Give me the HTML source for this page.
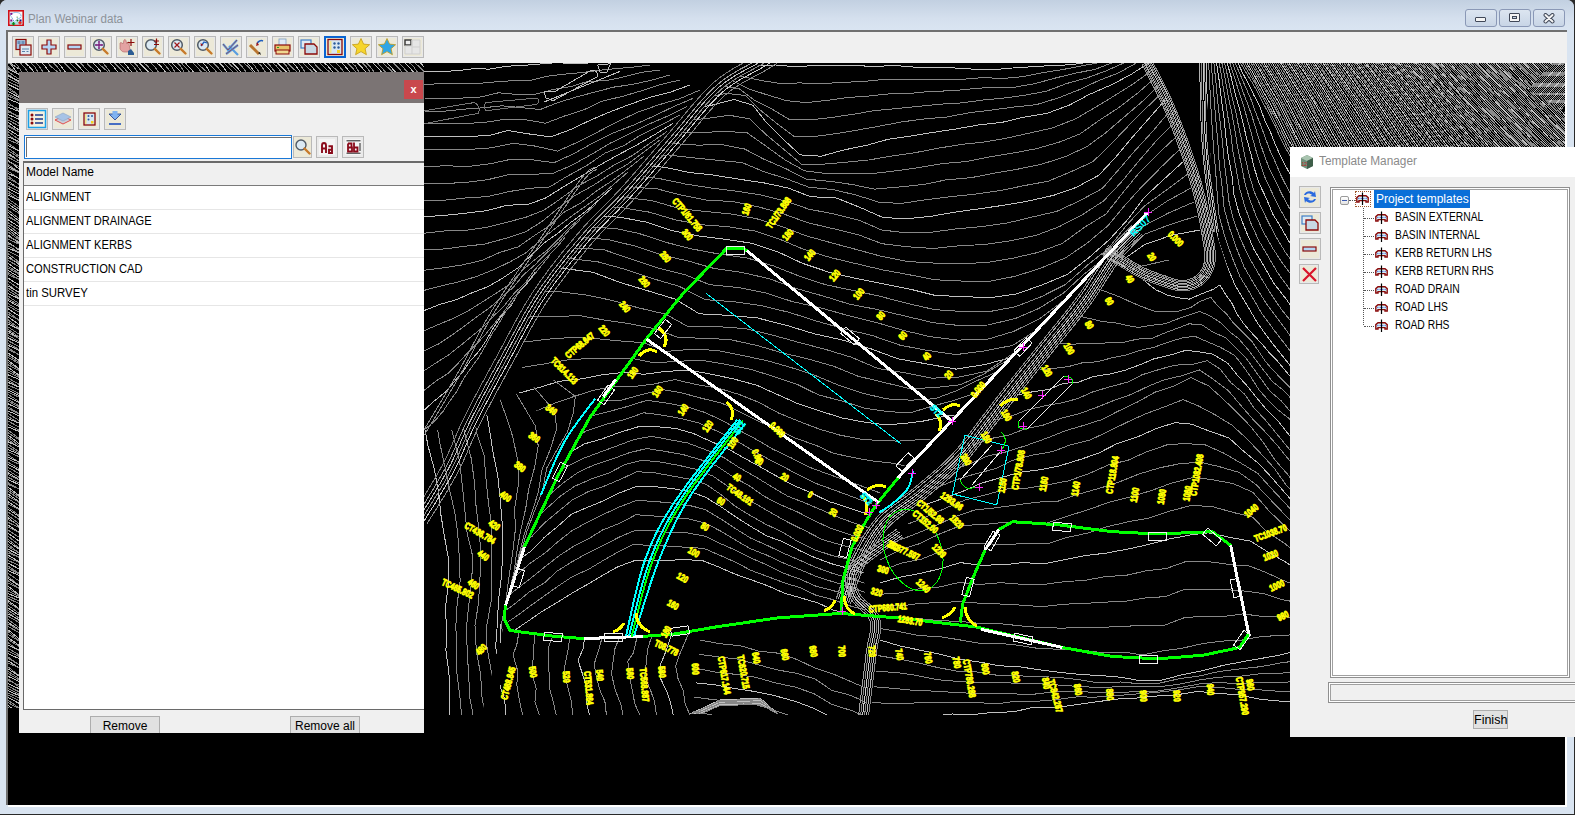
<!DOCTYPE html>
<html><head><meta charset="utf-8"><title>Plan Webinar data</title><style>
*{box-sizing:border-box;margin:0;padding:0}
html,body{width:1575px;height:815px;overflow:hidden;background:#2a2a2a;font-family:"Liberation Sans",sans-serif}
.abs{position:absolute}
#win{left:0;top:0;width:1574px;height:814px;background:#d9e4f1;border-radius:7px 7px 0 0;overflow:hidden}
#title{left:0;top:0;width:1574px;height:31px;background:linear-gradient(#c2d0e1,#d5e0ee 60%,#dae5f2)}
#ttxt{left:28px;top:12px;font-size:12px;color:#8d9299;transform:scaleX(0.965);transform-origin:0 0}
.wb{top:9px;width:32px;height:18px;border:1px solid #8a98b6;border-radius:3px;background:linear-gradient(#dce5f0,#c8d5e6)}
#tb{left:6px;top:30px;width:1561px;height:33px;background:#f0f0f0;border-top:2px solid #707070;border-left:2px solid #707070}
#canvas{left:8px;top:63px;width:1557px;height:742px;background:#000;overflow:hidden}
#lp{left:19px;top:72px;width:405px;height:661px;background:#f0f0f0;overflow:hidden}
#lpt{left:0;top:0;width:405px;height:31px;background:#7b7474}
#lpx{left:385px;top:8px;width:19px;height:19px;background:#c9484d;color:#fff;font-size:11px;text-align:center;line-height:18px;font-weight:bold}
#search{left:5px;top:63px;width:268px;height:24px;border:1px solid #1a78d6;background:#fff}
#list{left:4px;top:89px;width:401px;height:549px;background:#fff;border-top:2px solid #6a6a6a;border-left:1px solid #6a6a6a;border-bottom:1px solid #6a6a6a}
#lhead{left:0;top:0;width:401px;height:23px;background:#f0f0f0;border-bottom:1px solid #7a7a7a}
.row{left:0;width:401px;height:24px;border-bottom:1px solid #e6e6e6;font-size:12px;color:#000;padding-left:2px;line-height:22px;white-space:nowrap}
.row span{display:inline-block;transform-origin:0 50%}
.btn{height:20px;border:1px solid #adadad;background:#e1e1e1;font-size:12px;text-align:center;line-height:19px;color:#000}
#tm{left:1290px;top:147px;width:290px;height:590px;background:#f0f0f0}
#tmt{left:0;top:0;width:290px;height:30px;background:#fff}
#tree{left:40px;top:40px;width:240px;height:491px;background:#fff;border:1px solid #8f8f8f;box-shadow:inset 0 0 0 1px #fff,inset 0 0 0 2px #a0a0a0}
.ti{font-size:12px;color:#000;height:18px;line-height:18px;white-space:nowrap;transform-origin:0 50%}
</style></head><body><div id="win" class="abs">
  <div id="title" class="abs"></div>
  <svg class="abs" style="left:8px;top:10px" width="16" height="16" viewBox="0 0 16 16"><rect x="0.8" y="0.8" width="14.4" height="14.4" fill="#f4fafa" stroke="#d01018" stroke-width="1.6"/><rect x="2" y="11.5" width="12" height="3" fill="#a8e0e0"/><path d="M2.5 5.5C3.5 3 6 2.5 8 2.5S13 3 13 6 10 8 9 9 7 12 6.5 12 4.5 8 2.5 5.5z" fill="#fff" stroke="#5a9ad8" stroke-width="1" stroke-dasharray="1.2 0.8"/><rect x="2.3" y="2.8" width="2" height="2" fill="#80108a"/><rect x="2.3" y="9.5" width="2" height="2" fill="#80108a"/><rect x="11.5" y="9.5" width="2" height="2" fill="#10108a"/><rect x="8.5" y="6.5" width="1.5" height="1.5" fill="#9ac89a"/><circle cx="9.5" cy="10.5" r="1" fill="#106a10"/><path d="M5.5 12v3.5M3.8 13.8h3.4" stroke="#0a8a1a" stroke-width="1.3"/><path d="M12 11v3.4M10.3 12.8h3.4" stroke="#f01010" stroke-width="1.3"/></svg>
  <div id="ttxt" class="abs">Plan Webinar data</div>
  <div class="abs wb" style="left:1465px"><div class="abs" style="left:9px;top:7px;width:11px;height:5px;border:1px solid #404858;border-radius:1px;background:#f4f4f4"></div></div>
  <div class="abs wb" style="left:1499px"><div class="abs" style="left:9px;top:3px;width:11px;height:9px;border:1px solid #404858;border-radius:1px;background:#f4f4f4"><div class="abs" style="left:2px;top:2px;width:5px;height:3px;border:1px solid #404858;background:#c8d4e4"></div></div></div>
  <div class="abs wb" style="left:1533px"><svg class="abs" style="left:9px;top:3px" width="12" height="11" viewBox="0 0 12 11"><path d="M2.5 2L9.5 8.5M9.5 2L2.5 8.5" stroke="#404858" stroke-width="4" stroke-linecap="round"/><path d="M2.5 2L9.5 8.5M9.5 2L2.5 8.5" stroke="#f4f4f4" stroke-width="2" stroke-linecap="round"/></svg></div>
  <div id="tb" class="abs"></div>
  <div class="abs" style="left:6px;top:30px;width:2px;height:775px;background:#707070"></div>
  <div class="abs" style="left:8px;top:805px;width:1559px;height:2px;background:#fff"></div>
  <div class="abs" style="left:1565px;top:63px;width:2px;height:744px;background:#fff"></div>
  <div class="abs" style="left:12px;top:36px;width:22px;height:22px;border:1px solid #b9b9b9;background:#e8e8e8;"><div class="abs" style="left:1px;top:1px;width:18px;height:18px;background:#ece9d8"></div><svg class="abs" style="left:0;top:0" width="20" height="20" viewBox="0 0 20 20"><rect x="3" y="2.5" width="10" height="10" fill="#a9c9e6" stroke="#8b0a0a" stroke-width="1.2"/><rect x="4.5" y="4" width="3" height="3" fill="#6a8fb8"/><rect x="8.5" y="4" width="3" height="3" fill="#6a8fb8"/><rect x="7" y="8" width="11" height="10" fill="#dfe9f2" stroke="#8b0a0a" stroke-width="1.2"/><path d="M9 12h7M9 14.5h3M13.5 14.5h2" stroke="#5a7fa8"/></svg></div><div class="abs" style="left:38px;top:36px;width:22px;height:22px;border:1px solid #b9b9b9;background:#e8e8e8;"><div class="abs" style="left:1px;top:1px;width:18px;height:18px;background:#ece9d8"></div><svg class="abs" style="left:0;top:0" width="20" height="20" viewBox="0 0 20 20"><path d="M8 3h4v5h5v4h-5v5h-4v-5h-5v-4h5z" fill="#b5d6f5" stroke="#8b0a0a" stroke-width="1.2"/></svg></div><div class="abs" style="left:64px;top:36px;width:22px;height:22px;border:1px solid #b9b9b9;background:#e8e8e8;"><div class="abs" style="left:1px;top:1px;width:18px;height:18px;background:#ece9d8"></div><svg class="abs" style="left:0;top:0" width="20" height="20" viewBox="0 0 20 20"><rect x="3" y="8" width="13" height="4" fill="#b5d6f5" stroke="#8b0a0a" stroke-width="1.2"/></svg></div><div class="abs" style="left:90px;top:36px;width:22px;height:22px;border:1px solid #b9b9b9;background:#e8e8e8;"><div class="abs" style="left:1px;top:1px;width:18px;height:18px;background:#ece9d8"></div><svg class="abs" style="left:0;top:0" width="20" height="20" viewBox="0 0 20 20"><circle cx="8" cy="8" r="5.3" fill="#dbe9f3" stroke="#505a66" stroke-width="1.5"/><path d="M11.8 11.8L16.5 16.5" stroke="#c77a2a" stroke-width="2.4" stroke-linecap="round"/><path d="M8 4.5v7M4.5 8h7" stroke="#7a1a7a" stroke-width="1.3"/><path d="M8 3.8l-1.3 1.5h2.6zM8 12.2l-1.3-1.5h2.6zM3.8 8l1.5-1.3v2.6zM12.2 8l-1.5-1.3v2.6z" fill="#7a1a7a"/></svg></div><div class="abs" style="left:116px;top:36px;width:22px;height:22px;border:1px solid #b9b9b9;background:#e8e8e8;"><div class="abs" style="left:1px;top:1px;width:18px;height:18px;background:#ece9d8"></div><svg class="abs" style="left:0;top:0" width="20" height="20" viewBox="0 0 20 20"><path d="M3 6c1-1 2 0 3 1l1-4c1-1 2 0 2 1l1 3 1-2c1 0 2 1 1 2l1 5c0 2-1 3-3 3h-3c-2 0-3-2-4-3z" fill="#e3a2a2" stroke="#b06666" stroke-width="0.6"/><path d="M11 14l3-2 3 4v2h-6z" fill="#2d5d94"/><path d="M14 2v7M10.5 5.5h7" stroke="#8b0a0a" stroke-width="1.2"/></svg></div><div class="abs" style="left:142px;top:36px;width:22px;height:22px;border:1px solid #b9b9b9;background:#e8e8e8;"><div class="abs" style="left:1px;top:1px;width:18px;height:18px;background:#ece9d8"></div><svg class="abs" style="left:0;top:0" width="20" height="20" viewBox="0 0 20 20"><circle cx="8" cy="8" r="5.3" fill="#dbe9f3" stroke="#505a66" stroke-width="1.5"/><path d="M11.8 11.8L16.5 16.5" stroke="#c77a2a" stroke-width="2.4" stroke-linecap="round"/><path d="M13.5 1.5v5M11 4h5M11 7.5h5" stroke="#8b0a0a" stroke-width="1.2"/></svg></div><div class="abs" style="left:168px;top:36px;width:22px;height:22px;border:1px solid #b9b9b9;background:#e8e8e8;"><div class="abs" style="left:1px;top:1px;width:18px;height:18px;background:#ece9d8"></div><svg class="abs" style="left:0;top:0" width="20" height="20" viewBox="0 0 20 20"><circle cx="8" cy="8" r="5.3" fill="#dbe9f3" stroke="#505a66" stroke-width="1.5"/><path d="M11.8 11.8L16.5 16.5" stroke="#c77a2a" stroke-width="2.4" stroke-linecap="round"/><path d="M5.5 5.5l5 5M10.5 5.5l-5 5" stroke="#a01818" stroke-width="1.2"/></svg></div><div class="abs" style="left:194px;top:36px;width:22px;height:22px;border:1px solid #b9b9b9;background:#e8e8e8;"><div class="abs" style="left:1px;top:1px;width:18px;height:18px;background:#ece9d8"></div><svg class="abs" style="left:0;top:0" width="20" height="20" viewBox="0 0 20 20"><circle cx="8" cy="8" r="5.3" fill="#dbe9f3" stroke="#505a66" stroke-width="1.5"/><path d="M11.8 11.8L16.5 16.5" stroke="#c77a2a" stroke-width="2.4" stroke-linecap="round"/><path d="M6 9l3-4l3 1" fill="none" stroke="#1f5fbf" stroke-width="1.3"/><path d="M6 9l-0.5-3 3 2z" fill="#a01818"/></svg></div><div class="abs" style="left:220px;top:36px;width:22px;height:22px;border:1px solid #b9b9b9;background:#e8e8e8;"><div class="abs" style="left:1px;top:1px;width:18px;height:18px;background:#ece9d8"></div><svg class="abs" style="left:0;top:0" width="20" height="20" viewBox="0 0 20 20"><path d="M2 7l5 6 9-10M5 17l12-9M8 9l9 9" fill="none" stroke="#5a9ee0" stroke-width="2.2"/><path d="M2 7l5 6 9-10M5 17l12-9" fill="none" stroke="#a01818" stroke-width="0.6"/></svg></div><div class="abs" style="left:246px;top:36px;width:22px;height:22px;border:1px solid #b9b9b9;background:#e8e8e8;"><div class="abs" style="left:1px;top:1px;width:18px;height:18px;background:#ece9d8"></div><svg class="abs" style="left:0;top:0" width="20" height="20" viewBox="0 0 20 20"><path d="M3 8l9 9" stroke="#b8742e" stroke-width="3"/><path d="M11 16l3 2-1-3z" fill="#222"/><path d="M10 7c1-3 4-4 6-3" fill="none" stroke="#1f5fbf" stroke-width="1.5"/><path d="M9 9l1-4 2 3z" fill="#a01818"/></svg></div><div class="abs" style="left:272px;top:36px;width:22px;height:22px;border:1px solid #b9b9b9;background:#e8e8e8;"><div class="abs" style="left:1px;top:1px;width:18px;height:18px;background:#ece9d8"></div><svg class="abs" style="left:0;top:0" width="20" height="20" viewBox="0 0 20 20"><rect x="6" y="2" width="7" height="7" fill="#dfeaf7" stroke="#7b9cc2" stroke-width="0.8"/><rect x="2" y="8" width="15" height="6" fill="#e8c46a" stroke="#8b0a0a" stroke-width="1.2"/><rect x="3" y="13" width="13" height="4" fill="#f0d890" stroke="#8b0a0a" stroke-width="1"/><rect x="4" y="10" width="2" height="1" fill="#2a9a2a"/></svg></div><div class="abs" style="left:298px;top:36px;width:22px;height:22px;border:1px solid #b9b9b9;background:#e8e8e8;"><div class="abs" style="left:1px;top:1px;width:18px;height:18px;background:#ece9d8"></div><svg class="abs" style="left:0;top:0" width="20" height="20" viewBox="0 0 20 20"><rect x="2" y="3" width="10" height="8" fill="#dfeaf2" stroke="#3f7fc8" stroke-width="1.2"/><path d="M6 7h9l3 3v7h-12z" fill="#c8d8e4" stroke="#8b0a0a" stroke-width="1.3"/></svg></div><div class="abs" style="left:324px;top:36px;width:22px;height:22px;border:1px solid #0a64d2;background:#e8e8e8;box-shadow:inset 0 0 0 1px #0a64d2;"><div class="abs" style="left:1px;top:1px;width:18px;height:18px;background:#ece9d8"></div><svg class="abs" style="left:0;top:0" width="20" height="20" viewBox="0 0 20 20"><rect x="3" y="2.5" width="14" height="15" fill="#d7e6f2" stroke="#8b0a0a" stroke-width="1.3"/><rect x="4.5" y="4" width="2" height="12" fill="#f2e38a"/><circle cx="9.5" cy="6.5" r="1.2" fill="#2a5a9a"/><circle cx="13.5" cy="6.5" r="1.2" fill="#2a5a9a"/><circle cx="9.5" cy="10.5" r="1.2" fill="#2a5a9a"/><circle cx="13.5" cy="10.5" r="1.2" fill="#2a5a9a"/><rect x="12" y="13" width="3" height="3" fill="#f5d320"/></svg></div><div class="abs" style="left:350px;top:36px;width:22px;height:22px;border:1px solid #b9b9b9;background:#e8e8e8;"><div class="abs" style="left:1px;top:1px;width:18px;height:18px;background:#ece9d8"></div><svg class="abs" style="left:0;top:0" width="20" height="20" viewBox="0 0 20 20"><path d="M10 1.5l2.6 5.6 6 .6-4.5 4 1.3 6-5.4-3.1-5.4 3.1 1.3-6-4.5-4 6-.6z" fill="#f6d52a" stroke="#c49a16" stroke-width="0.8"/></svg></div><div class="abs" style="left:376px;top:36px;width:22px;height:22px;border:1px solid #b9b9b9;background:#e8e8e8;"><div class="abs" style="left:1px;top:1px;width:18px;height:18px;background:#ece9d8"></div><svg class="abs" style="left:0;top:0" width="20" height="20" viewBox="0 0 20 20"><path d="M10 1.5l2.6 5.6 6 .6-4.5 4 1.3 6-5.4-3.1-5.4 3.1 1.3-6-4.5-4 6-.6z" fill="#2fa6e6" stroke="#c49a16" stroke-width="0.8"/></svg></div><div class="abs" style="left:402px;top:36px;width:22px;height:22px;border:1px solid #b9b9b9;background:#e8e8e8;"><div class="abs" style="left:1px;top:1px;width:18px;height:18px;background:#ece9d8"></div><svg class="abs" style="left:0;top:0" width="20" height="20" viewBox="0 0 20 20"><rect x="2" y="3" width="6" height="5" fill="#eee" stroke="#333" stroke-width="1.4"/><path d="M9 3h8v14H2v-8h7z" fill="#e6e6e6" stroke="#cfcfcf"/><path d="M9 10h8M9 3v14" stroke="#cfcfcf"/></svg></div>
  <div id="canvas" class="abs"><svg class="abs" style="left:-8px;top:-63px" width="1575" height="815" shape-rendering="crispEdges"><defs><clipPath id="cTL"><path d="M0.0 62.0L764.0 62.0L720.0 89.0L674.0 141.0L626.0 196.0L586.0 233.0L541.0 296.0L505.0 360.0L482.0 420.0L470.0 470.0L424.0 560.0L0.0 560.0Z"/></clipPath><clipPath id="cMID"><path d="M764.0 62.0L1150.0 62.0L1173.0 104.0L1191.0 152.0L1202.0 200.0L1210.0 233.0L1212.0 259.0L1202.0 281.0L1184.0 290.0L1140.0 277.0L1118.0 259.0L1100.0 250.0L1147.0 213.0L1100.0 262.0L1040.0 330.0L990.0 380.0L950.0 420.0L900.0 470.0L872.0 503.0L863.0 560.0L866.0 612.0L840.0 613.0L777.0 618.0L716.0 627.0L675.0 634.0L643.0 636.0L583.0 639.0L552.0 636.0L510.0 630.0L504.0 610.0L520.0 560.0L560.0 470.0L600.0 400.0L482.0 420.0L482.0 420.0L505.0 360.0L541.0 296.0L586.0 233.0L626.0 196.0L674.0 141.0L720.0 89.0L764.0 62.0Z"/></clipPath><clipPath id="cBL"><path d="M0.0 430.0L473.0 430.0L500.0 400.0L560.0 378.0L604.0 396.0L558.0 476.0L524.0 547.0L505.0 605.0L504.0 625.0L480.0 720.0L0.0 720.0Z"/></clipPath><clipPath id="cRD"><path d="M1203.0 62.0L1600.0 62.0L1600.0 720.0L1300.0 720.0L1300.0 378.0L1260.0 332.0L1232.0 282.0L1216.0 232.0L1212.0 180.0L1209.0 120.0L1203.0 62.0Z"/></clipPath><clipPath id="cLR"><path d="M872.0 503.0L900.0 470.0L950.0 420.0L1000.0 370.0L1060.0 310.0L1118.0 259.0L1140.0 279.0L1184.0 294.0L1204.0 285.0L1214.0 262.0L1216.0 232.0L1232.0 282.0L1260.0 332.0L1300.0 378.0L1300.0 720.0L863.0 720.0L870.0 620.0L863.0 560.0Z"/></clipPath><clipPath id="cBOT"><path d="M500.0 600.0L510.0 630.0L552.0 636.0L583.0 639.0L643.0 636.0L675.0 634.0L716.0 627.0L777.0 618.0L840.0 613.0L866.0 612.0L866.0 720.0L500.0 720.0Z"/></clipPath><clipPath id="cRDn"><path d="M1203.0 62.0L1554.0 62.0L1528.0 90.0L1575.0 118.0L1600.0 118.0L1600.0 720.0L1300.0 720.0L1300.0 378.0L1260.0 332.0L1232.0 282.0L1216.0 232.0L1212.0 180.0L1209.0 120.0L1203.0 62.0Z"/></clipPath><clipPath id="cNose"><path d="M1554.0 62.0L1575.0 62.0L1575.0 118.0L1528.0 90.0Z"/></clipPath><clipPath id="cTop"><path d="M8.0 63.0L424.0 63.0L424.0 72.0L8.0 72.0Z"/></clipPath><clipPath id="cLeft"><path d="M8.0 63.0L19.0 63.0L19.0 708.0L8.0 708.0Z"/></clipPath><clipPath id="cv"><rect x="8" y="63" width="1557" height="652"/></clipPath></defs><g clip-path="url(#cv)"><g fill="none" stroke-width="1" clip-path="url(#cTL)"><path stroke="#c0c0c0" d="M424.0 72.0L440.0 71.4L456.9 70.8L474.2 68.6L489.3 69.1L506.5 66.2L524.8 65.3L541.0 63.9L557.2 62.6L573.8 63.8L590.2 62.9L607.2 60.6L624.0 61.0L640.0 60.0"/><path stroke="#878787" d="M424.0 85.0L441.1 83.3L460.1 83.7L477.3 83.6L494.7 81.9L511.4 80.8L529.0 80.8L547.2 76.2L562.6 74.3L581.7 72.6L598.3 70.4L615.3 68.7L632.3 67.2L650.0 65.0"/><path stroke="#878787" d="M424.0 98.0L442.8 98.5L461.5 98.1L480.4 97.0L498.4 92.8L517.2 94.5L535.7 94.2L552.9 89.6L570.9 86.6L587.3 81.5L606.6 80.6L622.9 77.1L641.7 72.3L660.0 70.0"/><path stroke="#878787" d="M424.0 111.0L443.0 111.3L463.9 109.2L482.7 107.8L502.3 105.8L521.9 107.7L540.2 109.5L558.1 102.5L577.0 96.8L594.2 92.2L613.9 87.1L631.3 84.6L650.8 80.4L670.0 75.0"/><path stroke="#878787" d="M424.0 124.0L445.4 123.5L464.8 123.6L485.6 122.2L505.7 119.2L526.7 119.9L545.6 123.2L564.0 116.2L584.5 109.5L602.2 101.1L621.2 96.7L639.8 91.3L660.8 84.5L680.0 80.0"/><path stroke="#c0c0c0" d="M424.0 137.0L445.7 136.8L467.3 136.4L488.6 135.6L508.1 130.5L530.7 134.2L550.7 136.9L571.0 129.4L589.7 120.5L608.9 112.3L628.8 104.7L650.2 97.2L669.9 92.3L690.0 85.0"/><path stroke="#878787" d="M424.0 150.0L445.9 149.3L469.5 149.4L490.2 147.9L513.5 143.3L534.5 146.0L557.6 151.1L577.7 142.2L596.2 132.8L617.3 121.8L636.5 112.7L658.1 105.0L679.8 98.7L700.0 90.0"/><path stroke="#878787" d="M424.0 166.7L445.3 165.8L468.9 166.4L490.8 163.6L510.8 159.3L533.9 160.0L553.9 162.7L573.6 153.8L594.0 142.4L611.2 133.8L633.5 125.1L652.8 116.6L674.2 106.3L693.3 98.3"/><path stroke="#878787" d="M424.0 183.3L446.3 183.5L467.9 182.2L488.5 179.5L509.6 174.3L531.7 174.3L552.5 173.5L571.6 165.4L590.4 155.0L609.4 143.6L626.9 135.0L647.0 124.9L667.6 116.1L686.7 106.7"/><path stroke="#878787" d="M424.0 200.0L445.2 200.1L467.1 197.8L487.5 196.6L508.9 191.6L529.3 188.3L549.4 187.0L566.7 176.6L586.8 165.5L605.2 153.0L623.9 145.6L641.5 134.6L660.8 125.2L680.0 115.0"/><path stroke="#c0c0c0" d="M424.0 216.7L444.9 215.4L466.8 213.0L486.0 210.8L506.6 205.4L529.1 204.1L545.8 197.9L564.0 186.5L581.8 175.9L600.7 164.6L618.4 154.7L636.6 145.1L655.9 133.9L673.3 123.3"/><path stroke="#878787" d="M424.0 233.3L443.8 231.0L465.2 230.5L486.8 227.3L506.9 222.3L526.0 217.2L544.2 210.0L561.1 198.4L578.4 185.7L596.6 176.2L613.6 165.4L632.1 155.7L650.5 142.9L666.7 131.7"/><path stroke="#878787" d="M424.0 250.0L445.4 248.9L464.3 246.3L484.2 244.2L505.1 238.5L525.1 232.1L542.3 221.3L557.2 209.1L573.7 196.2L593.2 185.4L609.1 175.0L628.1 163.9L642.4 153.1L660.0 140.0"/><path stroke="#878787" d="M424.0 270.2L442.2 268.0L462.6 264.9L482.1 260.3L499.9 252.4L518.1 246.9L534.3 235.6L549.8 225.5L563.7 212.4L581.2 202.9L596.8 190.7L612.7 180.4L629.2 167.8L644.0 156.0"/><path stroke="#878787" d="M424.0 290.4L441.4 285.9L459.1 281.7L475.9 276.7L494.8 269.2L511.1 261.3L526.3 252.5L540.6 240.1L554.6 228.9L570.6 216.9L583.7 207.5L600.4 195.7L613.6 184.4L628.0 172.0"/><path stroke="#c0c0c0" d="M424.0 310.6L439.6 304.5L456.0 299.8L472.3 292.7L488.6 286.4L503.1 277.8L517.7 268.1L531.4 255.1L543.9 243.1L558.2 233.1L571.2 222.1L585.1 211.9L597.9 200.8L612.0 188.0"/><path stroke="#878787" d="M424.0 330.8L438.9 324.3L453.9 318.2L469.4 310.1L482.6 301.8L497.5 292.3L510.5 283.7L522.1 270.6L533.8 260.5L547.3 250.1L560.1 237.3L570.9 226.2L583.1 215.9L596.0 204.0"/><path stroke="#878787" d="M424.0 351.0L438.5 344.0L450.6 336.0L464.0 326.5L477.6 316.2L488.7 308.5L501.5 297.6L513.4 287.3L523.1 275.3L535.3 264.5L545.9 253.6L558.8 242.0L569.0 230.2L580.0 220.0"/><path stroke="#878787" d="M424.0 370.8L436.0 362.9L448.2 355.2L462.0 344.3L473.2 335.1L484.0 326.2L493.8 315.9L504.8 305.0L513.9 293.7L525.6 282.4L534.6 269.8L544.6 259.3L555.3 249.0L565.0 237.5"/><path stroke="#878787" d="M424.0 390.5L435.7 381.2L447.5 373.8L456.7 364.9L467.6 352.7L478.1 342.5L486.3 333.4L495.8 321.8L504.9 310.4L513.0 298.5L521.4 288.6L532.2 277.2L541.4 265.7L550.0 255.0"/><path stroke="#c0c0c0" d="M424.0 410.2L434.0 401.2L445.9 391.6L454.0 382.0L463.0 371.5L470.3 360.9L479.1 351.0L486.5 340.0L493.7 327.4L501.6 315.8L511.0 306.0L517.8 293.7L526.6 284.1L535.0 272.5"/><path stroke="#878787" d="M424.0 430.0L434.3 421.5L443.2 411.1L450.2 400.5L457.5 390.3L463.7 378.4L472.0 366.7L478.8 357.5L485.9 345.0L491.7 334.3L498.6 324.0L505.9 311.3L513.6 300.9L520.0 290.0"/></g><g fill="none" stroke-width="1" clip-path="url(#cMID)"><path stroke="#c0c0c0" d="M600.0 64.0L619.9 64.5L639.8 64.9L659.3 64.8L677.5 63.9L699.0 64.3L718.5 63.6L737.2 64.2L757.0 65.3L775.6 65.0L795.7 66.8L816.3 65.3L836.0 65.3L855.2 65.3L873.6 66.7L893.6 65.4L914.8 67.2L933.0 67.9L953.1 67.9L972.1 69.1L992.6 69.7L1012.6 68.0L1031.2 66.8L1050.3 65.6L1070.2 64.8L1090.0 62.0"/><path stroke="#878787" d="M604.0 74.8L623.3 74.6L644.2 73.3L665.5 73.0L684.7 72.2L705.7 70.4L725.6 71.4L743.6 77.0L761.1 80.5L780.8 83.6L800.0 82.9L820.5 83.8L840.8 82.4L862.4 81.6L881.5 79.7L902.1 79.8L921.5 79.4L943.1 79.4L961.9 79.3L982.2 77.7L1003.4 78.4L1022.9 76.7L1043.1 72.6L1062.5 69.6L1081.7 65.9L1102.0 62.0"/><path stroke="#878787" d="M608.0 85.6L629.3 85.4L649.2 82.4L671.8 82.2L691.5 80.0L712.6 79.1L731.5 80.2L748.1 88.7L766.4 94.6L786.3 100.6L806.3 102.6L826.9 100.4L846.6 97.6L867.4 96.2L888.6 93.9L910.9 93.3L931.7 91.3L951.6 90.8L972.5 88.8L993.2 87.1L1013.9 87.3L1035.6 83.5L1054.7 78.2L1073.9 73.5L1095.2 69.3L1114.0 62.0"/><path stroke="#878787" d="M612.0 96.4L633.3 95.3L655.7 93.4L677.1 91.8L698.0 89.2L719.1 85.7L739.1 88.7L754.4 100.3L772.8 109.5L789.1 119.4L810.1 119.9L832.0 117.4L853.7 114.2L874.4 110.6L896.6 108.6L917.4 106.5L940.0 104.2L961.7 102.9L982.3 100.1L1003.0 98.2L1026.0 95.0L1046.4 91.2L1066.7 83.5L1087.1 77.9L1107.0 70.5L1126.0 62.0"/><path stroke="#878787" d="M616.0 107.2L638.5 105.5L660.8 103.1L681.8 99.6L704.7 97.4L726.2 93.4L745.8 95.5L760.6 110.4L776.8 123.4L794.3 136.6L814.8 136.5L837.4 133.4L859.6 129.7L880.7 125.9L902.3 121.8L925.1 118.9L946.9 117.0L969.6 112.7L992.2 110.0L1014.1 107.0L1036.2 104.7L1058.1 98.0L1078.5 90.0L1098.2 80.8L1118.8 72.8L1138.0 62.0"/><path stroke="#c0c0c0" d="M620.0 118.0L643.8 116.1L666.0 112.0L689.5 108.4L710.6 105.5L734.2 99.5L752.8 105.2L766.3 122.4L782.3 138.4L800.1 154.9L821.2 156.2L843.1 150.1L866.3 145.4L887.6 139.4L911.5 135.9L932.9 132.4L955.4 129.1L978.8 124.9L1002.3 122.3L1023.4 117.2L1046.6 113.5L1069.4 105.1L1089.0 94.6L1111.2 84.9L1130.9 74.6L1150.0 62.0"/><path stroke="#878787" d="M614.0 128.8L637.6 126.1L661.1 122.3L684.4 120.6L707.0 118.4L729.5 115.3L749.7 118.9L766.3 134.8L782.8 148.4L801.5 164.2L824.3 164.1L845.3 162.3L868.6 160.0L891.8 156.1L914.5 152.8L937.5 148.3L961.7 144.4L983.7 142.1L1006.4 138.2L1030.7 132.8L1052.6 127.9L1075.7 118.8L1094.7 107.7L1114.8 95.5L1133.6 83.7L1153.0 69.6"/><path stroke="#878787" d="M608.0 139.6L632.3 135.9L654.8 134.5L679.6 133.0L701.5 132.5L726.8 131.3L747.4 133.0L765.9 146.1L785.0 159.9L804.5 170.8L826.3 173.6L848.9 173.1L871.9 173.6L895.3 170.9L917.8 167.8L941.3 163.7L965.9 161.6L990.1 156.8L1012.7 153.1L1036.4 148.7L1059.9 141.9L1080.1 133.9L1099.4 120.2L1119.3 107.3L1138.1 92.7L1156.0 77.2"/><path stroke="#878787" d="M602.0 150.4L625.6 147.6L649.6 145.1L674.2 143.6L697.4 145.1L722.3 144.7L744.6 149.0L763.7 159.1L784.8 168.2L806.7 179.2L830.6 181.4L852.6 184.6L874.5 189.1L897.7 187.1L923.5 184.5L946.0 179.9L971.5 177.6L995.2 173.0L1018.6 169.0L1041.6 164.2L1065.2 156.7L1086.9 146.7L1106.1 132.5L1124.3 116.9L1142.4 101.4L1159.0 84.8"/><path stroke="#878787" d="M596.0 161.2L620.6 158.5L645.4 155.2L668.5 155.0L692.9 157.8L718.6 160.4L741.9 162.5L763.8 171.6L786.7 178.9L808.9 187.2L832.4 189.5L856.1 195.0L879.5 202.4L901.8 203.4L925.9 199.7L950.5 196.7L974.5 194.3L999.5 190.7L1024.3 185.6L1048.0 181.3L1070.2 172.1L1092.8 161.8L1111.2 143.9L1127.6 126.7L1144.8 109.5L1162.0 92.4"/><path stroke="#c0c0c0" d="M590.0 172.0L614.6 170.0L639.4 165.8L664.3 167.2L689.5 172.5L713.1 175.0L739.0 179.2L763.5 182.8L788.4 188.1L810.5 196.7L836.1 197.9L859.8 207.3L882.1 217.2L905.1 219.0L931.4 216.2L956.3 212.0L979.7 208.7L1004.8 205.1L1029.0 200.9L1053.6 195.3L1076.0 187.5L1098.6 175.4L1115.9 157.0L1131.9 137.8L1148.2 119.3L1165.0 100.0"/><path stroke="#878787" d="M584.8 181.0L611.0 178.9L636.2 175.8L659.6 178.6L685.4 184.0L710.4 187.9L736.4 191.2L760.6 194.9L786.1 201.2L808.9 209.2L834.0 213.9L859.5 220.4L881.4 229.9L906.0 232.9L931.5 232.2L956.5 228.8L982.7 226.5L1006.8 223.1L1032.0 217.1L1056.6 211.4L1079.8 200.7L1102.3 188.5L1118.9 169.3L1135.0 150.6L1152.3 131.8L1169.0 112.0"/><path stroke="#878787" d="M579.6 190.0L605.9 188.7L630.9 187.1L656.5 188.7L681.0 195.1L707.0 200.2L732.8 201.5L759.3 207.1L782.6 213.6L807.3 222.6L834.1 228.9L858.2 234.7L882.0 243.7L906.8 246.7L932.9 248.5L959.0 245.8L984.4 244.5L1010.2 240.9L1035.9 235.4L1058.7 226.9L1082.6 214.6L1103.6 200.9L1121.2 182.3L1137.5 162.6L1155.3 141.9L1173.0 124.0"/><path stroke="#878787" d="M574.4 199.0L601.4 197.7L626.3 197.6L652.0 200.6L678.3 208.3L704.0 211.4L730.1 213.8L756.6 218.7L782.1 226.6L806.0 235.8L832.8 243.2L857.8 249.9L882.0 256.5L908.5 261.6L932.9 263.0L959.3 263.9L987.2 262.4L1012.8 258.2L1038.1 252.4L1062.4 243.4L1083.9 227.7L1105.9 214.1L1122.3 193.4L1139.5 172.4L1157.7 154.1L1177.0 136.0"/><path stroke="#878787" d="M569.2 208.0L596.0 207.8L622.8 207.8L649.7 212.2L675.1 219.8L701.1 224.7L727.6 226.6L754.6 231.0L779.2 239.0L803.8 249.4L830.6 257.6L856.7 263.8L883.1 270.0L908.9 274.7L935.3 279.8L962.5 281.1L988.9 281.4L1015.1 276.3L1039.9 268.5L1065.7 257.8L1087.6 242.8L1107.9 225.7L1125.0 205.3L1142.5 185.9L1162.0 166.3L1181.0 148.0"/><path stroke="#c0c0c0" d="M564.0 217.0L591.2 216.2L619.2 217.1L645.7 222.0L672.0 230.7L697.5 235.8L725.5 239.3L751.4 243.2L778.2 252.0L802.1 263.2L829.6 272.4L855.9 278.4L882.2 283.7L909.9 289.1L935.4 295.5L964.1 296.6L989.6 297.8L1017.2 293.8L1042.6 284.7L1067.8 274.2L1089.4 257.2L1109.5 239.5L1128.1 219.1L1144.2 197.5L1164.5 178.7L1185.0 160.0"/><path stroke="#878787" d="M558.0 226.6L585.2 227.7L614.1 228.1L639.3 233.6L665.7 242.3L692.7 249.1L719.3 254.1L747.9 258.2L774.3 266.2L800.5 276.6L826.3 284.9L852.1 290.2L879.1 296.1L906.6 303.2L934.4 309.6L960.8 311.4L989.3 311.6L1015.3 306.8L1041.3 296.7L1065.6 284.4L1087.8 264.9L1108.6 248.3L1125.7 226.2L1144.4 206.0L1166.1 190.2L1188.0 174.0"/><path stroke="#878787" d="M552.0 236.2L579.8 237.2L608.0 239.6L635.6 246.2L661.2 254.7L689.5 261.4L714.2 268.5L742.2 272.5L768.9 278.6L795.4 288.2L824.1 296.3L850.0 304.3L876.8 309.4L905.3 316.1L932.7 322.6L959.0 325.5L987.8 325.0L1015.1 318.6L1039.3 308.2L1063.5 293.1L1083.9 274.3L1106.7 256.5L1124.8 234.8L1144.2 216.4L1167.0 201.2L1191.0 188.0"/><path stroke="#878787" d="M546.0 245.8L575.1 248.3L602.9 249.4L628.9 258.4L656.6 267.6L684.9 274.7L709.7 284.7L738.7 287.6L765.1 292.8L792.7 301.7L821.2 308.0L847.5 315.4L875.2 322.2L902.8 330.2L929.6 336.6L957.6 340.1L987.3 339.3L1013.4 331.5L1038.8 319.2L1061.7 302.0L1082.1 284.5L1104.4 263.5L1122.8 244.3L1143.8 225.9L1168.3 213.1L1194.0 202.0"/><path stroke="#878787" d="M540.0 255.4L567.9 258.3L598.1 261.9L623.8 269.0L652.3 278.5L679.4 286.4L705.1 299.7L733.0 301.6L761.4 305.6L790.0 312.6L817.3 321.3L844.1 328.8L872.8 335.7L900.4 345.3L927.5 350.4L955.9 354.6L984.9 350.9L1012.6 345.4L1036.7 330.1L1059.3 312.4L1080.9 293.6L1102.1 273.7L1121.8 252.5L1145.1 234.0L1169.9 224.6L1197.0 216.0"/><path stroke="#c0c0c0" d="M534.0 265.0L563.0 268.4L592.6 272.2L619.6 282.3L646.5 290.4L675.1 299.1L699.3 313.8L728.0 315.3L757.6 318.0L787.1 325.5L813.9 333.7L843.0 340.2L871.2 348.9L897.8 358.8L926.0 363.8L956.0 369.1L984.7 364.6L1011.2 357.5L1035.2 340.3L1056.5 321.1L1079.0 301.7L1099.7 280.1L1121.0 261.1L1144.6 244.6L1171.6 235.2L1200.0 230.0"/><path stroke="#878787" d="M531.0 290.6L559.2 291.6L584.7 294.8L610.9 300.1L637.9 307.7L665.4 314.1L687.7 326.4L717.0 326.6L744.6 328.5L770.8 334.6L798.8 342.4L826.1 349.6L851.3 357.2L877.6 368.4L904.6 372.8L932.2 378.2L959.6 377.0L986.8 371.2L1007.9 356.9L1031.3 341.7L1051.6 325.6L1071.0 307.1L1093.2 291.7L1116.5 275.2L1142.0 266.1L1168.8 260.0"/><path stroke="#878787" d="M528.0 316.2L554.2 316.8L578.9 315.5L603.5 319.9L629.6 323.7L654.4 328.7L678.3 337.5L704.4 338.3L729.5 339.5L756.9 345.4L781.3 352.6L807.7 358.9L833.8 366.3L858.0 376.2L883.1 382.2L910.3 388.8L936.4 387.4L960.6 384.7L983.5 374.2L1005.1 361.6L1023.7 347.8L1044.0 333.2L1065.7 321.0L1086.5 305.8L1112.7 297.7L1137.5 290.0"/><path stroke="#878787" d="M525.0 341.9L549.0 339.1L573.6 337.3L596.4 338.7L620.6 341.0L643.5 342.7L666.2 351.4L691.2 349.3L716.5 350.3L741.0 355.2L766.9 360.6L791.3 367.6L814.0 375.0L839.2 385.4L862.5 393.3L887.3 398.9L911.1 400.2L935.1 398.7L957.1 390.5L976.9 380.7L998.0 371.5L1016.6 361.7L1037.2 350.5L1058.0 336.4L1082.3 328.1L1106.2 320.0"/><path stroke="#878787" d="M522.0 367.5L543.7 364.0L566.0 360.1L588.1 358.5L609.5 358.1L632.4 358.4L654.5 362.9L679.0 361.1L703.4 360.6L725.9 364.3L750.8 369.4L773.3 376.3L797.0 384.3L818.7 395.0L841.8 400.9L865.3 408.4L888.1 411.6L910.0 412.9L930.8 406.6L951.5 401.1L971.1 394.5L990.8 386.5L1010.3 379.9L1030.9 367.8L1053.0 357.0L1075.0 350.0"/><path stroke="#c0c0c0" d="M519.0 393.1L539.8 387.3L559.8 381.2L581.8 378.8L600.6 375.0L622.9 372.4L643.9 374.3L665.8 371.4L689.2 370.1L711.8 374.3L733.8 379.0L756.6 385.2L777.6 394.6L798.4 403.9L819.1 410.8L842.3 418.0L862.4 421.8L885.2 424.9L904.3 423.5L925.1 420.8L943.8 416.4L963.6 414.3L982.9 411.3L1002.1 398.4L1023.3 388.7L1043.8 380.0"/><path stroke="#878787" d="M516.0 418.8L534.2 411.9L555.2 403.0L572.2 397.1L591.1 390.9L611.3 386.8L631.4 386.9L653.3 384.1L674.8 379.6L697.3 384.7L718.2 388.1L738.7 394.3L758.6 402.2L778.5 413.0L799.1 421.4L819.3 429.1L839.9 435.1L859.8 439.0L878.7 440.6L898.6 441.1L916.7 439.9L935.4 439.8L955.4 440.9L972.8 428.7L993.5 418.7L1012.5 410.0"/><path stroke="#878787" d="M513.0 444.4L529.7 435.1L547.7 424.8L565.0 415.7L582.0 407.7L600.8 401.1L621.2 400.2L641.8 394.5L662.1 389.6L680.8 392.6L700.8 398.1L722.1 403.3L740.8 412.2L759.6 421.7L777.5 429.5L796.1 438.4L815.7 445.2L833.4 453.3L851.5 457.1L870.7 460.8L890.1 462.8L909.0 466.6L927.0 470.9L945.5 459.0L963.4 448.7L981.2 440.0"/><path stroke="#878787" d="M510.0 470.0L525.9 457.8L542.0 448.1L557.9 435.0L573.6 424.6L591.0 416.1L609.4 411.4L627.8 406.4L646.9 400.3L665.7 402.9L686.5 406.7L703.5 412.0L722.5 420.5L738.5 429.9L756.5 439.5L772.7 449.1L790.6 457.6L808.2 466.8L825.4 473.1L844.2 479.8L863.7 486.8L881.1 493.4L900.5 500.1L916.4 490.4L933.5 479.9L950.0 470.0"/><path stroke="#878787" d="M509.2 485.0L524.5 472.8L539.9 462.8L555.1 450.3L571.1 439.2L587.2 430.5L606.7 424.0L623.8 419.8L643.8 412.8L660.8 414.9L680.1 418.3L698.1 422.7L715.7 430.5L733.9 439.5L751.0 449.4L767.5 458.6L783.6 466.9L800.9 476.1L818.1 484.3L836.6 490.9L855.7 498.0L872.8 504.3L892.2 509.1L908.5 503.0L924.8 494.6L941.7 487.5"/><path stroke="#c0c0c0" d="M508.3 500.0L522.7 488.2L539.2 476.6L552.8 465.4L568.2 453.7L584.4 443.9L601.6 439.1L620.8 432.0L638.5 426.7L656.8 426.7L675.9 428.5L693.4 433.5L710.4 441.2L727.2 448.5L744.0 458.0L760.1 466.8L778.5 477.2L793.7 485.5L810.6 492.6L828.5 501.4L846.3 507.0L863.8 513.0L883.6 520.3L900.4 515.6L917.0 509.5L933.3 505.0"/><path stroke="#878787" d="M507.5 515.0L521.4 502.8L535.7 490.8L551.6 479.7L564.7 467.6L581.9 458.9L599.3 452.4L617.3 445.8L633.8 439.6L651.4 436.3L669.7 439.7L687.6 443.0L705.4 449.6L723.6 457.5L739.4 467.7L754.9 476.5L770.6 486.0L787.5 496.1L804.7 502.8L820.7 509.6L838.7 517.4L855.3 523.5L873.5 529.2L891.4 527.6L907.6 525.4L925.0 522.5"/><path stroke="#878787" d="M506.7 530.0L520.2 518.9L534.1 506.4L549.3 494.8L563.0 483.1L578.1 472.3L594.3 464.8L612.3 459.0L628.8 452.9L646.7 448.5L665.1 451.4L682.7 454.5L700.8 459.7L716.9 466.1L732.8 476.7L748.8 485.5L764.0 496.2L779.5 504.3L797.7 512.1L813.6 520.3L829.5 527.8L847.2 533.9L866.3 538.9L882.3 540.3L899.9 539.0L916.7 540.0"/><path stroke="#878787" d="M505.8 545.0L518.9 532.5L533.9 520.8L546.3 508.8L560.4 496.1L574.9 486.1L591.4 479.0L608.8 473.0L625.4 464.4L642.1 460.2L659.6 461.9L677.5 465.1L695.6 469.2L712.8 476.0L727.5 486.1L741.7 496.0L757.6 504.9L773.6 514.3L789.4 523.0L806.3 531.3L822.2 539.5L839.4 544.5L857.9 549.3L874.5 553.2L890.4 555.5L908.3 557.5"/><path stroke="#878787" d="M505.0 560.0L518.5 547.9L532.0 536.4L543.9 523.4L558.0 511.7L572.1 500.1L588.4 491.5L604.1 486.2L621.6 478.8L636.9 471.7L654.8 472.8L672.7 476.1L690.6 479.3L706.5 484.6L721.6 495.0L735.0 506.1L750.3 515.5L765.2 524.0L782.9 532.3L797.7 541.5L813.6 549.4L831.3 555.3L848.3 559.3L865.1 564.5L881.8 569.1L900.0 575.0"/><path stroke="#c0c0c0" d="M504.2 573.3L516.9 561.2L531.5 550.7L544.1 537.6L557.4 526.6L571.5 514.2L587.8 507.2L603.3 500.9L619.5 492.9L637.2 486.1L654.9 486.7L672.7 488.6L690.3 491.8L705.0 496.9L721.9 507.4L736.3 517.3L749.8 525.9L766.3 535.7L783.3 542.0L799.5 550.5L814.2 557.3L831.4 563.7L848.6 568.4L866.7 573.9L882.5 579.6L900.0 584.2"/><path stroke="#878787" d="M503.3 586.7L516.4 575.2L529.8 563.5L545.2 552.9L557.9 541.7L572.1 530.6L587.5 522.2L602.9 514.6L619.7 506.8L636.4 500.5L653.0 501.3L671.1 503.0L689.5 505.5L704.5 509.3L721.4 519.3L735.4 528.5L750.1 537.8L767.6 545.6L781.9 552.5L799.6 560.2L814.5 566.8L831.1 572.9L848.3 577.9L866.8 583.9L883.0 588.8L900.0 593.3"/><path stroke="#878787" d="M502.5 600.0L515.6 590.0L530.9 578.1L544.8 566.9L558.8 556.0L572.9 546.7L588.7 538.7L602.8 529.9L619.8 523.3L635.9 514.7L652.6 515.9L669.8 517.2L688.1 518.9L704.4 522.7L721.2 531.4L736.2 540.4L750.2 548.6L766.2 554.9L783.6 563.1L799.6 569.5L816.0 576.3L831.7 581.4L848.5 586.2L867.1 593.2L882.8 597.2L900.0 602.5"/><path stroke="#878787" d="M501.7 613.3L515.3 603.4L529.7 591.7L544.6 582.7L556.9 571.3L571.8 561.9L587.6 553.1L603.1 545.6L619.0 537.2L635.3 530.3L653.2 530.7L670.4 532.7L687.6 533.0L704.8 536.1L719.3 543.1L735.0 550.0L751.7 558.3L766.8 564.9L782.5 572.9L799.5 578.9L816.4 586.4L833.1 590.6L850.5 595.7L866.5 601.7L882.8 607.3L900.0 611.7"/><path stroke="#878787" d="M500.8 626.7L515.3 617.0L528.6 607.2L543.2 596.7L558.3 586.0L572.1 576.8L588.9 569.1L603.2 560.5L618.9 551.5L633.5 544.4L651.9 545.6L670.2 546.1L687.3 547.4L703.7 548.3L719.6 555.2L736.1 562.5L750.8 570.3L767.7 576.6L784.0 582.7L800.4 587.8L815.9 595.2L832.8 599.6L850.5 606.0L867.1 610.4L882.5 616.2L900.0 620.8"/><path stroke="#c0c0c0" d="M500.0 640.0L513.9 630.7L529.3 620.3L542.4 611.2L558.5 601.6L573.8 592.1L588.4 583.9L603.2 575.0L617.6 566.9L634.0 560.8L651.4 560.0L668.8 560.3L685.8 559.5L703.5 561.0L718.4 566.9L735.2 574.2L752.0 580.1L768.5 586.1L783.9 593.0L801.0 598.0L817.9 602.9L833.6 610.2L850.9 614.0L867.4 619.8L884.3 624.5L900.0 630.0"/></g><g fill="none" stroke-width="1"><path stroke="#c0c0c0" d="M690.0 714.0L720.0 700.0L760.0 698.0L778.0 714.0"/><path stroke="#878787" d="M691.5 714.0L720.0 700.8L760.0 698.9L778.0 714.0"/><path stroke="#878787" d="M693.0 714.0L720.0 701.6L760.0 699.8L778.0 714.0"/><path stroke="#c0c0c0" d="M694.5 714.0L720.0 702.4L760.0 700.7L778.0 714.0"/><path stroke="#878787" d="M696.0 714.0L720.0 703.2L760.0 701.6L778.0 714.0"/><path stroke="#878787" d="M697.5 714.0L720.0 704.0L760.0 702.5L778.0 714.0"/><path stroke="#c0c0c0" d="M699.0 714.0L720.0 704.8L760.0 703.4L778.0 714.0"/><path stroke="#878787" d="M700.5 714.0L720.0 705.6L760.0 704.3L778.0 714.0"/></g><g fill="none" stroke-width="1" clip-path="url(#cBOT)"><path stroke="#c0c0c0" d="M505.0 612.0L500.7 625.0L500.2 642.2L497.0 654.4L498.4 672.0L500.2 686.6L504.6 698.7L506.0 715.0"/><path stroke="#878787" d="M521.8 613.6L519.6 627.9L516.8 644.8L513.0 654.9L517.8 671.1L516.8 685.3L519.8 702.5L522.7 715.0"/><path stroke="#878787" d="M538.6 615.3L534.8 628.3L534.0 643.9L533.1 659.5L531.5 670.9L536.1 688.6L534.9 701.8L539.5 715.0"/><path stroke="#878787" d="M555.5 616.9L554.4 631.6L548.8 646.2L548.3 657.5L549.0 671.7L549.0 686.2L552.9 700.5L556.2 715.0"/><path stroke="#878787" d="M572.3 618.5L570.0 633.8L568.5 648.1L565.7 661.1L563.8 672.2L568.0 687.6L570.9 699.4L572.9 715.0"/><path stroke="#c0c0c0" d="M589.1 620.2L584.6 635.5L583.4 648.1L578.0 660.3L582.8 674.9L586.0 686.5L586.5 702.7L589.6 715.0"/><path stroke="#878787" d="M605.9 621.8L602.4 636.4L599.6 646.7L594.3 663.8L595.6 673.6L599.5 689.2L604.9 701.5L606.4 715.0"/><path stroke="#878787" d="M622.7 623.5L619.3 637.8L614.8 649.0L612.8 663.1L611.5 673.9L615.1 689.7L620.7 704.0L623.1 715.0"/><path stroke="#878787" d="M639.5 625.1L637.1 636.8L633.4 652.8L627.9 661.3L629.2 675.4L631.7 687.2L634.8 703.7L639.8 715.0"/><path stroke="#878787" d="M656.4 626.7L650.5 639.8L647.4 650.5L646.2 663.5L644.7 676.8L650.4 689.8L654.6 701.9L656.5 715.0"/><path stroke="#c0c0c0" d="M673.2 628.4L669.3 641.6L664.9 653.9L660.9 663.7L660.7 678.9L667.1 692.1L670.5 702.9L673.3 715.0"/><path stroke="#878787" d="M690.0 630.0L684.3 643.6L679.9 653.8L675.7 665.7L677.8 678.0L683.3 690.8L685.1 704.0L690.0 715.0"/><path stroke="#878787" d="M700.0 640.0L719.8 643.7L740.2 645.7L759.1 651.2L779.3 653.3L797.6 659.7L815.4 668.3L833.7 674.2L853.4 682.7L870.0 690.0"/><path stroke="#878787" d="M698.6 654.3L717.6 656.8L738.0 659.1L758.1 664.8L776.8 669.8L798.0 673.6L815.6 679.3L831.7 690.3L850.9 695.4L870.0 704.3"/><path stroke="#878787" d="M697.1 668.6L718.4 672.6L735.5 674.3L755.8 677.3L774.5 682.7L795.1 687.1L813.4 693.4L831.3 704.1L852.4 710.9L870.0 718.6"/><path stroke="#c0c0c0" d="M695.7 682.9L714.4 684.7L734.4 688.5L754.2 691.4L774.5 695.6L795.8 701.5L814.0 708.4L832.9 717.9L850.7 723.3L870.0 732.9"/><path stroke="#878787" d="M694.3 697.1L714.4 699.8L735.7 701.9L756.2 704.6L774.9 710.6L793.9 717.2L814.4 721.8L832.4 731.5L849.5 737.6L870.0 747.1"/><path stroke="#878787" d="M692.9 711.4L713.6 715.3L733.4 717.2L754.0 719.7L775.4 726.6L793.9 728.2L812.9 738.2L831.5 743.8L849.9 754.1L870.0 761.4"/><path stroke="#878787" d="M691.4 725.7L712.4 727.9L732.9 732.6L754.7 735.9L773.0 740.1L794.9 745.4L813.7 751.5L831.9 760.6L851.4 768.3L870.0 775.7"/><path stroke="#878787" d="M690.0 740.0L709.7 741.5L730.6 746.2L752.3 747.8L771.4 754.7L791.2 759.7L813.3 765.6L833.4 774.2L849.0 783.3L870.0 790.0"/></g><g fill="none" stroke-width="1" clip-path="url(#cBL)"><path stroke="#c0c0c0" d="M424.0 425.0L428.1 446.1L434.1 468.3L438.5 491.7L440.9 514.8L444.6 537.1L448.4 558.5L448.3 584.0L445.8 604.7L446.2 630.2L446.0 651.0L448.9 672.6L449.9 696.4L450.0 720.0"/><path stroke="#878787" d="M436.2 421.0L439.7 442.4L445.1 467.6L449.4 489.5L454.7 511.6L457.7 533.5L459.3 557.0L460.1 581.0L457.1 604.7L455.8 626.8L456.9 651.4L457.0 674.0L460.0 698.2L462.0 720.0"/><path stroke="#878787" d="M448.4 417.0L454.0 439.3L459.7 461.7L462.5 487.1L464.8 509.4L467.2 533.4L472.7 556.4L471.8 578.9L469.0 603.4L466.5 626.4L467.2 651.5L468.6 673.9L469.8 697.4L474.0 720.0"/><path stroke="#878787" d="M460.6 413.0L465.9 438.2L471.4 459.0L474.6 483.8L476.1 506.7L479.0 529.2L481.1 555.2L480.0 577.1L478.5 603.1L475.0 625.3L476.3 650.6L480.6 674.1L481.9 696.1L486.0 720.0"/><path stroke="#878787" d="M472.8 409.0L477.1 434.1L484.1 455.2L486.0 479.2L488.6 504.1L491.9 527.4L491.7 552.1L491.8 576.7L491.1 601.1L486.9 624.9L486.9 646.9L491.6 673.3L495.4 697.2L498.0 720.0"/><path stroke="#c0c0c0" d="M485.0 405.0L489.4 428.7L493.2 453.6L497.8 475.6L500.3 500.3L502.3 524.4L502.6 549.2L501.7 574.3L498.4 600.5L497.5 622.2L495.6 647.2L500.5 670.5L506.7 697.7L510.0 720.0"/><path stroke="#878787" d="M498.8 396.2L506.5 417.4L512.9 437.2L517.6 460.1L518.6 482.8L514.6 508.8L515.4 529.1L512.8 552.0L508.7 578.6L505.9 600.9L501.6 622.9L503.4 647.6L506.8 670.8L508.8 693.0"/><path stroke="#878787" d="M512.5 387.5L522.8 404.9L535.4 426.0L538.2 445.8L534.6 467.4L528.8 488.5L525.7 508.6L520.4 531.7L516.2 555.4L513.7 576.7L510.1 600.8L509.8 620.9L506.8 642.7L507.5 666.0"/><path stroke="#878787" d="M526.2 378.8L539.1 393.2L554.5 411.3L556.8 428.5L550.0 450.2L541.8 470.2L538.5 491.3L532.4 511.3L524.4 533.5L519.0 554.6L516.3 574.3L511.5 597.8L509.8 616.4L506.2 639.0"/><path stroke="#878787" d="M540.0 370.0L555.6 381.5L575.4 396.5L573.1 413.5L567.3 432.2L556.2 451.1L546.6 468.4L542.7 490.7L534.2 511.8L526.9 531.6L521.8 549.3L514.5 570.2L509.3 591.8L505.0 612.0"/></g><g fill="none" stroke-width="1" clip-path="url(#cRDn)"><path stroke="#c4c4c4" d="M1206.0 62.0L1206.8 84.6L1207.3 107.7L1208.1 130.1L1210.0 152.4L1210.8 175.6L1212.0 198.0L1214.3 220.7L1219.0 242.5L1226.2 263.9L1235.1 285.4L1246.8 304.8L1258.3 324.3L1271.5 342.2L1286.0 360.4L1300.0 378.0"/><path stroke="#8a8a8a" d="M1208.6 62.0L1209.7 83.4L1210.8 105.3L1212.2 127.5L1213.6 149.4L1215.6 170.5L1217.1 192.6L1218.8 214.3L1224.3 235.2L1231.5 255.8L1239.9 276.5L1250.8 294.6L1262.0 313.8L1274.8 331.1L1288.7 349.0L1302.3 365.8"/><path stroke="#8a8a8a" d="M1211.2 62.0L1212.8 82.7L1214.5 103.3L1216.2 124.2L1218.1 145.7L1219.4 166.2L1222.1 186.7L1224.1 208.3L1229.5 227.9L1236.5 248.3L1244.3 267.4L1254.9 285.3L1266.3 303.6L1278.8 320.2L1291.5 337.4L1304.6 353.7"/><path stroke="#8a8a8a" d="M1213.8 62.0L1215.9 81.8L1217.8 102.2L1220.0 121.3L1222.4 141.4L1224.2 161.3L1226.7 181.3L1229.0 201.5L1233.9 221.1L1241.0 240.1L1249.5 258.4L1259.8 275.7L1270.3 293.1L1281.8 309.9L1294.4 325.5L1306.9 341.5"/><path stroke="#c4c4c4" d="M1216.5 62.0L1219.2 80.8L1221.4 99.6L1224.1 118.7L1226.0 138.2L1228.5 157.3L1232.0 176.0L1234.0 194.6L1239.1 213.5L1246.4 232.1L1253.9 249.2L1263.9 266.0L1273.6 283.0L1285.5 298.3L1297.3 314.2L1309.2 329.4"/><path stroke="#8a8a8a" d="M1219.1 62.0L1222.1 79.9L1225.0 97.8L1227.8 116.3L1230.9 134.1L1233.0 151.9L1236.4 170.1L1239.6 188.2L1244.7 206.0L1250.9 223.3L1258.8 240.6L1268.1 256.4L1277.8 273.0L1288.8 288.1L1299.8 302.9L1311.5 317.2"/><path stroke="#8a8a8a" d="M1221.7 62.0L1225.2 79.1L1228.2 96.2L1231.8 112.9L1234.9 130.4L1237.7 147.8L1241.3 164.5L1244.7 182.0L1249.6 199.1L1255.9 215.5L1263.4 232.0L1272.2 247.4L1281.9 262.4L1292.4 276.4L1303.1 291.0L1313.8 305.1"/><path stroke="#8a8a8a" d="M1224.3 62.0L1228.1 78.1L1231.2 94.0L1235.4 110.2L1238.6 126.5L1242.3 143.0L1245.6 159.5L1249.5 175.9L1254.3 192.0L1261.3 207.7L1268.7 223.0L1276.4 237.4L1285.4 252.3L1295.3 265.6L1305.5 279.1L1316.2 292.9"/><path stroke="#c4c4c4" d="M1226.9 62.0L1231.3 77.6L1234.9 92.6L1239.1 107.6L1243.0 123.0L1246.6 138.1L1250.8 153.5L1254.7 169.5L1259.4 184.0L1266.5 198.8L1272.8 214.1L1281.1 227.7L1289.1 241.6L1298.8 255.1L1309.1 268.1L1318.5 280.8"/><path stroke="#8a8a8a" d="M1229.5 62.0L1234.3 76.6L1238.7 90.9L1243.3 104.5L1247.2 118.9L1251.4 133.7L1255.4 148.5L1259.7 162.5L1264.8 177.0L1271.3 191.1L1277.7 204.7L1285.2 218.2L1293.1 231.5L1302.1 244.1L1311.7 256.0L1320.8 268.6"/><path stroke="#8a8a8a" d="M1232.2 62.0L1237.1 75.2L1241.8 88.7L1247.0 102.3L1251.7 115.2L1255.9 128.9L1260.0 142.7L1264.8 156.6L1269.9 170.0L1276.2 182.6L1282.7 195.9L1289.6 208.5L1296.8 221.5L1305.3 232.8L1314.1 244.4L1323.1 256.5"/><path stroke="#8a8a8a" d="M1234.8 62.0L1240.3 74.8L1245.4 86.7L1250.9 99.2L1255.4 111.8L1260.3 124.2L1265.0 137.0L1269.7 149.9L1275.5 162.5L1280.7 175.0L1286.9 187.1L1294.1 199.4L1301.4 211.1L1308.9 221.8L1317.2 233.3L1325.4 244.3"/><path stroke="#c4c4c4" d="M1237.4 62.0L1242.8 73.3L1248.9 84.8L1254.5 96.4L1260.2 107.6L1264.6 120.0L1270.1 131.2L1274.7 143.1L1280.3 155.5L1285.9 166.5L1292.2 178.2L1298.4 190.0L1305.3 200.8L1312.5 210.8L1320.3 221.6L1327.7 232.2"/><path stroke="#8a8a8a" d="M1240.0 62.0L1246.1 72.6L1252.5 83.1L1258.6 93.9L1263.7 104.1L1269.7 115.3L1275.1 125.8L1280.1 137.3L1285.5 148.0L1291.5 158.3L1296.4 169.6L1302.5 179.8L1309.1 190.2L1315.6 200.1L1322.6 210.0L1330.0 220.0"/><path stroke="#8a8a8a" d="M1242.1 62.0L1248.4 72.5L1254.7 82.6L1260.1 93.2L1266.3 103.9L1271.7 115.0L1277.0 126.1L1282.6 137.1L1287.4 147.5L1293.8 158.3L1298.9 169.0L1304.5 180.0L1311.3 189.7L1318.6 199.9L1325.1 209.8L1332.4 219.6"/><path stroke="#8a8a8a" d="M1244.2 62.0L1250.7 72.3L1256.1 82.7L1262.2 93.4L1268.2 104.3L1273.6 114.5L1279.1 125.4L1284.4 136.3L1289.7 147.5L1296.0 158.0L1301.5 168.6L1307.4 179.5L1313.2 189.9L1320.4 199.1L1327.4 209.6L1334.8 219.2"/><path stroke="#c4c4c4" d="M1246.3 62.0L1252.6 72.3L1258.6 83.0L1264.4 93.5L1270.7 104.3L1275.6 114.8L1281.4 125.8L1286.7 136.5L1292.6 147.1L1298.0 158.2L1303.3 168.9L1309.3 179.1L1315.8 189.6L1323.1 199.3L1329.8 209.2L1337.3 218.7"/><path stroke="#8a8a8a" d="M1248.4 62.0L1254.8 72.6L1260.5 82.6L1266.8 92.9L1273.1 103.7L1278.5 114.4L1283.7 125.6L1289.2 136.1L1294.1 146.9L1300.2 158.0L1306.4 168.6L1312.2 178.6L1317.9 188.8L1325.0 198.5L1332.6 208.3L1339.7 218.3"/><path stroke="#8a8a8a" d="M1250.5 62.0L1256.8 72.3L1262.7 83.2L1268.8 93.5L1274.9 103.8L1280.1 114.7L1286.2 125.0L1291.3 136.1L1296.8 147.0L1302.7 157.2L1308.5 168.2L1314.1 178.6L1320.8 188.7L1327.5 198.3L1335.2 208.3L1342.1 217.9"/><path stroke="#8a8a8a" d="M1252.6 62.0L1258.5 72.4L1265.1 82.8L1270.9 93.2L1277.2 103.7L1282.9 114.4L1287.7 124.9L1293.7 135.5L1299.4 146.7L1305.1 156.9L1310.3 168.0L1316.5 178.2L1323.1 188.6L1330.1 198.3L1337.1 208.1L1344.5 217.5"/><path stroke="#c4c4c4" d="M1254.7 62.0L1261.1 72.2L1267.1 83.0L1273.2 93.2L1279.6 103.9L1284.6 114.5L1290.4 125.2L1295.5 135.6L1301.3 146.6L1307.1 156.5L1312.7 167.7L1319.1 178.0L1325.1 188.2L1332.9 197.5L1339.8 207.2L1346.9 217.1"/><path stroke="#8a8a8a" d="M1256.8 62.0L1262.7 72.5L1269.0 82.3L1275.8 92.6L1281.6 103.7L1286.8 114.0L1292.3 125.0L1298.4 135.7L1303.6 146.2L1309.4 156.8L1315.1 167.0L1321.3 177.5L1328.2 187.9L1334.7 196.9L1342.3 206.7L1349.4 216.6"/><path stroke="#8a8a8a" d="M1258.9 62.0L1265.2 72.4L1271.7 82.5L1277.7 93.1L1283.3 103.2L1289.4 113.9L1295.1 124.3L1300.0 135.2L1305.9 145.8L1311.5 156.4L1317.9 167.3L1323.6 177.2L1330.2 187.1L1337.0 197.2L1344.4 206.3L1351.8 216.2"/><path stroke="#8a8a8a" d="M1261.1 62.0L1267.6 72.0L1273.3 82.3L1280.1 93.0L1285.5 102.9L1291.7 113.6L1297.1 124.6L1302.6 135.1L1308.1 145.5L1314.2 155.9L1319.9 166.4L1325.8 177.4L1332.6 187.1L1339.9 196.2L1347.2 206.5L1354.2 215.8"/><path stroke="#c4c4c4" d="M1263.2 62.0L1269.6 72.3L1276.0 82.9L1281.8 92.5L1287.8 102.8L1293.4 113.4L1298.8 124.2L1304.4 134.9L1310.7 145.7L1316.0 156.1L1322.0 166.6L1328.3 176.8L1334.8 187.1L1341.9 196.6L1349.1 205.5L1356.6 215.4"/><path stroke="#8a8a8a" d="M1265.3 62.0L1271.3 71.9L1278.1 82.2L1284.2 92.5L1290.0 103.3L1295.8 113.4L1301.6 123.9L1306.7 134.9L1313.0 145.5L1318.8 156.0L1324.9 166.2L1330.3 176.5L1337.2 186.5L1344.4 195.5L1351.5 205.1L1359.1 214.9"/><path stroke="#8a8a8a" d="M1267.4 62.0L1273.8 72.4L1280.0 82.3L1286.4 92.6L1292.3 102.7L1298.4 113.4L1303.6 123.8L1309.3 134.5L1314.9 145.3L1320.8 155.5L1327.0 165.5L1333.2 175.8L1339.4 186.3L1346.6 195.3L1354.1 205.4L1361.5 214.5"/><path stroke="#8a8a8a" d="M1269.5 62.0L1276.2 72.0L1282.2 82.6L1288.4 92.4L1294.2 102.5L1299.8 113.0L1306.0 123.9L1311.2 134.7L1317.7 144.8L1323.1 155.5L1329.3 165.8L1335.0 176.0L1342.0 185.3L1348.9 195.0L1356.4 204.4L1363.9 214.1"/><path stroke="#c4c4c4" d="M1271.6 62.0L1278.2 72.1L1284.0 82.0L1290.2 92.4L1296.6 102.4L1302.4 113.1L1307.7 123.7L1313.5 133.9L1319.7 144.6L1325.4 155.0L1331.7 165.4L1338.0 175.7L1344.2 185.7L1351.3 194.5L1358.7 204.1L1366.3 213.7"/><path stroke="#8a8a8a" d="M1273.7 62.0L1279.9 72.0L1286.5 82.1L1292.7 92.5L1299.2 103.0L1304.4 113.0L1310.7 123.8L1316.3 133.7L1321.6 144.4L1327.7 154.7L1334.2 164.9L1340.0 175.1L1346.8 185.0L1353.8 194.1L1361.6 204.1L1368.7 213.3"/><path stroke="#8a8a8a" d="M1275.8 62.0L1282.0 71.9L1288.2 82.3L1294.9 92.7L1301.1 102.6L1306.8 113.3L1312.9 123.1L1318.0 133.5L1323.7 144.5L1330.5 154.5L1336.4 164.9L1342.4 174.9L1349.5 184.5L1356.1 193.7L1364.0 203.7L1371.2 212.8"/><path stroke="#8a8a8a" d="M1277.9 62.0L1284.6 72.3L1290.4 82.1L1296.8 92.6L1302.8 102.3L1309.1 113.0L1314.3 122.9L1320.3 133.4L1326.4 143.6L1332.7 154.2L1338.6 164.4L1344.9 174.3L1351.8 184.1L1358.9 193.7L1366.4 203.1L1373.6 212.4"/><path stroke="#c4c4c4" d="M1280.0 62.0L1286.6 71.7L1292.8 82.1L1299.3 91.9L1305.5 102.0L1310.8 112.4L1317.4 122.8L1322.9 133.1L1328.7 143.6L1334.8 154.2L1340.9 164.3L1347.2 173.9L1353.5 183.8L1361.2 193.5L1368.2 202.4L1376.0 212.0"/><path stroke="#8a8a8a" d="M1282.1 62.0L1288.5 71.9L1294.6 81.9L1300.9 91.7L1307.8 102.1L1313.5 112.4L1319.4 123.2L1324.7 133.3L1331.2 143.8L1336.7 154.0L1343.3 163.7L1349.5 174.1L1356.0 183.9L1363.9 192.6L1371.0 202.3L1378.4 211.6"/><path stroke="#8a8a8a" d="M1284.2 62.0L1290.2 72.0L1297.4 81.9L1303.5 92.4L1310.0 102.5L1315.2 112.9L1321.3 122.7L1327.0 133.3L1333.3 143.3L1339.3 153.5L1345.5 163.4L1351.9 173.5L1358.2 183.7L1365.7 192.8L1373.6 201.8L1380.8 211.2"/><path stroke="#8a8a8a" d="M1286.3 62.0L1292.8 71.8L1299.0 82.3L1305.8 92.2L1311.8 101.7L1318.0 112.7L1323.5 122.7L1329.3 133.3L1335.6 142.8L1341.8 153.4L1347.7 163.5L1354.4 173.6L1360.9 183.4L1368.5 192.5L1375.9 201.7L1383.3 210.7"/><path stroke="#c4c4c4" d="M1288.4 62.0L1295.1 72.0L1301.3 81.7L1307.9 92.1L1314.0 101.6L1320.1 112.4L1326.0 122.2L1332.1 132.9L1338.0 142.7L1343.7 153.1L1349.7 163.5L1356.1 172.8L1363.6 182.4L1370.8 192.0L1378.0 200.7L1385.7 210.3"/><path stroke="#8a8a8a" d="M1290.5 62.0L1297.2 72.2L1303.7 81.6L1309.8 91.8L1315.8 102.2L1322.4 112.5L1328.4 122.6L1333.9 132.6L1340.3 142.3L1345.9 153.2L1352.1 163.2L1358.6 172.6L1365.6 182.6L1373.3 191.2L1380.9 200.6L1388.1 209.9"/><path stroke="#8a8a8a" d="M1292.6 62.0L1299.4 71.9L1305.9 81.9L1312.0 92.2L1318.8 101.8L1324.3 112.1L1330.4 122.0L1336.6 132.3L1342.7 142.6L1348.8 152.9L1354.5 162.2L1361.1 172.6L1367.9 181.9L1375.4 190.8L1383.0 200.3L1390.5 209.5"/><path stroke="#8a8a8a" d="M1294.7 62.0L1301.2 72.2L1307.7 82.0L1314.5 91.7L1320.5 101.5L1326.7 112.2L1332.9 122.3L1338.9 132.2L1344.5 142.7L1350.9 152.0L1357.3 162.4L1363.7 172.1L1370.6 181.7L1378.0 191.1L1385.4 200.1L1392.9 209.1"/><path stroke="#c4c4c4" d="M1296.8 62.0L1303.7 71.5L1310.2 81.9L1316.4 91.3L1322.7 101.3L1328.5 111.7L1334.9 122.2L1340.9 132.2L1346.9 141.7L1353.0 151.8L1359.4 161.9L1365.8 171.8L1372.5 181.1L1380.7 190.4L1388.0 199.6L1395.4 208.6"/><path stroke="#8a8a8a" d="M1298.9 62.0L1305.5 72.0L1312.3 81.8L1318.8 91.4L1324.7 101.1L1330.9 111.3L1336.8 121.7L1342.9 131.6L1349.0 142.2L1355.4 152.0L1362.1 161.9L1368.5 171.8L1375.4 181.1L1383.1 190.1L1390.1 199.3L1397.8 208.2"/><path stroke="#8a8a8a" d="M1301.1 62.0L1307.3 71.8L1314.5 81.4L1320.6 91.3L1327.2 101.7L1333.0 111.6L1338.8 121.3L1345.2 131.7L1351.7 142.0L1357.7 151.4L1364.2 161.8L1370.7 171.4L1377.7 180.6L1385.2 189.6L1392.8 199.0L1400.2 207.8"/><path stroke="#8a8a8a" d="M1303.2 62.0L1309.6 72.0L1316.0 81.3L1322.6 91.2L1329.2 101.2L1335.6 111.0L1341.7 121.2L1347.4 131.4L1353.6 141.5L1359.6 151.4L1365.9 161.0L1372.6 171.0L1380.1 179.9L1387.1 189.3L1394.8 198.5L1402.6 207.4"/><path stroke="#c4c4c4" d="M1305.3 62.0L1312.1 72.1L1318.8 81.9L1324.8 91.4L1331.1 101.3L1337.7 111.4L1344.0 121.1L1349.7 131.6L1356.2 141.0L1362.2 151.3L1368.3 161.3L1375.5 170.8L1382.0 180.0L1389.6 189.3L1397.3 197.6L1405.1 206.9"/><path stroke="#8a8a8a" d="M1307.4 62.0L1313.9 71.5L1320.9 81.3L1326.9 91.2L1333.5 101.2L1340.1 111.0L1346.2 120.8L1352.0 131.4L1358.5 141.1L1364.2 151.3L1370.8 160.9L1377.2 170.1L1384.6 179.9L1392.5 188.5L1399.7 197.6L1407.5 206.5"/><path stroke="#8a8a8a" d="M1309.5 62.0L1316.0 71.5L1322.4 81.1L1329.0 91.4L1336.1 101.3L1342.0 111.0L1347.9 120.9L1354.2 131.1L1360.8 140.7L1366.7 150.8L1373.6 160.9L1380.2 170.3L1387.3 179.3L1394.8 188.0L1402.7 197.0L1409.9 206.1"/><path stroke="#8a8a8a" d="M1311.6 62.0L1318.4 71.9L1325.1 81.3L1331.5 90.7L1338.2 101.0L1343.8 110.7L1350.2 120.8L1356.4 130.5L1362.8 140.8L1369.1 150.4L1375.5 160.6L1382.4 170.0L1389.1 179.2L1397.0 188.0L1404.7 196.4L1412.3 205.7"/><path stroke="#c4c4c4" d="M1313.7 62.0L1320.4 71.9L1326.7 81.5L1333.4 90.7L1339.7 100.7L1346.1 110.5L1352.4 120.9L1358.8 130.6L1365.3 140.2L1371.8 150.3L1378.1 160.3L1384.3 169.4L1391.8 178.7L1399.8 187.3L1406.9 196.6L1414.7 205.3"/><path stroke="#8a8a8a" d="M1315.8 62.0L1322.7 71.5L1328.8 81.3L1335.8 91.3L1342.3 100.8L1348.7 110.8L1354.9 120.1L1361.2 130.3L1367.3 140.2L1374.0 149.7L1380.5 159.4L1387.1 169.5L1393.8 178.3L1402.1 187.0L1409.2 196.3L1417.2 204.8"/><path stroke="#8a8a8a" d="M1317.9 62.0L1324.4 72.0L1331.1 81.6L1338.0 90.6L1344.2 100.7L1350.3 110.3L1356.9 120.0L1363.6 130.2L1369.5 139.9L1375.7 149.8L1382.7 159.6L1389.5 169.2L1396.4 177.7L1403.9 186.9L1412.0 195.3L1419.6 204.4"/><path stroke="#8a8a8a" d="M1320.0 62.0L1326.9 71.9L1333.0 81.3L1340.3 91.0L1346.4 100.4L1352.6 110.2L1359.3 120.5L1365.4 130.1L1372.2 139.9L1378.1 149.3L1385.2 158.8L1391.6 168.5L1398.6 177.7L1406.4 186.2L1414.6 195.4L1422.0 204.0"/><path stroke="#c4c4c4" d="M1322.1 62.0L1329.1 71.2L1335.8 81.2L1342.2 91.1L1348.8 100.8L1355.3 109.9L1361.7 119.9L1367.8 129.8L1374.2 139.2L1380.7 149.3L1387.0 159.1L1393.9 168.3L1401.0 177.0L1408.9 186.0L1417.0 195.0L1424.4 203.6"/><path stroke="#8a8a8a" d="M1324.2 62.0L1330.7 71.4L1338.0 80.8L1344.7 90.9L1351.3 100.1L1357.6 110.1L1363.6 119.7L1369.9 129.7L1376.2 139.7L1383.2 149.3L1389.6 158.8L1396.1 167.7L1403.3 177.1L1411.7 185.6L1419.1 194.2L1426.8 203.2"/><path stroke="#8a8a8a" d="M1326.3 62.0L1333.2 71.9L1340.0 81.1L1346.9 90.6L1353.5 100.5L1359.7 110.1L1365.8 119.6L1372.1 129.6L1379.0 138.9L1385.2 148.6L1391.6 158.1L1398.9 167.7L1406.2 176.4L1414.0 185.4L1421.9 194.0L1429.3 202.7"/><path stroke="#8a8a8a" d="M1328.4 62.0L1335.0 71.2L1342.2 81.3L1348.3 90.6L1355.5 100.0L1361.4 109.8L1368.2 119.5L1374.6 128.8L1380.9 138.8L1387.9 148.7L1394.4 158.0L1401.1 167.5L1408.7 176.2L1416.3 185.0L1423.8 193.5L1431.7 202.3"/><path stroke="#c4c4c4" d="M1330.5 62.0L1337.0 71.4L1344.1 81.3L1350.6 90.8L1357.7 100.3L1363.9 109.7L1370.4 119.6L1377.1 128.7L1383.5 138.9L1390.1 148.1L1396.3 158.1L1403.6 167.0L1410.7 175.8L1418.3 184.3L1426.2 193.0L1434.1 201.9"/><path stroke="#8a8a8a" d="M1332.6 62.0L1339.5 71.7L1346.2 80.8L1352.8 90.4L1359.4 99.9L1365.8 109.8L1372.7 118.9L1378.7 128.7L1385.3 138.8L1392.1 147.6L1398.6 157.7L1406.0 166.7L1413.4 175.4L1420.7 184.4L1428.8 192.8L1436.5 201.5"/><path stroke="#8a8a8a" d="M1334.7 62.0L1341.3 71.5L1348.1 81.2L1355.5 90.5L1361.9 99.6L1367.9 109.4L1374.7 119.2L1381.6 128.6L1387.9 138.6L1394.2 147.4L1400.8 157.5L1408.0 166.7L1415.9 175.0L1423.4 183.9L1431.1 192.5L1438.9 201.1"/><path stroke="#8a8a8a" d="M1336.8 62.0L1343.7 71.6L1350.5 81.1L1357.2 90.6L1364.1 99.9L1370.5 109.5L1376.9 119.1L1383.8 128.1L1390.0 137.9L1396.4 147.2L1403.6 156.6L1410.5 165.8L1417.6 174.9L1425.9 183.7L1433.5 192.1L1441.4 200.6"/><path stroke="#c4c4c4" d="M1338.9 62.0L1345.9 71.0L1352.6 80.8L1359.1 90.2L1366.2 99.8L1372.4 109.5L1379.3 118.7L1385.4 128.6L1392.4 138.2L1399.4 147.1L1405.8 156.7L1412.9 165.8L1420.3 174.3L1428.4 182.8L1435.9 191.9L1443.8 200.2"/><path stroke="#8a8a8a" d="M1341.1 62.0L1347.7 71.2L1354.9 80.4L1361.6 90.5L1368.2 99.8L1374.9 109.1L1381.4 119.0L1387.7 128.2L1394.5 137.3L1401.2 147.4L1408.0 156.4L1415.4 165.2L1422.7 174.6L1430.9 182.6L1438.2 191.5L1446.2 199.8"/><path stroke="#8a8a8a" d="M1343.2 62.0L1350.0 71.0L1356.6 81.0L1363.8 90.4L1370.8 99.3L1377.0 108.9L1383.6 118.3L1390.1 127.7L1396.7 137.5L1403.6 146.4L1410.4 156.5L1417.7 165.5L1425.3 173.7L1433.1 182.3L1440.6 190.8L1448.6 199.4"/><path stroke="#8a8a8a" d="M1345.3 62.0L1352.5 71.5L1359.2 80.5L1366.1 89.8L1372.6 99.6L1379.6 108.9L1385.9 118.3L1392.2 127.9L1399.2 136.8L1405.8 146.4L1413.0 156.2L1419.6 164.8L1427.2 173.3L1435.0 181.9L1442.9 190.6L1451.1 198.9"/><path stroke="#c4c4c4" d="M1347.4 62.0L1353.9 71.5L1361.4 80.4L1368.0 90.0L1375.2 99.0L1381.7 108.6L1388.3 118.3L1394.6 127.3L1401.3 137.1L1408.3 146.1L1414.8 155.6L1421.7 164.7L1430.0 172.9L1437.3 181.9L1445.7 190.4L1453.5 198.5"/><path stroke="#8a8a8a" d="M1349.5 62.0L1356.4 71.7L1363.6 80.4L1370.1 89.5L1377.1 99.3L1383.7 108.7L1390.7 118.3L1396.8 127.0L1403.4 137.1L1410.3 146.5L1417.4 155.0L1424.4 164.1L1431.9 172.8L1439.8 180.9L1447.6 190.1L1455.9 198.1"/><path stroke="#8a8a8a" d="M1351.6 62.0L1358.4 71.3L1365.1 80.5L1372.6 90.1L1379.0 99.5L1386.0 108.3L1392.2 117.7L1399.0 126.9L1406.0 136.9L1412.8 146.1L1419.9 155.5L1426.8 164.2L1434.6 172.9L1442.5 181.2L1450.4 189.6L1458.3 197.7"/><path stroke="#8a8a8a" d="M1353.7 62.0L1360.9 70.9L1367.9 80.4L1374.7 90.0L1381.0 99.1L1388.2 108.4L1394.8 117.8L1401.4 127.0L1408.5 136.6L1415.2 146.0L1422.1 155.0L1429.2 163.8L1437.0 172.6L1444.8 180.2L1452.7 188.8L1460.7 197.3"/><path stroke="#c4c4c4" d="M1355.8 62.0L1363.0 71.4L1369.9 80.7L1376.7 89.6L1383.2 98.8L1390.5 108.0L1397.0 117.4L1403.5 126.6L1410.3 136.3L1417.2 145.7L1423.9 155.0L1431.7 163.8L1439.0 171.5L1447.4 180.3L1454.9 188.9L1463.2 196.8"/><path stroke="#8a8a8a" d="M1357.9 62.0L1364.7 70.9L1372.1 80.6L1378.6 89.4L1385.8 98.9L1392.7 107.9L1399.6 117.2L1405.7 126.8L1412.8 135.9L1419.7 145.3L1426.7 154.2L1433.7 162.9L1441.2 171.5L1449.2 180.1L1457.2 188.2L1465.6 196.4"/><path stroke="#8a8a8a" d="M1360.0 62.0L1367.0 71.4L1374.1 80.3L1380.8 89.6L1387.6 98.5L1394.9 108.3L1401.8 117.6L1408.3 126.2L1415.2 136.0L1421.6 144.8L1429.2 153.8L1436.0 162.7L1444.2 170.9L1451.7 179.4L1459.9 187.8L1468.0 196.0"/><path stroke="#8a8a8a" d="M1362.1 62.0L1369.5 70.8L1376.0 80.3L1382.8 89.2L1390.4 99.0L1396.9 108.3L1403.5 117.3L1410.7 126.7L1417.1 135.6L1424.6 144.8L1431.3 153.7L1438.8 162.9L1446.0 171.2L1454.2 179.4L1462.2 187.4L1470.4 195.6"/><path stroke="#c4c4c4" d="M1364.2 62.0L1371.6 70.9L1378.3 80.0L1385.0 89.0L1392.1 98.3L1399.3 107.4L1405.8 116.6L1412.4 126.2L1419.8 135.4L1426.6 144.0L1433.5 153.3L1441.0 162.4L1448.6 170.5L1456.3 178.8L1464.4 187.3L1472.8 195.2"/><path stroke="#8a8a8a" d="M1366.3 62.0L1373.0 71.3L1380.5 80.3L1387.2 89.2L1394.3 98.3L1401.4 107.4L1407.8 116.9L1414.7 126.3L1421.9 134.7L1429.2 144.2L1435.6 153.2L1443.5 161.8L1451.1 170.1L1458.8 178.4L1467.1 186.5L1475.3 194.7"/><path stroke="#8a8a8a" d="M1368.4 62.0L1375.8 71.4L1382.6 80.3L1389.9 89.1L1396.8 98.0L1403.2 107.3L1410.4 116.3L1417.6 125.8L1424.4 134.8L1431.5 144.0L1438.4 152.9L1445.5 161.9L1453.1 169.8L1461.4 178.0L1469.2 186.0L1477.7 194.3"/><path stroke="#8a8a8a" d="M1370.5 62.0L1377.4 71.3L1384.9 80.4L1392.1 89.5L1399.1 98.2L1405.4 107.2L1412.5 116.3L1419.1 125.5L1426.8 134.3L1433.4 143.4L1440.3 153.0L1447.9 161.5L1455.5 169.6L1463.9 177.4L1471.9 185.7L1480.1 193.9"/><path stroke="#c4c4c4" d="M1372.6 62.0L1380.0 71.4L1387.0 80.4L1393.9 88.9L1400.6 97.9L1408.1 107.5L1415.0 115.9L1421.8 125.1L1428.4 134.5L1435.8 143.7L1442.8 152.8L1450.5 161.2L1457.8 169.3L1465.9 177.2L1474.6 185.3L1482.5 193.5"/><path stroke="#8a8a8a" d="M1374.7 62.0L1382.2 71.2L1389.0 79.8L1396.0 89.3L1403.3 98.0L1409.9 107.1L1416.9 115.8L1423.9 125.6L1431.3 134.2L1438.2 143.4L1444.8 152.5L1452.7 160.4L1460.6 168.7L1468.8 177.4L1476.6 185.2L1484.9 193.1"/><path stroke="#8a8a8a" d="M1376.8 62.0L1384.2 71.0L1391.1 80.2L1398.3 88.9L1405.4 97.6L1412.5 107.4L1419.1 116.0L1426.0 125.0L1433.0 133.7L1440.2 143.3L1447.6 151.6L1455.0 160.6L1462.8 169.0L1471.4 176.5L1479.3 185.0L1487.4 192.6"/><path stroke="#8a8a8a" d="M1378.9 62.0L1386.4 71.3L1393.1 80.3L1400.5 88.7L1407.5 97.8L1414.5 107.2L1421.1 116.0L1428.8 124.5L1435.7 133.9L1442.7 142.7L1449.9 151.5L1456.9 159.9L1464.9 167.9L1473.1 175.9L1481.7 184.5L1489.8 192.2"/><path stroke="#c4c4c4" d="M1381.1 62.0L1388.0 71.1L1395.4 79.5L1402.3 88.8L1409.8 98.1L1416.3 106.7L1423.9 115.7L1430.6 124.4L1437.6 133.7L1444.6 142.2L1451.8 151.6L1459.3 160.1L1467.7 168.3L1475.9 175.9L1484.1 184.1L1492.2 191.8"/><path stroke="#8a8a8a" d="M1383.2 62.0L1390.1 70.6L1397.4 79.6L1405.1 89.1L1411.8 97.7L1418.5 106.4L1425.7 115.5L1433.2 124.3L1440.0 133.0L1447.5 142.3L1454.6 150.8L1461.9 159.5L1470.1 167.2L1478.3 175.5L1486.3 183.3L1494.6 191.4"/><path stroke="#8a8a8a" d="M1385.3 62.0L1392.8 70.6L1399.9 79.9L1406.8 88.3L1413.8 97.9L1421.4 106.2L1428.3 115.8L1434.9 124.7L1442.4 132.9L1449.4 142.1L1456.4 150.6L1464.6 159.0L1472.6 167.6L1480.9 174.8L1488.7 182.9L1497.1 190.9"/><path stroke="#8a8a8a" d="M1387.4 62.0L1394.5 70.5L1401.8 79.4L1409.3 88.7L1416.0 97.6L1423.0 106.7L1430.3 115.2L1437.5 123.9L1444.4 133.3L1452.1 141.8L1458.7 150.7L1467.0 158.6L1474.6 167.3L1483.3 174.6L1490.8 182.5L1499.5 190.5"/><path stroke="#c4c4c4" d="M1389.5 62.0L1396.6 70.6L1403.9 79.8L1411.4 88.7L1418.4 97.1L1425.3 106.2L1432.7 114.7L1439.8 124.0L1447.0 133.0L1454.3 141.1L1461.7 150.1L1468.8 158.6L1477.4 166.4L1485.1 174.3L1493.2 182.1L1501.9 190.1"/><path stroke="#8a8a8a" d="M1391.6 62.0L1398.7 71.1L1406.3 79.3L1413.3 88.7L1420.1 97.0L1427.7 106.0L1435.1 114.9L1442.3 123.7L1449.3 132.1L1456.5 141.2L1463.6 149.9L1471.6 158.2L1479.4 166.5L1487.8 173.9L1496.1 181.5L1504.3 189.7"/><path stroke="#8a8a8a" d="M1393.7 62.0L1401.0 70.4L1408.4 79.3L1415.2 88.4L1422.8 97.5L1430.0 105.7L1436.8 114.8L1444.5 123.5L1451.6 132.2L1458.9 140.6L1465.8 149.8L1473.9 158.0L1481.6 166.0L1490.5 173.7L1498.5 181.7L1506.7 189.3"/><path stroke="#8a8a8a" d="M1395.8 62.0L1403.3 71.0L1410.5 79.6L1417.9 88.5L1424.9 96.8L1431.7 105.8L1439.6 114.9L1446.6 123.4L1453.6 131.8L1460.7 140.9L1468.2 149.1L1476.1 157.7L1484.5 165.8L1492.1 172.9L1500.8 180.8L1509.2 188.8"/><path stroke="#c4c4c4" d="M1397.9 62.0L1405.2 71.0L1412.3 79.2L1419.9 87.9L1427.4 97.2L1434.4 105.8L1441.3 114.7L1448.4 123.3L1455.7 131.5L1463.7 140.9L1471.0 149.1L1478.3 157.6L1486.4 165.5L1495.2 172.7L1502.9 180.5L1511.6 188.4"/><path stroke="#8a8a8a" d="M1400.0 62.0L1407.2 70.9L1414.6 79.3L1422.3 87.8L1428.8 96.5L1436.0 105.9L1443.8 114.7L1450.7 123.3L1458.0 131.7L1465.9 140.3L1472.6 149.0L1480.7 157.1L1488.7 164.7L1497.5 172.3L1505.3 180.7L1514.0 188.0"/><path stroke="#8a8a8a" d="M1402.1 62.0L1409.3 70.5L1416.6 79.5L1423.7 88.1L1431.7 96.8L1438.9 105.9L1445.8 114.0L1452.8 122.8L1460.8 131.8L1468.0 139.7L1475.4 148.4L1483.0 157.0L1491.4 164.7L1499.6 172.3L1508.3 180.2L1516.4 187.6"/><path stroke="#8a8a8a" d="M1404.2 62.0L1411.3 70.6L1419.0 78.9L1426.1 87.9L1433.9 96.6L1440.7 105.7L1447.8 114.1L1455.1 122.3L1463.1 130.9L1469.8 139.6L1477.9 148.1L1485.7 156.4L1493.5 164.0L1502.3 172.0L1510.4 179.3L1518.8 187.2"/><path stroke="#c4c4c4" d="M1406.3 62.0L1413.3 70.6L1421.3 79.0L1428.2 87.9L1435.8 96.2L1442.7 105.4L1450.4 114.3L1457.5 122.3L1465.0 131.2L1472.2 139.7L1479.7 148.0L1487.7 156.4L1496.3 164.0L1504.3 171.3L1512.8 179.4L1521.3 186.7"/><path stroke="#8a8a8a" d="M1408.4 62.0L1416.1 70.9L1423.4 79.1L1430.2 87.9L1437.9 96.2L1445.4 105.2L1452.3 113.9L1460.0 122.5L1467.1 131.1L1475.0 139.2L1482.3 147.6L1490.1 156.1L1498.7 163.7L1506.7 170.9L1515.4 178.9L1523.7 186.3"/><path stroke="#8a8a8a" d="M1410.5 62.0L1418.1 70.8L1425.5 79.5L1432.8 87.5L1439.9 96.1L1447.6 105.2L1454.4 113.7L1462.3 121.9L1469.9 130.4L1477.3 138.9L1484.6 147.5L1492.3 155.8L1500.8 163.6L1508.9 170.8L1517.5 178.6L1526.1 185.9"/><path stroke="#8a8a8a" d="M1412.6 62.0L1420.2 70.5L1427.2 78.9L1434.5 87.8L1442.6 96.1L1449.6 104.7L1457.2 113.6L1464.8 121.9L1472.2 130.0L1479.6 138.5L1486.8 147.0L1495.0 155.2L1503.1 163.2L1511.6 170.3L1519.9 177.6L1528.5 185.5"/><path stroke="#c4c4c4" d="M1414.7 62.0L1421.9 70.7L1429.6 78.7L1437.3 87.4L1444.2 96.2L1452.0 104.9L1459.0 113.1L1466.6 121.5L1474.4 130.0L1481.7 138.3L1489.0 146.9L1497.3 155.3L1505.7 162.6L1514.2 170.2L1522.1 177.6L1530.9 185.1"/><path stroke="#8a8a8a" d="M1416.8 62.0L1423.9 70.3L1431.9 79.2L1438.8 87.3L1446.2 96.3L1454.4 104.3L1461.6 113.4L1469.1 121.6L1476.7 129.7L1484.3 138.5L1491.7 147.1L1499.4 155.0L1507.7 162.5L1516.0 169.7L1524.5 177.1L1533.4 184.6"/><path stroke="#8a8a8a" d="M1418.9 62.0L1426.7 70.6L1433.6 79.3L1441.4 87.4L1448.4 95.8L1456.1 104.4L1463.5 112.7L1471.0 121.5L1478.5 130.1L1486.2 138.1L1493.7 146.8L1501.6 154.2L1510.3 161.9L1518.6 169.5L1527.2 176.9L1535.8 184.2"/><path stroke="#8a8a8a" d="M1421.1 62.0L1428.3 70.5L1436.3 78.9L1443.7 87.4L1450.7 96.1L1458.6 104.7L1465.6 112.9L1473.7 121.4L1480.9 129.9L1488.3 137.9L1496.0 146.6L1504.3 154.2L1512.8 161.2L1520.9 168.9L1529.7 176.2L1538.2 183.8"/><path stroke="#c4c4c4" d="M1423.2 62.0L1430.6 70.3L1438.1 79.1L1445.4 87.5L1453.0 95.7L1460.2 104.0L1468.4 113.0L1475.4 121.2L1483.0 129.1L1490.7 137.9L1498.3 145.8L1506.7 154.0L1515.4 161.3L1523.6 168.9L1532.3 176.3L1540.6 183.4"/><path stroke="#8a8a8a" d="M1425.3 62.0L1432.9 70.1L1440.5 79.3L1448.0 87.0L1454.9 95.9L1463.0 104.4L1470.0 112.4L1477.6 121.0L1485.6 129.1L1493.2 137.4L1500.4 145.6L1509.0 153.4L1517.8 161.1L1525.8 168.0L1534.7 175.8L1543.1 182.9"/><path stroke="#8a8a8a" d="M1427.4 62.0L1434.5 70.2L1442.6 78.6L1449.9 87.3L1457.3 95.7L1465.2 104.3L1472.2 112.5L1480.3 121.0L1487.7 129.1L1495.4 137.5L1502.8 145.3L1511.3 153.5L1519.7 160.8L1528.6 168.2L1536.9 175.5L1545.5 182.5"/><path stroke="#8a8a8a" d="M1429.5 62.0L1437.2 70.0L1444.8 78.9L1452.4 86.9L1459.8 95.2L1467.5 104.0L1474.4 112.3L1482.8 120.8L1490.1 128.5L1497.6 137.2L1505.1 145.1L1514.0 153.0L1521.9 160.4L1530.8 167.8L1539.1 175.1L1547.9 182.1"/><path stroke="#c4c4c4" d="M1431.6 62.0L1439.3 70.0L1447.0 79.0L1453.9 86.7L1461.4 95.6L1469.1 103.6L1477.2 111.8L1484.7 120.2L1492.8 128.8L1499.9 137.1L1507.6 144.8L1515.6 152.7L1524.4 159.6L1533.4 166.9L1541.6 174.2L1550.3 181.7"/><path stroke="#8a8a8a" d="M1433.7 62.0L1441.5 70.4L1448.5 78.6L1456.4 86.6L1464.3 95.6L1471.2 103.5L1479.4 111.5L1487.2 120.2L1494.5 128.6L1502.0 136.2L1509.7 144.6L1518.0 152.0L1526.6 159.3L1535.8 166.5L1543.8 173.8L1552.7 181.3"/><path stroke="#8a8a8a" d="M1435.8 62.0L1443.8 70.1L1450.6 78.3L1458.3 86.6L1466.1 94.9L1473.4 103.6L1481.8 111.7L1488.9 119.8L1496.6 128.2L1504.7 136.1L1512.4 144.1L1520.9 152.1L1529.6 159.6L1538.1 166.0L1546.5 173.8L1555.2 180.8"/><path stroke="#8a8a8a" d="M1437.9 62.0L1445.3 70.4L1453.5 78.6L1460.6 86.9L1468.2 95.1L1476.0 103.2L1483.9 111.4L1491.5 119.9L1499.0 128.1L1507.3 135.8L1514.8 144.0L1523.3 152.0L1531.6 159.1L1540.4 165.9L1548.7 173.2L1557.6 180.4"/><path stroke="#c4c4c4" d="M1440.0 62.0L1447.4 70.6L1455.0 78.4L1462.6 86.8L1470.6 95.4L1478.3 103.2L1486.1 111.7L1493.9 119.5L1501.3 127.7L1509.1 135.4L1517.0 143.6L1525.3 151.6L1534.1 158.9L1542.5 166.0L1551.6 172.5L1560.0 180.0"/><path stroke="#8a8a8a" d="M1442.3 62.0L1449.9 70.6L1457.4 78.1L1465.1 86.9L1472.4 95.1L1480.1 103.3L1488.4 110.9L1496.2 119.0L1503.9 127.2L1511.3 135.8L1519.2 143.5L1526.9 150.9L1535.7 158.2L1544.6 165.1L1553.1 172.6L1561.8 179.5"/><path stroke="#8a8a8a" d="M1444.6 62.0L1452.1 70.2L1459.9 78.3L1466.9 86.6L1475.0 94.9L1482.2 103.1L1490.5 111.2L1498.2 118.6L1505.8 127.4L1513.2 135.4L1521.3 143.3L1529.3 150.8L1537.5 158.1L1546.2 164.5L1555.0 171.8L1563.6 179.1"/><path stroke="#8a8a8a" d="M1446.9 62.0L1454.6 70.3L1461.6 78.3L1469.6 86.5L1476.8 94.7L1484.3 102.6L1492.6 111.0L1499.8 118.5L1507.4 126.5L1515.4 134.7L1522.9 142.4L1531.3 150.2L1539.5 157.2L1548.1 164.0L1556.6 171.6L1565.4 178.6"/><path stroke="#c4c4c4" d="M1449.1 62.0L1456.5 70.4L1464.1 78.6L1471.4 86.7L1479.0 94.2L1486.5 102.3L1494.7 110.5L1502.0 118.2L1509.4 126.6L1517.2 134.1L1525.1 142.6L1533.0 149.8L1541.9 156.5L1550.3 163.8L1558.6 171.1L1567.1 178.1"/><path stroke="#8a8a8a" d="M1451.4 62.0L1458.9 70.4L1466.1 77.7L1473.6 86.3L1481.2 94.2L1488.9 102.4L1496.4 109.9L1504.3 118.4L1511.7 126.0L1519.5 133.8L1527.1 141.8L1535.4 149.6L1543.3 156.8L1551.8 163.2L1560.4 170.8L1568.9 177.6"/><path stroke="#8a8a8a" d="M1453.7 62.0L1460.9 70.3L1468.6 78.1L1476.0 86.1L1483.6 94.0L1490.9 101.9L1498.5 109.8L1506.5 117.8L1514.1 126.1L1521.4 134.1L1528.7 141.6L1537.0 148.7L1545.1 156.5L1553.8 163.5L1562.5 170.5L1570.7 177.2"/><path stroke="#8a8a8a" d="M1456.0 62.0L1463.4 70.0L1470.5 77.8L1478.0 86.0L1486.1 93.8L1493.1 102.1L1500.9 109.8L1508.3 117.6L1515.6 125.2L1523.6 133.1L1530.7 141.7L1538.7 148.7L1547.6 155.3L1556.1 162.9L1564.3 169.8L1572.5 176.7"/><path stroke="#c4c4c4" d="M1458.3 62.0L1465.7 69.6L1473.2 78.2L1480.6 86.0L1487.9 93.7L1495.2 101.5L1503.1 109.7L1510.8 117.4L1517.7 125.3L1525.7 132.7L1532.7 140.9L1540.8 148.4L1549.7 155.4L1557.7 162.6L1565.6 169.5L1574.3 176.2"/><path stroke="#8a8a8a" d="M1460.6 62.0L1468.3 69.8L1475.1 77.7L1482.9 85.9L1490.1 93.3L1497.2 101.7L1505.2 109.1L1512.9 117.2L1520.2 124.9L1527.5 132.9L1534.9 140.8L1543.1 147.7L1551.5 154.6L1559.8 161.6L1567.7 168.9L1576.1 175.8"/><path stroke="#8a8a8a" d="M1462.9 62.0L1470.5 70.1L1477.8 77.8L1484.7 85.4L1492.6 93.2L1499.9 101.5L1507.5 109.2L1515.0 116.5L1522.5 124.9L1529.7 132.2L1537.1 139.8L1544.6 147.6L1553.0 154.4L1561.0 161.6L1569.2 168.6L1577.9 175.3"/><path stroke="#8a8a8a" d="M1465.1 62.0L1472.6 69.7L1480.2 77.7L1487.5 85.5L1494.2 93.3L1502.2 100.9L1509.1 108.5L1516.7 116.8L1524.2 124.3L1531.3 132.0L1539.3 140.2L1547.1 147.2L1555.1 153.9L1563.7 160.6L1571.5 167.6L1579.6 174.8"/><path stroke="#c4c4c4" d="M1467.4 62.0L1474.7 69.6L1482.3 77.7L1489.7 85.2L1496.9 93.5L1504.0 100.9L1511.6 108.9L1518.8 116.2L1526.1 123.9L1533.8 131.6L1541.1 139.2L1548.6 146.7L1557.2 153.5L1565.4 160.6L1573.5 167.6L1581.4 174.3"/><path stroke="#8a8a8a" d="M1469.7 62.0L1476.9 69.9L1484.6 77.8L1491.9 85.0L1498.8 93.1L1506.2 100.5L1513.5 108.1L1520.8 115.9L1528.6 123.9L1535.7 131.7L1543.2 139.1L1550.5 146.4L1559.2 153.0L1566.9 159.9L1575.2 166.9L1583.2 173.9"/><path stroke="#8a8a8a" d="M1472.0 62.0L1479.5 70.1L1486.6 77.3L1494.0 84.9L1501.2 92.9L1507.9 100.2L1515.3 107.8L1523.4 115.4L1530.0 123.8L1537.4 131.3L1545.2 139.1L1552.7 146.2L1560.8 153.1L1568.5 159.9L1577.2 166.5L1585.0 173.4"/><path stroke="#8a8a8a" d="M1474.3 62.0L1481.9 69.4L1488.7 77.4L1495.8 84.6L1503.4 93.1L1510.4 100.1L1517.8 108.0L1525.4 115.2L1532.1 122.7L1539.6 130.7L1547.0 138.0L1554.9 145.8L1563.0 152.5L1570.4 159.1L1579.1 165.7L1586.8 172.9"/><path stroke="#c4c4c4" d="M1476.6 62.0L1483.6 69.9L1491.1 77.4L1498.4 84.7L1505.0 92.5L1512.9 100.0L1519.6 108.0L1527.7 115.2L1534.4 123.1L1542.1 130.2L1549.4 138.3L1556.9 145.4L1564.6 152.3L1572.6 158.4L1580.4 166.0L1588.6 172.5"/><path stroke="#8a8a8a" d="M1478.9 62.0L1486.1 69.3L1492.9 77.1L1500.3 84.6L1507.3 92.4L1514.6 99.8L1521.9 107.2L1529.5 115.0L1536.5 122.6L1544.0 130.1L1551.0 137.3L1559.0 144.5L1566.6 151.8L1574.4 158.2L1582.4 165.2L1590.4 172.0"/><path stroke="#8a8a8a" d="M1481.1 62.0L1488.0 69.3L1495.7 77.2L1502.7 84.9L1509.4 92.0L1516.7 99.6L1523.9 106.9L1531.3 114.5L1538.7 122.2L1545.6 129.4L1553.1 137.6L1560.9 144.1L1568.2 151.0L1576.5 158.0L1584.7 165.1L1592.1 171.5"/><path stroke="#8a8a8a" d="M1483.4 62.0L1490.4 69.5L1497.6 77.3L1504.6 84.2L1512.2 92.0L1519.0 99.5L1526.6 106.8L1533.2 114.1L1540.4 121.6L1548.0 129.4L1554.8 136.8L1562.5 143.9L1570.2 150.9L1578.2 157.1L1586.3 164.1L1593.9 171.0"/><path stroke="#c4c4c4" d="M1485.7 62.0L1493.1 69.6L1499.8 76.7L1507.4 84.5L1514.1 91.7L1520.9 99.1L1528.6 106.6L1535.4 114.0L1542.8 121.4L1550.1 129.0L1556.7 136.4L1564.9 143.3L1572.3 150.2L1580.1 157.1L1587.7 163.9L1595.7 170.6"/><path stroke="#8a8a8a" d="M1488.0 62.0L1495.1 69.8L1502.5 76.6L1509.0 84.0L1516.2 92.0L1523.1 99.2L1530.6 106.9L1538.0 114.2L1545.0 121.4L1551.7 128.6L1559.2 136.1L1566.5 143.5L1574.2 149.7L1582.4 156.5L1590.2 163.3L1597.5 170.1"/><path stroke="#8a8a8a" d="M1490.3 62.0L1497.5 69.7L1504.6 77.0L1511.2 84.3L1518.8 92.0L1525.3 99.1L1532.7 106.3L1539.9 113.8L1547.0 120.7L1553.7 128.0L1561.0 135.5L1568.6 142.8L1576.1 149.5L1583.9 156.1L1591.7 162.8L1599.3 169.6"/><path stroke="#8a8a8a" d="M1492.6 62.0L1499.2 69.5L1506.3 76.6L1513.8 84.4L1520.7 91.8L1527.5 98.8L1534.6 106.1L1542.3 112.9L1549.2 120.7L1556.2 127.8L1563.3 135.3L1570.5 142.6L1578.1 149.3L1586.0 155.9L1593.5 162.7L1601.1 169.2"/><path stroke="#c4c4c4" d="M1494.9 62.0L1501.5 69.3L1508.9 76.4L1515.7 84.0L1522.7 91.2L1530.0 98.8L1536.7 106.0L1543.7 112.7L1550.7 120.7L1557.8 127.4L1565.2 134.8L1572.1 142.0L1580.4 148.6L1588.0 155.4L1595.0 162.3L1602.9 168.7"/><path stroke="#8a8a8a" d="M1497.1 62.0L1503.9 69.5L1511.2 76.7L1518.4 83.6L1524.9 91.3L1532.2 98.1L1538.9 105.7L1546.4 112.4L1552.9 119.9L1560.0 127.6L1567.0 134.6L1574.4 141.2L1582.3 148.3L1589.5 155.0L1596.8 161.3L1604.6 168.2"/><path stroke="#8a8a8a" d="M1499.4 62.0L1506.5 69.6L1513.0 76.9L1520.6 84.1L1527.4 91.2L1533.8 98.3L1541.6 105.1L1548.3 112.4L1555.3 119.9L1561.9 127.1L1568.8 134.1L1576.6 141.4L1583.8 147.7L1591.6 154.5L1599.1 161.4L1606.4 167.7"/><path stroke="#8a8a8a" d="M1501.7 62.0L1508.3 69.0L1515.8 76.6L1522.4 83.9L1529.4 90.5L1536.1 98.1L1543.6 105.2L1550.1 111.9L1557.6 119.7L1564.0 126.4L1571.5 133.7L1578.6 140.9L1586.2 147.3L1593.2 154.2L1600.6 161.0L1608.2 167.3"/><path stroke="#c4c4c4" d="M1504.0 62.0L1511.3 68.9L1518.2 76.2L1524.7 83.8L1531.4 90.8L1538.1 98.2L1545.9 105.1L1552.5 111.6L1559.4 119.0L1566.3 126.4L1572.9 133.7L1580.0 140.7L1587.4 146.8L1594.8 153.3L1602.4 160.0L1610.0 166.8"/><path stroke="#8a8a8a" d="M1506.3 62.0L1513.4 69.0L1519.9 75.9L1526.9 83.4L1534.1 90.4L1540.8 97.7L1547.7 104.4L1554.7 111.6L1561.5 118.6L1568.6 126.1L1575.0 132.8L1582.0 139.6L1589.6 146.4L1596.9 153.0L1604.0 159.5L1611.8 166.3"/><path stroke="#8a8a8a" d="M1508.6 62.0L1515.1 69.3L1522.5 76.1L1528.7 83.6L1535.7 90.1L1543.2 97.8L1549.7 104.3L1556.5 111.2L1563.1 118.5L1570.6 126.1L1576.9 132.7L1584.0 139.6L1591.3 146.0L1599.1 152.6L1606.6 159.4L1613.6 165.9"/><path stroke="#8a8a8a" d="M1510.9 62.0L1517.4 69.4L1524.5 76.2L1531.2 83.1L1538.4 90.0L1545.0 96.9L1552.2 104.0L1559.1 111.5L1565.2 118.6L1572.2 125.7L1579.3 132.5L1586.0 138.9L1593.5 145.7L1600.8 152.7L1608.4 159.1L1615.4 165.4"/><path stroke="#c4c4c4" d="M1513.1 62.0L1520.0 68.7L1527.0 75.8L1533.5 83.0L1540.6 90.2L1547.4 96.9L1554.1 104.3L1560.6 110.7L1567.7 118.3L1574.0 124.9L1580.8 132.1L1588.5 138.5L1595.3 145.1L1603.0 152.1L1609.7 158.8L1617.1 164.9"/><path stroke="#8a8a8a" d="M1515.4 62.0L1522.4 68.7L1528.9 75.7L1535.3 82.5L1542.5 90.1L1549.0 96.5L1555.8 103.8L1563.3 110.5L1569.3 117.3L1576.7 124.8L1583.3 131.8L1590.0 138.4L1597.5 144.7L1604.3 151.1L1611.7 157.7L1618.9 164.4"/><path stroke="#8a8a8a" d="M1517.7 62.0L1524.4 69.1L1531.5 75.9L1538.3 83.1L1544.7 89.5L1551.2 96.5L1558.3 103.4L1564.7 110.4L1571.7 117.5L1578.8 124.4L1585.0 131.4L1591.7 138.1L1599.4 144.7L1606.3 151.2L1613.4 157.4L1620.7 164.0"/><path stroke="#8a8a8a" d="M1520.0 62.0L1526.6 68.8L1533.4 75.7L1540.4 82.8L1546.6 89.2L1553.3 96.8L1560.5 103.2L1567.4 110.0L1573.9 116.7L1580.7 123.8L1587.4 131.3L1593.9 137.8L1601.2 144.0L1608.3 150.5L1615.1 157.2L1622.5 163.5"/><path stroke="#c4c4c4" d="M1522.3 62.0L1529.0 68.7L1535.8 75.6L1542.4 82.3L1548.8 89.3L1555.9 96.6L1562.9 103.0L1569.7 109.4L1575.8 116.6L1582.2 123.7L1589.4 130.9L1596.1 137.3L1603.4 144.0L1610.6 150.2L1617.1 156.6L1624.3 163.0"/><path stroke="#8a8a8a" d="M1524.6 62.0L1531.1 68.6L1538.2 75.9L1544.8 82.4L1551.4 89.0L1558.3 95.7L1565.0 102.9L1571.0 109.2L1578.1 116.5L1584.5 123.2L1591.1 130.4L1597.9 137.1L1604.7 143.6L1611.8 149.7L1618.9 156.1L1626.1 162.6"/><path stroke="#8a8a8a" d="M1526.9 62.0L1533.4 68.5L1540.0 75.5L1547.0 82.6L1553.3 88.8L1560.1 95.5L1567.0 102.5L1573.4 109.3L1579.9 116.1L1586.5 123.0L1592.8 130.2L1600.1 136.3L1607.2 143.1L1614.2 149.1L1620.9 155.5L1627.9 162.1"/><path stroke="#8a8a8a" d="M1529.1 62.0L1535.6 68.8L1542.5 75.8L1549.3 82.2L1555.4 88.8L1562.5 95.7L1568.7 102.1L1575.7 108.8L1582.2 116.0L1588.6 122.8L1595.5 129.7L1602.3 135.7L1609.1 142.0L1615.4 149.2L1622.8 155.2L1629.6 161.6"/><path stroke="#c4c4c4" d="M1531.4 62.0L1538.1 68.8L1544.4 75.2L1551.5 82.4L1557.6 88.6L1564.3 95.9L1571.2 102.3L1578.0 108.7L1584.2 115.9L1590.4 122.1L1597.2 129.3L1603.8 135.8L1610.4 141.7L1617.6 148.3L1624.6 155.0L1631.4 161.1"/><path stroke="#8a8a8a" d="M1533.7 62.0L1540.1 68.3L1546.5 74.9L1553.5 82.3L1559.6 88.5L1566.9 95.3L1573.1 101.9L1579.5 108.8L1586.3 114.9L1592.6 121.8L1599.5 129.1L1606.0 135.3L1612.3 141.2L1619.3 148.1L1626.4 154.6L1633.2 160.7"/><path stroke="#8a8a8a" d="M1536.0 62.0L1542.9 69.0L1549.3 74.9L1555.4 81.9L1562.3 88.2L1568.6 94.8L1575.5 101.9L1582.0 108.6L1588.5 114.9L1594.7 121.8L1600.9 128.4L1607.6 134.7L1614.4 141.3L1621.5 147.4L1628.0 154.0L1635.0 160.2"/><path stroke="#8a8a8a" d="M1538.3 62.0L1544.8 68.3L1551.6 74.9L1557.7 81.6L1564.6 88.6L1570.6 95.0L1577.1 101.2L1584.3 107.9L1590.6 114.8L1597.1 121.7L1603.3 127.7L1609.4 134.5L1616.6 140.7L1623.4 147.3L1629.8 153.5L1636.8 159.7"/><path stroke="#c4c4c4" d="M1540.6 62.0L1547.4 68.2L1553.8 75.3L1559.9 81.7L1566.8 87.8L1573.1 94.8L1579.3 101.1L1585.8 107.9L1592.8 114.5L1598.8 120.7L1605.2 127.7L1611.8 133.8L1618.4 140.6L1625.1 146.8L1632.0 152.9L1638.6 159.3"/><path stroke="#8a8a8a" d="M1542.9 62.0L1549.0 68.4L1555.5 75.4L1561.9 81.4L1568.8 88.1L1574.9 94.9L1581.6 100.8L1587.8 107.3L1594.9 114.0L1600.9 120.7L1606.8 127.6L1613.8 133.7L1620.0 140.0L1626.7 146.0L1633.8 152.5L1640.4 158.8"/><path stroke="#8a8a8a" d="M1545.1 62.0L1551.3 68.5L1557.7 74.8L1564.3 81.4L1571.0 87.5L1577.6 94.6L1584.2 100.6L1589.9 107.3L1596.2 113.9L1603.0 119.9L1609.6 127.1L1615.7 133.6L1622.3 139.3L1628.8 146.1L1635.2 151.9L1642.1 158.3"/><path stroke="#8a8a8a" d="M1547.4 62.0L1553.5 68.7L1560.4 74.7L1566.8 81.2L1573.1 87.5L1579.4 94.3L1586.1 100.8L1592.6 107.2L1598.7 113.1L1604.7 120.0L1611.3 126.5L1617.7 133.0L1624.4 138.9L1631.0 145.3L1637.7 151.3L1643.9 157.8"/><path stroke="#c4c4c4" d="M1549.7 62.0L1555.7 68.6L1562.6 74.6L1569.1 81.2L1574.9 87.1L1581.3 94.1L1587.8 100.4L1594.6 106.8L1600.6 113.0L1606.8 119.8L1613.5 125.8L1619.7 132.3L1626.2 138.3L1632.5 145.2L1639.2 150.9L1645.7 157.4"/><path stroke="#8a8a8a" d="M1552.0 62.0L1558.3 68.6L1564.4 74.9L1570.8 81.0L1577.8 87.0L1583.9 93.9L1590.6 99.9L1596.3 106.4L1602.6 112.4L1608.8 118.9L1614.9 125.6L1621.3 132.5L1627.9 138.6L1634.3 144.3L1641.4 151.1L1647.5 156.9"/><path stroke="#8a8a8a" d="M1554.3 62.0L1560.6 68.6L1566.6 74.6L1573.6 80.6L1579.9 86.8L1585.8 93.5L1592.4 99.8L1598.4 106.0L1604.5 112.4L1611.1 119.3L1617.0 125.6L1623.2 131.6L1629.7 137.6L1636.7 143.8L1642.6 150.4L1649.3 156.4"/><path stroke="#8a8a8a" d="M1556.6 62.0L1562.6 68.4L1569.6 74.4L1575.6 81.1L1582.1 86.8L1587.8 93.5L1594.3 99.8L1601.1 105.7L1607.1 111.8L1612.8 118.9L1619.0 124.9L1625.2 131.5L1631.8 137.3L1638.3 143.9L1644.8 149.5L1651.1 156.0"/><path stroke="#c4c4c4" d="M1558.9 62.0L1565.2 67.9L1571.8 74.8L1577.7 80.9L1584.2 86.7L1590.4 93.4L1596.4 99.3L1603.1 105.9L1608.6 111.7L1615.3 118.6L1621.6 124.7L1627.6 130.6L1633.9 137.2L1640.0 143.1L1646.7 149.2L1652.9 155.5"/><path stroke="#8a8a8a" d="M1561.1 62.0L1567.2 67.8L1573.5 74.7L1579.5 80.9L1585.9 86.5L1592.6 92.6L1598.3 98.7L1605.2 105.5L1611.3 111.4L1616.9 118.0L1623.5 123.9L1629.8 130.8L1635.9 136.6L1642.0 142.8L1648.4 148.8L1654.6 155.0"/><path stroke="#8a8a8a" d="M1563.4 62.0L1569.6 68.2L1575.7 74.2L1582.1 80.6L1588.3 86.2L1594.6 92.4L1601.1 98.7L1606.7 104.7L1613.0 111.6L1619.1 117.6L1625.0 124.2L1631.5 129.8L1637.9 136.5L1643.9 142.1L1650.0 148.0L1656.4 154.5"/><path stroke="#8a8a8a" d="M1565.7 62.0L1572.0 68.1L1578.1 74.2L1584.0 80.4L1590.6 86.6L1596.7 92.4L1602.7 98.2L1609.3 104.6L1614.8 111.1L1621.3 117.6L1627.0 124.0L1633.6 129.6L1639.5 135.8L1645.7 142.3L1652.0 148.1L1658.2 154.1"/><path stroke="#c4c4c4" d="M1568.0 62.0L1574.2 67.9L1580.3 74.1L1586.2 80.5L1592.9 86.3L1599.1 92.3L1604.8 98.2L1611.3 104.5L1617.4 110.5L1623.3 117.3L1629.4 122.8L1635.3 129.5L1641.5 135.3L1647.5 141.6L1654.1 147.4L1660.0 153.6"/><path stroke="#8a8a8a" d="M1570.3 62.0L1576.3 67.9L1583.0 73.9L1588.8 79.9L1595.0 86.1L1601.4 91.9L1607.1 97.8L1613.3 104.1L1619.0 110.8L1625.2 116.8L1631.6 123.2L1637.5 128.9L1643.6 134.8L1649.7 141.4L1655.3 147.2L1661.8 153.1"/><path stroke="#8a8a8a" d="M1572.6 62.0L1579.1 68.3L1584.7 73.8L1591.2 80.3L1597.2 85.8L1602.9 91.8L1609.0 98.0L1615.6 104.2L1621.6 110.3L1627.6 116.6L1633.3 122.7L1639.5 128.5L1645.0 134.4L1651.6 140.8L1657.6 146.3L1663.6 152.7"/><path stroke="#8a8a8a" d="M1574.9 62.0L1581.3 68.3L1587.4 74.1L1593.1 80.2L1599.0 86.1L1605.6 91.4L1611.1 97.4L1617.2 103.5L1623.1 110.2L1629.7 116.1L1634.9 122.0L1640.9 127.9L1647.1 134.5L1653.6 140.4L1659.3 145.9L1665.4 152.2"/><path stroke="#c4c4c4" d="M1577.1 62.0L1583.3 68.2L1589.3 73.8L1595.3 79.4L1601.5 85.3L1607.1 91.3L1613.3 97.4L1619.9 103.3L1625.4 109.5L1631.6 116.0L1637.6 121.9L1642.9 128.0L1649.5 134.0L1655.4 139.9L1661.5 145.7L1667.1 151.7"/><path stroke="#8a8a8a" d="M1579.4 62.0L1585.8 67.5L1591.8 73.7L1597.9 79.5L1604.0 85.2L1609.5 91.6L1615.7 97.0L1621.4 102.9L1627.3 109.1L1633.5 115.0L1639.2 121.6L1644.8 127.5L1650.7 133.5L1656.9 139.1L1663.2 144.9L1668.9 151.2"/><path stroke="#8a8a8a" d="M1581.7 62.0L1587.7 68.2L1594.0 73.7L1599.8 79.2L1606.0 85.7L1611.7 91.1L1617.9 97.3L1624.2 102.7L1629.7 108.6L1635.7 115.1L1640.9 121.0L1647.5 126.9L1653.1 132.7L1659.1 139.2L1664.9 145.1L1670.7 150.8"/><path stroke="#8a8a8a" d="M1584.0 62.0L1589.7 67.4L1595.8 73.6L1602.2 79.7L1608.3 85.3L1613.6 91.2L1620.1 96.5L1626.2 102.8L1631.6 108.7L1637.9 114.2L1643.1 121.0L1649.3 127.0L1655.0 132.6L1660.6 138.5L1666.5 144.6L1672.5 150.3"/><path stroke="#c4c4c4" d="M1586.3 62.0L1592.0 67.4L1598.0 73.2L1604.2 79.6L1610.0 84.9L1615.9 91.1L1622.2 96.8L1628.2 102.3L1633.8 108.3L1639.1 114.6L1645.5 119.9L1650.7 126.5L1657.1 132.0L1662.7 138.2L1668.2 143.8L1674.3 149.8"/><path stroke="#8a8a8a" d="M1588.6 62.0L1594.7 68.1L1600.7 73.4L1606.4 79.5L1612.2 85.1L1618.4 90.6L1624.6 96.6L1629.9 102.2L1635.7 108.0L1641.7 114.3L1647.5 119.8L1652.7 125.7L1659.0 131.6L1664.9 138.0L1670.1 143.3L1676.1 149.4"/><path stroke="#8a8a8a" d="M1590.9 62.0L1597.0 67.9L1602.6 73.3L1608.4 79.3L1614.2 84.9L1620.3 90.5L1626.2 96.2L1632.5 102.0L1638.3 107.9L1643.3 113.5L1649.6 119.8L1655.1 125.3L1660.6 131.2L1666.3 137.1L1672.4 142.7L1677.9 148.9"/><path stroke="#8a8a8a" d="M1593.1 62.0L1599.4 67.3L1605.3 73.5L1610.6 78.9L1616.5 84.5L1622.8 90.1L1628.6 96.0L1634.5 101.5L1640.1 107.4L1645.8 113.1L1651.0 119.4L1657.2 124.7L1662.3 130.5L1668.0 136.9L1673.9 142.5L1679.6 148.4"/><path stroke="#c4c4c4" d="M1595.4 62.0L1601.6 67.5L1607.5 72.9L1612.9 78.5L1618.7 84.4L1624.4 89.9L1630.7 95.3L1636.5 101.6L1642.4 107.1L1648.0 112.8L1653.1 118.9L1659.0 124.5L1664.1 130.3L1670.3 135.9L1675.9 141.8L1681.4 147.9"/><path stroke="#8a8a8a" d="M1597.7 62.0L1603.6 67.9L1609.4 72.8L1614.9 78.3L1621.3 84.3L1627.0 89.5L1633.0 95.4L1638.2 100.6L1643.9 107.2L1650.0 112.7L1655.3 118.1L1660.6 124.4L1666.1 130.2L1672.0 136.1L1677.4 141.9L1683.2 147.5"/><path stroke="#8a8a8a" d="M1600.0 62.0L1605.9 67.7L1611.9 73.1L1617.5 78.2L1623.3 84.1L1628.8 89.4L1634.6 95.1L1640.4 100.9L1646.1 106.8L1651.9 112.6L1657.5 117.9L1662.7 123.6L1668.1 129.8L1673.6 135.0L1679.3 141.2L1685.0 147.0"/></g><g fill="none" stroke-width="1" clip-path="url(#cNose)"><path stroke="#c4c4c4" d="M1508.0 113.0L1528.0 90.0L1568.0 46.0"/><path stroke="#8a8a8a" d="M1510.0 113.0L1530.0 90.0L1570.0 46.0"/><path stroke="#8a8a8a" d="M1512.0 113.0L1532.0 90.0L1572.0 46.0"/><path stroke="#8a8a8a" d="M1514.0 113.0L1534.0 90.0L1574.0 46.0"/><path stroke="#c4c4c4" d="M1516.0 113.0L1536.0 90.0L1576.0 46.0"/><path stroke="#8a8a8a" d="M1518.0 113.0L1538.0 90.0L1578.0 46.0"/><path stroke="#8a8a8a" d="M1520.0 113.0L1540.0 90.0L1580.0 46.0"/><path stroke="#8a8a8a" d="M1522.0 113.0L1542.0 90.0L1582.0 46.0"/><path stroke="#c4c4c4" d="M1524.0 113.0L1544.0 90.0L1584.0 46.0"/><path stroke="#8a8a8a" d="M1526.0 113.0L1546.0 90.0L1586.0 46.0"/><path stroke="#8a8a8a" d="M1528.0 113.0L1548.0 90.0L1588.0 46.0"/><path stroke="#8a8a8a" d="M1530.0 113.0L1550.0 90.0L1590.0 46.0"/><path stroke="#c4c4c4" d="M1532.0 113.0L1552.0 90.0L1592.0 46.0"/><path stroke="#8a8a8a" d="M1534.0 113.0L1554.0 90.0L1594.0 46.0"/><path stroke="#8a8a8a" d="M1536.0 113.0L1556.0 90.0L1596.0 46.0"/><path stroke="#8a8a8a" d="M1538.0 113.0L1558.0 90.0L1598.0 46.0"/><path stroke="#c4c4c4" d="M1540.0 113.0L1560.0 90.0L1600.0 46.0"/><path stroke="#8a8a8a" d="M1542.0 113.0L1562.0 90.0L1602.0 46.0"/><path stroke="#8a8a8a" d="M1544.0 113.0L1564.0 90.0L1604.0 46.0"/><path stroke="#8a8a8a" d="M1546.0 113.0L1566.0 90.0L1606.0 46.0"/><path stroke="#c4c4c4" d="M1548.0 113.0L1568.0 90.0L1608.0 46.0"/><path stroke="#8a8a8a" d="M1550.0 113.0L1570.0 90.0L1610.0 46.0"/><path stroke="#8a8a8a" d="M1552.0 113.0L1572.0 90.0L1612.0 46.0"/><path stroke="#8a8a8a" d="M1554.0 113.0L1574.0 90.0L1614.0 46.0"/><path stroke="#c4c4c4" d="M1556.0 113.0L1576.0 90.0L1616.0 46.0"/><path stroke="#8a8a8a" d="M1558.0 113.0L1578.0 90.0L1618.0 46.0"/></g><g fill="none" stroke-width="1" clip-path="url(#cLR)"><path stroke="#c0c0c0" d="M1118.0 262.0L1127.6 269.1L1138.7 275.8L1147.2 283.1L1155.9 289.8L1168.1 295.4L1177.8 297.8L1189.2 299.1L1202.5 293.5L1212.9 289.5L1220.0 284.9L1224.8 293.3L1232.1 303.6L1237.3 314.4L1244.2 324.4L1253.2 334.6L1261.2 343.1L1268.9 352.2L1276.6 360.1L1285.9 371.3L1293.2 379.6L1300.0 388.0"/><path stroke="#878787" d="M1098.5 289.0L1108.8 292.8L1119.6 296.9L1131.9 302.5L1143.0 307.1L1154.9 311.3L1164.1 311.3L1178.8 311.1L1191.1 307.4L1199.0 301.9L1210.7 297.2L1216.7 304.7L1227.4 314.9L1232.9 322.3L1241.3 330.6L1251.4 340.7L1258.7 351.2L1265.6 361.7L1273.7 370.9L1282.1 379.5L1290.8 388.5L1300.0 398.5"/><path stroke="#878787" d="M1079.0 316.0L1092.4 319.2L1102.4 321.7L1114.1 322.5L1128.0 325.6L1138.2 327.4L1151.2 325.3L1165.6 323.7L1176.9 319.2L1187.9 315.3L1199.4 311.5L1209.7 315.6L1221.4 323.3L1230.1 332.1L1238.5 338.4L1248.9 350.7L1255.1 359.1L1264.8 371.7L1272.1 381.4L1283.2 390.0L1290.8 398.2L1300.0 409.0"/><path stroke="#878787" d="M1059.5 343.0L1071.2 344.3L1085.0 343.5L1098.1 343.8L1112.3 342.2L1124.3 342.2L1137.3 339.1L1152.2 338.3L1165.6 332.6L1179.2 327.6L1189.0 323.8L1202.1 324.9L1213.0 332.1L1225.9 337.8L1235.9 348.0L1246.2 358.3L1253.8 369.0L1260.6 378.3L1269.7 390.9L1281.4 401.0L1289.0 410.0L1300.0 419.5"/><path stroke="#878787" d="M1040.0 370.0L1054.2 368.3L1068.0 366.7L1081.5 363.0L1097.7 361.7L1111.8 357.8L1126.0 355.0L1138.7 350.8L1154.2 347.2L1166.6 342.8L1181.8 338.0L1194.8 336.3L1208.2 342.1L1220.2 347.2L1234.7 355.4L1242.6 365.5L1251.3 377.7L1259.1 390.0L1268.1 400.1L1278.1 409.9L1289.7 419.0L1300.0 430.0"/><path stroke="#c0c0c0" d="M1017.5 395.0L1033.5 391.6L1048.7 389.5L1063.1 383.4L1078.6 382.1L1093.6 376.5L1111.0 373.8L1124.9 370.3L1139.6 364.9L1154.1 358.8L1170.8 354.9L1185.8 350.3L1199.6 351.9L1213.0 354.2L1227.8 363.3L1237.6 375.5L1246.5 385.2L1256.8 398.0L1266.8 410.0L1278.8 421.9L1288.7 434.5L1300.0 445.0"/><path stroke="#878787" d="M995.0 420.0L1013.1 415.5L1026.9 409.9L1045.9 405.6L1062.0 402.8L1077.4 398.7L1093.0 391.8L1110.8 386.6L1128.3 381.9L1142.0 374.8L1159.4 369.4L1175.2 365.1L1191.7 364.5L1207.2 360.7L1220.2 369.1L1230.6 382.4L1244.5 394.0L1254.0 407.8L1266.5 421.3L1277.6 434.9L1288.3 448.0L1300.0 460.0"/><path stroke="#878787" d="M972.5 445.0L991.5 438.4L1009.4 435.0L1024.7 428.9L1044.0 424.9L1061.0 418.3L1080.2 413.4L1098.1 406.8L1114.8 400.1L1131.9 394.2L1148.5 386.1L1164.2 379.9L1183.6 375.3L1199.3 369.9L1213.2 379.2L1228.2 390.4L1239.2 403.5L1252.5 418.8L1264.2 430.8L1277.1 445.2L1289.0 459.8L1300.0 475.0"/><path stroke="#878787" d="M950.0 470.0L968.5 464.5L986.8 456.3L1006.9 451.7L1026.8 445.3L1046.1 438.4L1065.1 430.9L1081.8 425.9L1100.9 419.9L1119.8 410.4L1138.3 401.6L1154.7 392.3L1174.5 385.8L1190.9 377.5L1208.7 386.0L1222.4 398.3L1237.2 412.5L1250.4 426.2L1264.0 443.3L1274.7 459.7L1287.7 474.4L1300.0 490.0"/><path stroke="#878787" d="M936.0 488.0L955.7 479.9L974.4 474.1L994.8 468.9L1011.9 460.7L1031.0 455.4L1052.6 451.6L1071.1 444.6L1089.7 440.2L1110.4 430.4L1128.4 421.6L1145.2 414.0L1165.4 406.5L1183.2 399.6L1199.0 406.2L1215.1 414.8L1231.6 424.9L1247.0 438.9L1260.4 453.1L1274.0 467.9L1286.0 484.8L1300.0 500.0"/><path stroke="#c0c0c0" d="M922.0 506.0L941.8 498.8L961.8 491.8L981.1 483.3L1000.1 477.8L1020.7 472.2L1039.0 469.9L1058.8 466.1L1080.8 459.3L1098.0 453.4L1117.1 443.6L1137.9 436.7L1157.0 428.3L1175.1 422.6L1191.6 424.2L1210.9 431.7L1229.0 437.9L1243.8 451.4L1259.1 464.0L1271.8 477.7L1285.2 493.1L1300.0 510.0"/><path stroke="#878787" d="M908.0 524.0L927.7 516.3L947.3 507.4L965.7 499.8L987.2 494.4L1008.1 488.7L1026.2 488.3L1048.0 484.8L1068.2 480.9L1088.5 473.8L1108.4 465.0L1128.3 460.1L1146.5 451.8L1168.0 444.5L1185.1 443.7L1204.5 444.6L1224.1 453.3L1241.2 463.3L1257.7 473.3L1271.8 489.0L1287.2 505.4L1300.0 520.0"/><path stroke="#878787" d="M894.0 542.0L913.0 535.0L934.2 526.3L954.2 517.0L974.2 510.1L994.8 507.9L1016.2 505.0L1037.3 502.1L1057.4 501.4L1076.7 494.7L1098.8 488.5L1117.8 482.5L1139.3 473.9L1159.6 467.8L1179.0 463.9L1200.0 462.1L1218.7 466.5L1238.9 472.3L1255.9 484.4L1269.6 498.8L1283.8 513.6L1300.0 530.0"/><path stroke="#878787" d="M880.0 560.0L899.6 550.1L919.2 543.8L940.0 533.8L961.2 525.3L983.1 524.7L1004.3 522.3L1025.4 523.6L1045.5 523.4L1066.8 516.3L1087.6 509.9L1109.7 502.0L1131.5 496.6L1151.1 490.6L1171.4 483.2L1193.0 477.5L1212.8 479.7L1233.7 483.8L1253.0 492.4L1268.2 510.0L1284.3 525.8L1300.0 540.0"/><path stroke="#878787" d="M880.0 571.4L900.7 563.3L921.3 559.2L938.5 552.3L959.5 544.2L982.7 543.2L1002.9 545.0L1025.0 543.3L1047.3 544.0L1067.0 537.4L1087.8 533.1L1107.2 526.7L1128.9 521.6L1149.3 518.0L1170.1 511.1L1191.1 505.4L1212.4 506.6L1233.8 512.6L1252.6 517.1L1266.8 531.7L1284.8 543.5L1300.0 555.7"/><path stroke="#c0c0c0" d="M880.0 582.9L899.5 577.3L920.3 573.4L940.0 568.8L960.3 562.6L980.1 565.1L1003.5 564.9L1022.2 562.6L1044.2 563.8L1066.0 559.4L1086.3 555.4L1105.6 553.2L1127.6 549.1L1147.7 544.7L1167.8 539.3L1189.9 535.0L1208.5 532.8L1231.2 537.6L1250.7 541.2L1266.4 551.1L1284.2 561.2L1300.0 571.4"/><path stroke="#878787" d="M880.0 594.3L900.3 592.9L919.2 588.7L940.3 586.9L959.2 582.4L979.3 584.5L1000.4 582.7L1022.9 584.4L1044.4 584.4L1065.3 581.5L1084.1 580.5L1104.3 576.8L1126.7 575.2L1145.9 570.9L1166.6 568.4L1187.1 561.1L1208.5 561.6L1229.6 564.5L1249.3 566.0L1266.3 572.6L1282.1 579.9L1300.0 587.1"/><path stroke="#878787" d="M880.0 605.7L901.1 606.0L918.9 603.5L939.1 602.5L959.0 601.7L979.3 603.2L1001.9 604.1L1022.9 605.2L1041.8 606.7L1064.5 604.2L1082.3 603.5L1104.4 602.2L1126.1 601.1L1146.0 597.9L1165.6 596.6L1184.5 589.3L1206.8 590.0L1225.1 589.5L1245.0 591.1L1264.5 593.7L1281.2 599.5L1300.0 602.9"/><path stroke="#878787" d="M880.0 617.1L899.9 619.0L919.3 618.7L940.8 620.7L959.2 621.4L980.5 623.4L1001.7 623.9L1022.1 626.0L1042.9 627.8L1063.2 628.1L1083.9 627.3L1103.0 627.3L1124.2 626.3L1143.4 625.4L1164.6 625.2L1183.7 617.9L1203.3 616.1L1223.8 616.5L1242.9 613.9L1261.6 616.3L1282.2 616.2L1300.0 618.6"/><path stroke="#878787" d="M880.0 628.6L898.5 631.4L919.8 635.8L937.9 636.3L958.1 639.6L978.7 643.1L1000.2 643.4L1019.4 645.4L1039.8 648.7L1060.5 649.2L1082.3 650.2L1100.9 652.5L1123.2 652.0L1142.3 655.0L1162.3 650.9L1181.0 648.5L1203.3 643.4L1222.5 641.1L1241.6 640.1L1262.0 636.4L1279.3 635.6L1300.0 634.3"/><path stroke="#c0c0c0" d="M880.0 640.0L899.3 645.8L920.1 650.2L938.2 653.8L958.4 659.0L980.2 662.2L999.7 665.8L1018.8 666.7L1038.7 669.7L1058.5 672.2L1081.2 674.6L1099.1 675.4L1121.2 677.3L1140.7 680.8L1162.1 680.0L1181.7 674.9L1201.4 671.0L1221.7 665.7L1241.3 661.9L1260.3 658.6L1279.1 655.2L1300.0 650.0"/><path stroke="#878787" d="M878.0 655.6L897.3 658.8L916.5 662.5L937.6 667.5L957.1 671.2L976.6 672.0L998.0 675.4L1019.4 675.9L1037.2 676.4L1059.5 677.5L1079.3 679.7L1097.9 682.8L1120.5 682.0L1140.2 683.8L1159.6 683.1L1179.4 678.7L1199.7 675.9L1219.3 671.4L1240.7 668.8L1261.3 666.6L1280.7 662.9L1300.0 660.4"/><path stroke="#878787" d="M876.0 671.2L897.0 672.6L915.0 675.1L936.7 679.6L955.2 681.2L977.5 682.9L995.6 682.7L1016.2 683.1L1037.2 683.5L1059.1 685.1L1078.1 686.4L1099.2 687.6L1118.4 686.7L1138.7 686.4L1158.9 686.9L1180.8 683.9L1199.9 679.9L1218.1 677.2L1239.2 676.4L1258.6 673.9L1279.9 673.4L1300.0 670.8"/><path stroke="#878787" d="M874.0 686.8L895.2 688.5L913.4 690.4L935.8 691.2L954.4 692.4L974.2 693.4L997.1 693.2L1016.7 694.0L1035.5 694.0L1057.1 691.5L1075.8 691.4L1097.7 692.5L1117.3 692.9L1137.7 691.3L1157.3 691.1L1177.5 688.0L1199.0 684.0L1219.3 682.4L1240.5 684.1L1260.5 682.4L1278.6 682.6L1300.0 681.2"/><path stroke="#878787" d="M872.0 702.4L891.7 703.8L912.0 703.1L934.1 702.1L953.6 702.0L972.5 702.1L995.9 704.0L1015.3 701.3L1035.8 701.4L1055.3 699.7L1077.0 696.9L1095.6 697.1L1115.8 695.7L1137.5 693.9L1157.7 692.3L1178.2 690.0L1198.7 686.6L1219.2 687.4L1240.4 689.5L1259.2 689.8L1280.0 691.4L1300.0 691.6"/><path stroke="#c0c0c0" d="M870.0 718.0L891.3 717.8L911.0 717.6L932.6 716.2L951.9 714.0L972.9 714.5L993.3 712.4L1013.5 711.8L1033.6 707.3L1055.3 707.7L1075.7 704.8L1096.2 701.9L1116.2 699.1L1135.3 698.2L1156.8 696.0L1175.9 694.9L1197.8 691.4L1217.6 693.5L1237.9 694.6L1260.3 699.3L1280.0 701.1L1300.0 702.0"/></g><g fill="none" stroke-width="1" clip-path="url(#cTop)"><path stroke="#c0c0c0" d="M-10.0 60.0L-4.7 66.0L3.8 74.0"/><path stroke="#878787" d="M-4.4 60.0L1.5 66.0L7.5 74.0"/><path stroke="#878787" d="M1.6 60.0L8.2 66.0L14.6 74.0"/><path stroke="#c0c0c0" d="M6.8 60.0L12.3 66.0L17.8 74.0"/><path stroke="#878787" d="M11.8 60.0L17.9 66.0L23.0 74.0"/><path stroke="#878787" d="M17.7 60.0L23.2 66.0L29.7 74.0"/><path stroke="#c0c0c0" d="M21.8 60.0L28.8 66.0L35.8 74.0"/><path stroke="#878787" d="M28.0 60.0L34.3 66.0L39.2 74.0"/><path stroke="#878787" d="M32.9 60.0L38.9 66.0L44.3 74.0"/><path stroke="#c0c0c0" d="M39.2 60.0L45.0 66.0L50.9 74.0"/><path stroke="#878787" d="M45.3 60.0L50.5 66.0L60.0 74.0"/><path stroke="#878787" d="M50.4 60.0L56.5 66.0L62.8 74.0"/><path stroke="#c0c0c0" d="M55.6 60.0L61.0 66.0L66.8 74.0"/><path stroke="#878787" d="M61.8 60.0L67.3 66.0L75.9 74.0"/><path stroke="#878787" d="M66.3 60.0L73.3 66.0L80.9 74.0"/><path stroke="#c0c0c0" d="M72.2 60.0L78.7 66.0L85.5 74.0"/><path stroke="#878787" d="M78.0 60.0L83.3 66.0L90.9 74.0"/><path stroke="#878787" d="M84.1 60.0L89.5 66.0L98.8 74.0"/><path stroke="#c0c0c0" d="M90.3 60.0L96.1 66.0L102.8 74.0"/><path stroke="#878787" d="M95.4 60.0L101.2 66.0L110.4 74.0"/><path stroke="#878787" d="M100.4 60.0L105.5 66.0L111.8 74.0"/><path stroke="#c0c0c0" d="M106.2 60.0L113.2 66.0L119.2 74.0"/><path stroke="#878787" d="M111.4 60.0L117.5 66.0L125.4 74.0"/><path stroke="#878787" d="M116.0 60.0L122.2 66.0L129.2 74.0"/><path stroke="#c0c0c0" d="M121.5 60.0L126.9 66.0L133.2 74.0"/><path stroke="#878787" d="M126.4 60.0L133.3 66.0L138.8 74.0"/><path stroke="#878787" d="M131.9 60.0L137.5 66.0L143.3 74.0"/><path stroke="#c0c0c0" d="M136.1 60.0L142.7 66.0L150.2 74.0"/><path stroke="#878787" d="M141.0 60.0L147.4 66.0L154.7 74.0"/><path stroke="#878787" d="M147.3 60.0L154.2 66.0L159.9 74.0"/><path stroke="#c0c0c0" d="M153.7 60.0L160.6 66.0L167.1 74.0"/><path stroke="#878787" d="M159.9 60.0L165.9 66.0L172.4 74.0"/><path stroke="#878787" d="M164.6 60.0L171.3 66.0L176.2 74.0"/><path stroke="#c0c0c0" d="M168.7 60.0L175.3 66.0L182.8 74.0"/><path stroke="#878787" d="M173.9 60.0L180.6 66.0L185.1 74.0"/><path stroke="#878787" d="M178.6 60.0L184.2 66.0L191.3 74.0"/><path stroke="#c0c0c0" d="M183.0 60.0L188.1 66.0L195.4 74.0"/><path stroke="#878787" d="M189.3 60.0L196.2 66.0L203.2 74.0"/><path stroke="#878787" d="M194.5 60.0L200.0 66.0L209.3 74.0"/><path stroke="#c0c0c0" d="M199.8 60.0L206.2 66.0L210.9 74.0"/><path stroke="#878787" d="M204.3 60.0L211.0 66.0L218.5 74.0"/><path stroke="#878787" d="M210.5 60.0L216.7 66.0L223.2 74.0"/><path stroke="#c0c0c0" d="M216.0 60.0L222.7 66.0L228.2 74.0"/><path stroke="#878787" d="M221.3 60.0L226.8 66.0L235.4 74.0"/><path stroke="#878787" d="M225.3 60.0L231.7 66.0L240.1 74.0"/><path stroke="#c0c0c0" d="M229.4 60.0L235.6 66.0L242.9 74.0"/><path stroke="#878787" d="M235.5 60.0L241.7 66.0L247.5 74.0"/><path stroke="#878787" d="M240.5 60.0L247.4 66.0L255.1 74.0"/><path stroke="#c0c0c0" d="M244.8 60.0L250.0 66.0L256.2 74.0"/><path stroke="#878787" d="M248.9 60.0L254.8 66.0L260.5 74.0"/><path stroke="#878787" d="M255.1 60.0L261.4 66.0L266.6 74.0"/><path stroke="#c0c0c0" d="M260.4 60.0L266.1 66.0L273.4 74.0"/><path stroke="#878787" d="M265.0 60.0L270.3 66.0L276.7 74.0"/><path stroke="#878787" d="M269.9 60.0L276.3 66.0L283.1 74.0"/><path stroke="#c0c0c0" d="M274.0 60.0L280.5 66.0L288.5 74.0"/><path stroke="#878787" d="M280.0 60.0L286.6 66.0L291.0 74.0"/><path stroke="#878787" d="M285.1 60.0L290.3 66.0L299.2 74.0"/><path stroke="#c0c0c0" d="M289.6 60.0L296.0 66.0L301.6 74.0"/><path stroke="#878787" d="M295.3 60.0L300.9 66.0L306.5 74.0"/><path stroke="#878787" d="M300.3 60.0L305.9 66.0L314.9 74.0"/><path stroke="#c0c0c0" d="M305.0 60.0L311.0 66.0L318.2 74.0"/><path stroke="#878787" d="M311.4 60.0L316.6 66.0L324.8 74.0"/><path stroke="#878787" d="M316.7 60.0L323.1 66.0L331.5 74.0"/><path stroke="#c0c0c0" d="M321.4 60.0L327.8 66.0L334.5 74.0"/><path stroke="#878787" d="M326.8 60.0L332.0 66.0L341.1 74.0"/><path stroke="#878787" d="M333.3 60.0L339.0 66.0L345.6 74.0"/><path stroke="#c0c0c0" d="M339.8 60.0L345.0 66.0L351.1 74.0"/><path stroke="#878787" d="M343.9 60.0L350.6 66.0L358.0 74.0"/><path stroke="#878787" d="M349.1 60.0L355.3 66.0L360.1 74.0"/><path stroke="#c0c0c0" d="M354.7 60.0L360.6 66.0L367.7 74.0"/><path stroke="#878787" d="M359.7 60.0L365.5 66.0L371.6 74.0"/><path stroke="#878787" d="M363.8 60.0L369.6 66.0L375.8 74.0"/><path stroke="#c0c0c0" d="M369.5 60.0L376.2 66.0L383.4 74.0"/><path stroke="#878787" d="M374.7 60.0L380.1 66.0L387.2 74.0"/><path stroke="#878787" d="M379.9 60.0L386.2 66.0L394.7 74.0"/><path stroke="#c0c0c0" d="M384.1 60.0L390.1 66.0L397.1 74.0"/><path stroke="#878787" d="M389.9 60.0L396.7 66.0L404.0 74.0"/><path stroke="#878787" d="M395.5 60.0L402.0 66.0L409.1 74.0"/><path stroke="#c0c0c0" d="M401.6 60.0L408.0 66.0L415.3 74.0"/><path stroke="#878787" d="M406.2 60.0L413.1 66.0L418.8 74.0"/><path stroke="#878787" d="M411.8 60.0L418.4 66.0L426.6 74.0"/><path stroke="#c0c0c0" d="M418.2 60.0L423.2 66.0L430.5 74.0"/><path stroke="#878787" d="M423.0 60.0L428.8 66.0L434.6 74.0"/><path stroke="#878787" d="M428.4 60.0L433.6 66.0L440.6 74.0"/></g><g fill="none" stroke-width="1" clip-path="url(#cLeft)"><path stroke="#c0c0c0" d="M6.0 60.0L21.0 70.5"/><path stroke="#878787" d="M6.0 62.4L21.0 69.1"/><path stroke="#878787" d="M6.0 65.6L21.0 75.8"/><path stroke="#c0c0c0" d="M6.0 67.7L21.0 75.7"/><path stroke="#878787" d="M6.0 70.4L21.0 80.5"/><path stroke="#878787" d="M6.0 72.5L21.0 84.2"/><path stroke="#c0c0c0" d="M6.0 74.8L21.0 82.3"/><path stroke="#878787" d="M6.0 77.8L21.0 84.7"/><path stroke="#878787" d="M6.0 80.5L21.0 87.7"/><path stroke="#c0c0c0" d="M6.0 83.2L21.0 90.8"/><path stroke="#878787" d="M6.0 85.5L21.0 97.1"/><path stroke="#878787" d="M6.0 87.9L21.0 96.6"/><path stroke="#c0c0c0" d="M6.0 90.6L21.0 98.3"/><path stroke="#878787" d="M6.0 92.7L21.0 101.0"/><path stroke="#878787" d="M6.0 94.8L21.0 102.0"/><path stroke="#c0c0c0" d="M6.0 98.0L21.0 104.2"/><path stroke="#878787" d="M6.0 100.9L21.0 112.5"/><path stroke="#878787" d="M6.0 103.7L21.0 109.8"/><path stroke="#c0c0c0" d="M6.0 106.2L21.0 112.4"/><path stroke="#878787" d="M6.0 108.9L21.0 119.1"/><path stroke="#878787" d="M6.0 111.0L21.0 117.0"/><path stroke="#c0c0c0" d="M6.0 113.6L21.0 120.1"/><path stroke="#878787" d="M6.0 115.8L21.0 124.5"/><path stroke="#878787" d="M6.0 118.8L21.0 127.1"/><path stroke="#c0c0c0" d="M6.0 120.8L21.0 131.6"/><path stroke="#878787" d="M6.0 123.8L21.0 133.0"/><path stroke="#878787" d="M6.0 125.6L21.0 132.8"/><path stroke="#c0c0c0" d="M6.0 128.0L21.0 137.3"/><path stroke="#878787" d="M6.0 130.1L21.0 140.9"/><path stroke="#878787" d="M6.0 133.1L21.0 144.7"/><path stroke="#c0c0c0" d="M6.0 136.1L21.0 142.3"/><path stroke="#878787" d="M6.0 138.8L21.0 145.2"/><path stroke="#878787" d="M6.0 141.8L21.0 152.3"/><path stroke="#c0c0c0" d="M6.0 144.7L21.0 151.8"/><path stroke="#878787" d="M6.0 146.6L21.0 157.5"/><path stroke="#878787" d="M6.0 149.2L21.0 158.9"/><path stroke="#c0c0c0" d="M6.0 151.7L21.0 162.5"/><path stroke="#878787" d="M6.0 153.9L21.0 161.6"/><path stroke="#878787" d="M6.0 156.2L21.0 164.0"/><path stroke="#c0c0c0" d="M6.0 158.9L21.0 170.3"/><path stroke="#878787" d="M6.0 160.8L21.0 167.2"/><path stroke="#878787" d="M6.0 163.3L21.0 173.4"/><path stroke="#c0c0c0" d="M6.0 165.4L21.0 173.0"/><path stroke="#878787" d="M6.0 167.3L21.0 173.5"/><path stroke="#878787" d="M6.0 169.8L21.0 179.9"/><path stroke="#c0c0c0" d="M6.0 172.5L21.0 179.4"/><path stroke="#878787" d="M6.0 174.4L21.0 186.0"/><path stroke="#878787" d="M6.0 177.0L21.0 185.4"/><path stroke="#c0c0c0" d="M6.0 179.8L21.0 190.1"/><path stroke="#878787" d="M6.0 182.3L21.0 188.8"/><path stroke="#878787" d="M6.0 185.3L21.0 192.5"/><path stroke="#c0c0c0" d="M6.0 187.1L21.0 195.2"/><path stroke="#878787" d="M6.0 189.7L21.0 199.4"/><path stroke="#878787" d="M6.0 191.7L21.0 202.0"/><path stroke="#c0c0c0" d="M6.0 194.2L21.0 201.2"/><path stroke="#878787" d="M6.0 197.2L21.0 208.0"/><path stroke="#878787" d="M6.0 200.2L21.0 210.3"/><path stroke="#c0c0c0" d="M6.0 202.4L21.0 213.0"/><path stroke="#878787" d="M6.0 205.4L21.0 214.6"/><path stroke="#878787" d="M6.0 208.5L21.0 220.3"/><path stroke="#c0c0c0" d="M6.0 210.8L21.0 222.5"/><path stroke="#878787" d="M6.0 213.9L21.0 224.7"/><path stroke="#878787" d="M6.0 215.8L21.0 223.9"/><path stroke="#c0c0c0" d="M6.0 218.4L21.0 228.1"/><path stroke="#878787" d="M6.0 221.3L21.0 231.2"/><path stroke="#878787" d="M6.0 223.3L21.0 234.9"/><path stroke="#c0c0c0" d="M6.0 225.9L21.0 237.1"/><path stroke="#878787" d="M6.0 227.9L21.0 239.9"/><path stroke="#878787" d="M6.0 230.5L21.0 241.2"/><path stroke="#c0c0c0" d="M6.0 233.4L21.0 244.7"/><path stroke="#878787" d="M6.0 235.7L21.0 242.2"/><path stroke="#878787" d="M6.0 238.0L21.0 245.1"/><path stroke="#c0c0c0" d="M6.0 240.6L21.0 251.5"/><path stroke="#878787" d="M6.0 242.9L21.0 249.7"/><path stroke="#878787" d="M6.0 244.7L21.0 253.3"/><path stroke="#c0c0c0" d="M6.0 247.3L21.0 253.5"/><path stroke="#878787" d="M6.0 250.1L21.0 257.3"/><path stroke="#878787" d="M6.0 252.0L21.0 263.6"/><path stroke="#c0c0c0" d="M6.0 254.6L21.0 265.9"/><path stroke="#878787" d="M6.0 257.1L21.0 263.8"/><path stroke="#878787" d="M6.0 259.2L21.0 267.8"/><path stroke="#c0c0c0" d="M6.0 261.9L21.0 272.5"/><path stroke="#878787" d="M6.0 264.8L21.0 274.7"/><path stroke="#878787" d="M6.0 266.9L21.0 275.5"/><path stroke="#c0c0c0" d="M6.0 269.2L21.0 278.2"/><path stroke="#878787" d="M6.0 271.4L21.0 280.6"/><path stroke="#878787" d="M6.0 273.9L21.0 280.1"/><path stroke="#c0c0c0" d="M6.0 276.8L21.0 286.3"/><path stroke="#878787" d="M6.0 279.7L21.0 290.2"/><path stroke="#878787" d="M6.0 282.6L21.0 294.5"/><path stroke="#c0c0c0" d="M6.0 284.9L21.0 293.3"/><path stroke="#878787" d="M6.0 286.7L21.0 296.7"/><path stroke="#878787" d="M6.0 289.3L21.0 298.8"/><path stroke="#c0c0c0" d="M6.0 292.5L21.0 299.7"/><path stroke="#878787" d="M6.0 294.6L21.0 305.0"/><path stroke="#878787" d="M6.0 297.6L21.0 306.5"/><path stroke="#c0c0c0" d="M6.0 299.4L21.0 307.7"/><path stroke="#878787" d="M6.0 302.4L21.0 311.4"/><path stroke="#878787" d="M6.0 304.8L21.0 313.2"/><path stroke="#c0c0c0" d="M6.0 307.5L21.0 317.1"/><path stroke="#878787" d="M6.0 310.3L21.0 321.5"/><path stroke="#878787" d="M6.0 313.1L21.0 321.4"/><path stroke="#c0c0c0" d="M6.0 315.3L21.0 326.0"/><path stroke="#878787" d="M6.0 318.2L21.0 329.8"/><path stroke="#878787" d="M6.0 320.3L21.0 331.4"/><path stroke="#c0c0c0" d="M6.0 323.3L21.0 329.8"/><path stroke="#878787" d="M6.0 325.6L21.0 335.4"/><path stroke="#878787" d="M6.0 327.6L21.0 338.6"/><path stroke="#c0c0c0" d="M6.0 329.7L21.0 339.8"/><path stroke="#878787" d="M6.0 331.9L21.0 339.3"/><path stroke="#878787" d="M6.0 334.0L21.0 343.0"/><path stroke="#c0c0c0" d="M6.0 336.8L21.0 344.1"/><path stroke="#878787" d="M6.0 339.6L21.0 347.6"/><path stroke="#878787" d="M6.0 342.3L21.0 350.5"/><path stroke="#c0c0c0" d="M6.0 344.4L21.0 351.2"/><path stroke="#878787" d="M6.0 346.3L21.0 356.4"/><path stroke="#878787" d="M6.0 348.6L21.0 355.4"/><path stroke="#c0c0c0" d="M6.0 351.7L21.0 361.6"/><path stroke="#878787" d="M6.0 353.5L21.0 363.8"/><path stroke="#878787" d="M6.0 356.1L21.0 364.8"/><path stroke="#c0c0c0" d="M6.0 358.6L21.0 370.4"/><path stroke="#878787" d="M6.0 361.0L21.0 370.8"/><path stroke="#878787" d="M6.0 363.6L21.0 371.8"/><path stroke="#c0c0c0" d="M6.0 365.9L21.0 376.5"/><path stroke="#878787" d="M6.0 368.6L21.0 377.4"/><path stroke="#878787" d="M6.0 371.1L21.0 378.5"/><path stroke="#c0c0c0" d="M6.0 374.0L21.0 380.2"/><path stroke="#878787" d="M6.0 376.7L21.0 385.5"/><path stroke="#878787" d="M6.0 378.9L21.0 388.4"/><path stroke="#c0c0c0" d="M6.0 381.5L21.0 388.0"/><path stroke="#878787" d="M6.0 384.0L21.0 390.9"/><path stroke="#878787" d="M6.0 386.9L21.0 394.8"/><path stroke="#c0c0c0" d="M6.0 389.1L21.0 396.4"/><path stroke="#878787" d="M6.0 391.0L21.0 398.1"/><path stroke="#878787" d="M6.0 393.0L21.0 402.8"/><path stroke="#c0c0c0" d="M6.0 396.0L21.0 403.3"/><path stroke="#878787" d="M6.0 398.0L21.0 407.2"/><path stroke="#878787" d="M6.0 399.9L21.0 408.4"/><path stroke="#c0c0c0" d="M6.0 402.8L21.0 410.0"/><path stroke="#878787" d="M6.0 405.6L21.0 414.8"/><path stroke="#878787" d="M6.0 407.5L21.0 414.9"/><path stroke="#c0c0c0" d="M6.0 410.1L21.0 416.7"/><path stroke="#878787" d="M6.0 412.2L21.0 421.7"/><path stroke="#878787" d="M6.0 415.2L21.0 424.3"/><path stroke="#c0c0c0" d="M6.0 417.9L21.0 423.9"/><path stroke="#878787" d="M6.0 420.1L21.0 428.0"/><path stroke="#878787" d="M6.0 423.2L21.0 431.3"/><path stroke="#c0c0c0" d="M6.0 426.1L21.0 432.3"/><path stroke="#878787" d="M6.0 428.6L21.0 439.9"/><path stroke="#878787" d="M6.0 431.5L21.0 440.9"/><path stroke="#c0c0c0" d="M6.0 433.5L21.0 445.1"/><path stroke="#878787" d="M6.0 435.4L21.0 447.2"/><path stroke="#878787" d="M6.0 438.3L21.0 448.6"/><path stroke="#c0c0c0" d="M6.0 440.9L21.0 447.8"/><path stroke="#878787" d="M6.0 443.1L21.0 453.1"/><path stroke="#878787" d="M6.0 445.9L21.0 454.2"/><path stroke="#c0c0c0" d="M6.0 448.8L21.0 455.1"/><path stroke="#878787" d="M6.0 451.0L21.0 457.5"/><path stroke="#878787" d="M6.0 453.2L21.0 464.0"/><path stroke="#c0c0c0" d="M6.0 456.1L21.0 463.0"/><path stroke="#878787" d="M6.0 458.3L21.0 465.0"/><path stroke="#878787" d="M6.0 461.0L21.0 469.7"/><path stroke="#c0c0c0" d="M6.0 463.2L21.0 471.4"/><path stroke="#878787" d="M6.0 466.2L21.0 474.7"/><path stroke="#878787" d="M6.0 468.9L21.0 478.7"/><path stroke="#c0c0c0" d="M6.0 471.4L21.0 480.8"/><path stroke="#878787" d="M6.0 473.7L21.0 480.9"/><path stroke="#878787" d="M6.0 476.2L21.0 484.0"/><path stroke="#c0c0c0" d="M6.0 478.5L21.0 485.6"/><path stroke="#878787" d="M6.0 481.6L21.0 490.1"/><path stroke="#878787" d="M6.0 483.6L21.0 489.8"/><path stroke="#c0c0c0" d="M6.0 485.7L21.0 496.9"/><path stroke="#878787" d="M6.0 488.0L21.0 498.0"/><path stroke="#878787" d="M6.0 490.1L21.0 500.0"/><path stroke="#c0c0c0" d="M6.0 492.6L21.0 503.0"/><path stroke="#878787" d="M6.0 495.1L21.0 503.4"/><path stroke="#878787" d="M6.0 497.3L21.0 506.9"/><path stroke="#c0c0c0" d="M6.0 500.3L21.0 510.4"/><path stroke="#878787" d="M6.0 502.7L21.0 510.7"/><path stroke="#878787" d="M6.0 505.8L21.0 516.9"/><path stroke="#c0c0c0" d="M6.0 507.8L21.0 517.9"/><path stroke="#878787" d="M6.0 510.7L21.0 520.7"/><path stroke="#878787" d="M6.0 513.8L21.0 525.1"/><path stroke="#c0c0c0" d="M6.0 516.0L21.0 527.9"/><path stroke="#878787" d="M6.0 518.2L21.0 526.5"/><path stroke="#878787" d="M6.0 521.4L21.0 528.4"/><path stroke="#c0c0c0" d="M6.0 523.7L21.0 533.5"/><path stroke="#878787" d="M6.0 525.9L21.0 533.5"/><path stroke="#878787" d="M6.0 528.8L21.0 538.5"/><path stroke="#c0c0c0" d="M6.0 531.7L21.0 542.4"/><path stroke="#878787" d="M6.0 534.7L21.0 546.1"/><path stroke="#878787" d="M6.0 537.6L21.0 549.5"/><path stroke="#c0c0c0" d="M6.0 540.1L21.0 550.4"/><path stroke="#878787" d="M6.0 542.7L21.0 554.5"/><path stroke="#878787" d="M6.0 545.4L21.0 554.0"/><path stroke="#c0c0c0" d="M6.0 548.1L21.0 555.9"/><path stroke="#878787" d="M6.0 550.1L21.0 558.4"/><path stroke="#878787" d="M6.0 552.1L21.0 558.1"/><path stroke="#c0c0c0" d="M6.0 554.0L21.0 562.7"/><path stroke="#878787" d="M6.0 556.9L21.0 563.2"/><path stroke="#878787" d="M6.0 559.6L21.0 566.2"/><path stroke="#c0c0c0" d="M6.0 562.1L21.0 569.9"/><path stroke="#878787" d="M6.0 564.5L21.0 574.8"/><path stroke="#878787" d="M6.0 566.9L21.0 575.2"/><path stroke="#c0c0c0" d="M6.0 569.7L21.0 576.4"/><path stroke="#878787" d="M6.0 572.0L21.0 582.2"/><path stroke="#878787" d="M6.0 575.0L21.0 586.8"/><path stroke="#c0c0c0" d="M6.0 577.1L21.0 586.9"/><path stroke="#878787" d="M6.0 579.4L21.0 589.6"/><path stroke="#878787" d="M6.0 582.3L21.0 589.2"/><path stroke="#c0c0c0" d="M6.0 584.6L21.0 596.2"/><path stroke="#878787" d="M6.0 586.9L21.0 596.7"/><path stroke="#878787" d="M6.0 589.9L21.0 597.5"/><path stroke="#c0c0c0" d="M6.0 592.8L21.0 598.8"/><path stroke="#878787" d="M6.0 595.0L21.0 602.0"/><path stroke="#878787" d="M6.0 597.3L21.0 604.6"/><path stroke="#c0c0c0" d="M6.0 599.2L21.0 610.0"/><path stroke="#878787" d="M6.0 601.2L21.0 610.6"/><path stroke="#878787" d="M6.0 603.8L21.0 614.9"/><path stroke="#c0c0c0" d="M6.0 606.8L21.0 616.5"/><path stroke="#878787" d="M6.0 608.8L21.0 619.4"/><path stroke="#878787" d="M6.0 610.7L21.0 622.3"/><path stroke="#c0c0c0" d="M6.0 613.0L21.0 620.5"/><path stroke="#878787" d="M6.0 615.1L21.0 623.5"/><path stroke="#878787" d="M6.0 618.0L21.0 629.1"/><path stroke="#c0c0c0" d="M6.0 620.8L21.0 631.2"/><path stroke="#878787" d="M6.0 623.0L21.0 630.9"/><path stroke="#878787" d="M6.0 625.2L21.0 633.8"/><path stroke="#c0c0c0" d="M6.0 628.2L21.0 640.2"/><path stroke="#878787" d="M6.0 630.1L21.0 641.9"/><path stroke="#878787" d="M6.0 633.2L21.0 642.0"/><path stroke="#c0c0c0" d="M6.0 636.0L21.0 646.7"/><path stroke="#878787" d="M6.0 638.1L21.0 647.8"/><path stroke="#878787" d="M6.0 641.2L21.0 652.5"/><path stroke="#c0c0c0" d="M6.0 644.3L21.0 650.8"/><path stroke="#878787" d="M6.0 647.1L21.0 656.0"/><path stroke="#878787" d="M6.0 650.2L21.0 657.2"/><path stroke="#c0c0c0" d="M6.0 652.7L21.0 659.5"/><path stroke="#878787" d="M6.0 655.7L21.0 666.0"/><path stroke="#878787" d="M6.0 657.5L21.0 665.4"/><path stroke="#c0c0c0" d="M6.0 659.5L21.0 669.3"/><path stroke="#878787" d="M6.0 662.2L21.0 668.6"/><path stroke="#878787" d="M6.0 665.3L21.0 677.1"/><path stroke="#c0c0c0" d="M6.0 667.7L21.0 677.2"/><path stroke="#878787" d="M6.0 670.1L21.0 679.7"/><path stroke="#878787" d="M6.0 672.4L21.0 681.1"/><path stroke="#c0c0c0" d="M6.0 675.3L21.0 682.4"/><path stroke="#878787" d="M6.0 677.5L21.0 688.1"/><path stroke="#878787" d="M6.0 679.6L21.0 686.0"/><path stroke="#c0c0c0" d="M6.0 682.7L21.0 689.6"/><path stroke="#878787" d="M6.0 685.0L21.0 692.9"/><path stroke="#878787" d="M6.0 687.2L21.0 695.3"/><path stroke="#c0c0c0" d="M6.0 689.8L21.0 696.5"/><path stroke="#878787" d="M6.0 692.3L21.0 698.6"/><path stroke="#878787" d="M6.0 694.2L21.0 701.4"/><path stroke="#c0c0c0" d="M6.0 696.4L21.0 704.4"/><path stroke="#878787" d="M6.0 698.6L21.0 709.6"/><path stroke="#878787" d="M6.0 701.3L21.0 710.1"/><path stroke="#c0c0c0" d="M6.0 704.2L21.0 714.3"/><path stroke="#878787" d="M6.0 706.4L21.0 716.1"/><path stroke="#878787" d="M6.0 709.3L21.0 718.5"/></g><g fill="none" stroke-width="1"><path stroke="#767676" d="M424 110.8L474.6 102.5Q481 107 478.4 113.3L425 123.5M486 102.5L536.8 98.1Q541 101 536.8 104.4L486 110.8Q482 106 486 102.5Z"/><path stroke="#c0c0c0" d="M544.4 91.7L554.6 91.7L591.4 70.2L596.5 71.4L597.8 76.5L553.3 100.6L545.7 98ZM544.4 101.9L620 71.4M597.8 65L610.5 63.8L606.7 72.7L600.3 72.7Z"/><path stroke="#7a7a7a" d="M412.3 515.3L414.7 511.4L417.9 506.3L421.7 500.2L425.9 493.4L430.2 486.3L434.5 479.1L438.5 472.2L442.0 465.8L445.1 459.8L447.9 454.0L450.5 448.1L453.1 442.1L455.8 435.9L458.6 429.5L461.6 422.9L464.9 416.0L468.5 408.9L472.3 401.6L476.2 394.2L480.3 386.6L484.4 378.9L488.6 371.2L492.9 363.4L497.1 355.7L501.3 347.9L505.6 339.9L509.9 331.8L514.3 323.6L518.8 315.3L523.5 307.1L528.4 299.0L533.5 291.0L538.9 283.2L544.5 275.4L550.2 267.7L556.1 260.1L562.0 252.7L567.9 245.6L573.6 238.7L579.2 232.1L584.6 226.0L589.8 220.3L595.0 215.0L600.0 209.9L605.0 204.9L610.0 199.9L615.1 194.6L620.4 188.9L625.9 182.8L631.6 176.3L637.4 169.6L643.4 162.7L649.4 155.7L655.4 148.7L661.3 141.8L667.2 135.1L672.9 128.4L678.7 121.5L684.5 114.5L690.3 107.5L696.2 100.7L702.1 94.1L708.0 87.9L714.1 82.2L720.3 77.2L726.6 72.8L732.8 68.9L738.9 65.4L744.7 62.3L750.1 59.5L755.0 56.9L759.3 54.3L763.4 51.7L767.5 49.1L771.3 46.6L774.8 44.3L778.0 42.2L780.8 40.3L783.1 38.7L785.0 37.5"/><path stroke="#9a9a9a" d="M415.7 517.4L418.1 513.5L421.3 508.4L425.1 502.3L429.3 495.5L433.7 488.4L438.0 481.1L442.0 474.1L445.6 467.7L448.7 461.6L451.5 455.6L454.2 449.7L456.8 443.6L459.4 437.5L462.2 431.2L465.2 424.6L468.5 417.8L472.1 410.7L475.8 403.5L479.7 396.1L483.8 388.5L487.9 380.9L492.1 373.1L496.4 365.4L500.6 357.6L504.8 349.8L509.1 341.8L513.4 333.7L517.8 325.5L522.3 317.3L527.0 309.1L531.8 301.1L536.8 293.2L542.1 285.5L547.7 277.8L553.4 270.1L559.3 262.6L565.1 255.2L571.0 248.1L576.7 241.3L582.2 234.7L587.6 228.6L592.8 223.0L597.8 217.8L602.8 212.7L607.8 207.7L612.8 202.7L618.0 197.4L623.3 191.6L628.9 185.4L634.6 178.9L640.5 172.2L646.4 165.3L652.4 158.3L658.4 151.4L664.4 144.5L670.2 137.7L676.0 131.0L681.8 124.1L687.6 117.1L693.4 110.1L699.2 103.3L705.0 96.8L710.8 90.7L716.7 85.2L722.7 80.4L728.8 76.1L734.9 72.3L740.8 68.9L746.6 65.9L752.0 63.0L756.9 60.4L761.4 57.7L765.6 55.1L769.7 52.5L773.5 50.0L777.0 47.6L780.2 45.5L783.0 43.7L785.4 42.1L787.2 40.8"/><path stroke="#bcbcbc" d="M418.3 519.0L420.7 515.1L423.9 510.0L427.7 503.9L431.9 497.1L436.2 489.9L440.6 482.7L444.6 475.6L448.2 469.1L451.4 462.9L454.2 456.9L456.9 450.9L459.5 444.8L462.2 438.7L465.0 432.4L467.9 425.9L471.2 419.1L474.8 412.1L478.5 404.9L482.4 397.5L486.4 389.9L490.6 382.3L494.8 374.6L499.0 366.8L503.2 359.0L507.5 351.2L511.7 343.2L516.0 335.1L520.4 326.9L524.9 318.8L529.5 310.7L534.3 302.7L539.3 294.9L544.6 287.2L550.1 279.5L555.8 271.9L561.6 264.4L567.5 257.1L573.3 250.0L579.0 243.2L584.5 236.7L589.8 230.6L594.9 225.1L600.0 219.9L605.0 214.8L609.9 209.9L615.0 204.8L620.2 199.4L625.5 193.7L631.1 187.4L636.8 180.9L642.7 174.2L648.7 167.3L654.7 160.3L660.7 153.3L666.6 146.4L672.5 139.7L678.3 132.9L684.1 126.0L689.9 119.0L695.7 112.0L701.4 105.3L707.2 98.8L712.9 92.9L718.7 87.5L724.5 82.8L730.5 78.6L736.4 74.9L742.3 71.6L748.0 68.5L753.4 65.7L758.4 63.0L763.0 60.3L767.2 57.6L771.3 55.0L775.1 52.5L778.6 50.1L781.8 48.0L784.6 46.2L787.0 44.6L788.9 43.3"/><path stroke="#8a8a8a" d="M420.9 520.5L423.2 516.7L426.4 511.5L430.2 505.4L434.4 498.6L438.8 491.5L443.2 484.2L447.3 477.1L450.9 470.5L454.0 464.3L456.9 458.2L459.7 452.1L462.3 446.0L464.9 439.9L467.7 433.6L470.6 427.2L473.9 420.4L477.4 413.5L481.2 406.3L485.0 398.9L489.1 391.3L493.2 383.7L497.4 376.0L501.6 368.2L505.9 360.5L510.1 352.6L514.4 344.6L518.7 336.5L523.1 328.4L527.5 320.2L532.1 312.2L536.9 304.3L541.8 296.6L547.0 288.9L552.5 281.3L558.2 273.8L564.0 266.3L569.8 259.0L575.6 251.9L581.3 245.1L586.8 238.7L592.0 232.7L597.1 227.1L602.1 222.0L607.1 217.0L612.1 212.0L617.1 206.9L622.3 201.5L627.7 195.7L633.3 189.4L639.1 182.9L645.0 176.1L650.9 169.2L656.9 162.2L662.9 155.3L668.9 148.4L674.8 141.7L680.6 134.9L686.4 127.9L692.2 120.9L698.0 114.0L703.7 107.2L709.4 100.9L715.1 95.0L720.7 89.8L726.3 85.2L732.1 81.1L737.9 77.5L743.7 74.2L749.4 71.2L754.8 68.3L759.9 65.6L764.5 62.9L768.8 60.1L772.9 57.5L776.8 55.0L780.3 52.6L783.5 50.5L786.3 48.7L788.7 47.1L790.6 45.8"/><path stroke="#cfcfcf" d="M423.4 522.1L425.8 518.2L428.9 513.1L432.8 507.0L437.0 500.2L441.4 493.0L445.7 485.7L449.9 478.6L453.5 471.9L456.7 465.6L459.7 459.4L462.4 453.3L465.0 447.2L467.7 441.1L470.4 434.8L473.4 428.4L476.6 421.8L480.1 414.8L483.8 407.6L487.7 400.3L491.7 392.8L495.8 385.1L500.0 377.4L504.3 369.7L508.5 361.9L512.8 354.0L517.0 346.0L521.3 337.9L525.7 329.8L530.2 321.7L534.7 313.7L539.4 305.8L544.3 298.2L549.5 290.7L554.9 283.1L560.6 275.6L566.3 268.2L572.1 260.9L577.9 253.9L583.6 247.1L589.0 240.6L594.2 234.7L599.3 229.2L604.3 224.1L609.2 219.1L614.2 214.1L619.3 209.0L624.5 203.5L630.0 197.7L635.6 191.4L641.4 184.9L647.3 178.1L653.2 171.2L659.2 164.2L665.2 157.2L671.2 150.4L677.0 143.6L682.9 136.8L688.7 129.8L694.5 122.8L700.2 115.9L706.0 109.2L711.6 102.9L717.2 97.1L722.6 92.0L728.1 87.6L733.8 83.6L739.5 80.0L745.2 76.8L750.8 73.8L756.2 71.0L761.3 68.2L766.1 65.4L770.4 62.7L774.6 60.0L778.4 57.5L782.0 55.1L785.2 53.0L788.0 51.1L790.3 49.6L792.2 48.3"/><path stroke="#8a8a8a" d="M426.8 524.2L429.2 520.3L432.3 515.2L436.2 509.1L440.4 502.3L444.8 495.1L449.2 487.7L453.3 480.5L457.1 473.7L460.3 467.3L463.3 461.1L466.1 454.9L468.7 448.8L471.4 442.7L474.1 436.5L477.0 430.1L480.2 423.6L483.7 416.7L487.4 409.5L491.2 402.2L495.2 394.7L499.3 387.0L503.5 379.3L507.8 371.6L512.0 363.8L516.3 355.9L520.6 347.9L524.9 339.8L529.2 331.7L533.6 323.6L538.2 315.7L542.8 308.0L547.7 300.4L552.8 293.0L558.2 285.5L563.8 278.0L569.5 270.6L575.2 263.4L581.0 256.4L586.6 249.6L592.1 243.2L597.2 237.3L602.2 231.9L607.1 226.9L612.0 221.9L617.0 216.9L622.1 211.8L627.4 206.3L632.9 200.4L638.6 194.1L644.4 187.5L650.3 180.7L656.2 173.8L662.3 166.8L668.2 159.8L674.2 153.0L680.0 146.2L685.9 139.4L691.8 132.4L697.6 125.4L703.3 118.5L709.0 111.8L714.5 105.6L720.0 100.0L725.3 95.0L730.5 90.7L736.0 86.9L741.5 83.5L747.1 80.3L752.6 77.4L758.1 74.5L763.3 71.7L768.2 68.8L772.6 66.0L776.7 63.4L780.6 60.8L784.2 58.5L787.4 56.4L790.2 54.5L792.5 52.9L794.4 51.7"/><path stroke="#8c8c8c" d="M398.7 469.2L400.9 465.9L403.7 461.5L407.0 456.3L410.7 450.6L414.7 444.4L418.8 437.9L422.8 431.5L426.7 425.2L430.5 419.0L434.4 412.6L438.3 406.1L442.3 399.4L446.4 392.5L450.5 385.5L454.6 378.5L458.7 371.3L462.7 364.0L466.7 356.5L470.7 349.0L474.7 341.3L478.9 333.5L483.2 325.5L487.8 317.4L492.7 309.2L498.0 300.8L503.7 292.0L509.7 283.1L515.8 274.0L522.0 265.0L528.1 256.1L534.1 247.5L539.8 239.2L545.4 230.9L551.1 222.3L556.8 213.8L562.3 205.5L567.6 197.7L572.6 190.5L577.0 184.3L580.8 179.1L584.0 175.1L586.7 172.3L588.9 170.3L590.8 169.0L592.3 168.2L593.5 167.7L594.4 167.3L595.2 166.8"/><path stroke="#8c8c8c" d="M401.3 470.8L403.4 467.5L406.2 463.1L409.5 458.0L413.3 452.2L417.2 446.0L421.3 439.5L425.4 433.1L429.3 426.8L433.1 420.6L437.0 414.2L440.9 407.6L444.9 400.9L449.0 394.0L453.1 387.1L457.2 379.9L461.3 372.7L465.4 365.4L469.4 358.0L473.4 350.4L477.4 342.7L481.5 334.9L485.8 327.0L490.4 318.9L495.3 310.8L500.6 302.4L506.2 293.7L512.2 284.7L518.3 275.7L524.5 266.7L530.6 257.8L536.6 249.2L542.2 240.8L547.8 232.5L553.6 224.0L559.2 215.5L564.8 207.2L570.1 199.4L575.0 192.2L579.4 186.0L583.2 180.9L586.3 177.1L588.8 174.4L590.8 172.6L592.4 171.5L593.6 170.9L594.7 170.4L595.8 169.9L596.8 169.2"/><path stroke="#8a8a8a" d="M1151.5 59.7L1153.1 62.9L1155.3 67.2L1158.0 72.3L1160.9 78.0L1164.0 84.0L1167.0 90.2L1169.9 96.2L1172.6 102.0L1174.9 107.4L1177.2 112.9L1179.5 118.5L1181.6 124.0L1183.7 129.6L1185.8 135.2L1187.8 140.8L1189.7 146.4L1191.7 152.0L1193.6 157.6L1195.4 163.3L1197.3 169.0L1199.0 174.7L1200.7 180.4L1202.3 186.1L1203.8 191.8L1205.3 197.5L1206.6 203.4L1207.9 209.4L1209.2 215.3L1210.3 221.0L1211.3 226.5L1212.2 231.6L1212.9 236.2L1213.6 240.3L1214.2 244.0L1214.7 247.4L1215.1 250.7L1215.4 253.8L1215.4 256.8L1215.3 259.8L1214.9 262.8L1214.3 265.8L1213.5 268.7L1212.4 271.4L1211.2 274.0L1209.7 276.4L1208.1 278.7L1206.3 280.8L1204.3 282.7L1202.2 284.5L1199.8 286.0L1197.4 287.4L1194.7 288.6L1192.0 289.6L1189.1 290.3L1186.1 290.8L1183.1 291.0L1179.9 290.9L1176.6 290.4L1173.4 289.6L1170.2 288.7L1167.0 287.7L1164.0 286.7L1161.1 285.7L1158.4 284.7L1155.8 283.9L1153.2 283.0L1150.6 282.1L1148.1 281.1L1145.6 280.1L1143.0 279.0L1140.4 277.8L1137.8 276.5L1134.9 275.0L1132.0 273.4L1129.0 271.6L1126.0 269.8L1123.1 268.1L1120.3 266.3L1117.7 264.7L1115.3 263.2L1113.1 261.8L1111.0 260.4L1109.0 259.0L1107.2 257.8L1105.6 256.6L1104.2 255.6L1103.0 254.7L1102.1 254.1"/><path stroke="#b8b8b8" d="M1150.1 60.4L1151.8 63.6L1154.0 67.9L1156.6 73.0L1159.6 78.7L1162.6 84.7L1165.7 90.8L1168.6 96.9L1171.2 102.6L1173.6 108.0L1175.8 113.5L1178.1 119.0L1180.2 124.6L1182.3 130.1L1184.3 135.7L1186.3 141.3L1188.3 146.8L1190.2 152.5L1192.1 158.1L1194.0 163.8L1195.8 169.4L1197.6 175.1L1199.3 180.8L1200.9 186.5L1202.4 192.1L1203.8 197.9L1205.2 203.7L1206.5 209.7L1207.7 215.6L1208.8 221.3L1209.8 226.7L1210.7 231.8L1211.5 236.4L1212.1 240.5L1212.7 244.2L1213.2 247.6L1213.6 250.8L1213.9 253.8L1213.9 256.8L1213.8 259.7L1213.5 262.6L1212.9 265.4L1212.0 268.2L1211.0 270.8L1209.8 273.3L1208.5 275.6L1206.9 277.8L1205.2 279.8L1203.3 281.6L1201.3 283.3L1199.1 284.7L1196.7 286.1L1194.2 287.2L1191.5 288.1L1188.8 288.8L1186.0 289.3L1183.0 289.5L1180.0 289.4L1176.9 288.9L1173.7 288.2L1170.6 287.3L1167.5 286.3L1164.5 285.3L1161.6 284.2L1158.9 283.3L1156.3 282.4L1153.7 281.6L1151.1 280.6L1148.7 279.7L1146.2 278.7L1143.6 277.6L1141.1 276.4L1138.4 275.1L1135.6 273.7L1132.7 272.1L1129.7 270.3L1126.8 268.6L1123.8 266.8L1121.1 265.1L1118.5 263.4L1116.1 262.0L1113.9 260.6L1111.8 259.2L1109.9 257.8L1108.1 256.5L1106.5 255.4L1105.1 254.4L1103.9 253.5L1103.0 252.9"/><path stroke="#7a7a7a" d="M1148.8 61.1L1150.4 64.3L1152.6 68.6L1155.3 73.7L1158.2 79.3L1161.3 85.4L1164.3 91.5L1167.2 97.5L1169.8 103.2L1172.2 108.6L1174.5 114.1L1176.7 119.6L1178.8 125.1L1180.9 130.6L1182.9 136.2L1184.9 141.8L1186.9 147.3L1188.8 152.9L1190.7 158.6L1192.6 164.2L1194.4 169.9L1196.2 175.6L1197.8 181.2L1199.4 186.9L1200.9 192.5L1202.4 198.2L1203.7 204.1L1205.0 210.0L1206.2 215.9L1207.3 221.6L1208.3 227.0L1209.2 232.1L1210.0 236.7L1210.6 240.8L1211.2 244.5L1211.7 247.8L1212.1 251.0L1212.4 253.9L1212.4 256.8L1212.3 259.6L1212.0 262.3L1211.4 265.1L1210.6 267.7L1209.7 270.2L1208.5 272.6L1207.2 274.8L1205.7 276.9L1204.1 278.8L1202.3 280.5L1200.4 282.1L1198.3 283.5L1196.0 284.7L1193.6 285.8L1191.1 286.7L1188.5 287.4L1185.8 287.8L1183.0 288.0L1180.1 287.9L1177.2 287.4L1174.1 286.7L1171.0 285.9L1168.0 284.9L1165.0 283.8L1162.1 282.8L1159.4 281.9L1156.7 281.0L1154.2 280.1L1151.7 279.2L1149.2 278.3L1146.7 277.3L1144.3 276.2L1141.7 275.1L1139.1 273.8L1136.3 272.3L1133.4 270.7L1130.5 269.0L1127.5 267.3L1124.6 265.5L1121.9 263.8L1119.3 262.2L1116.9 260.7L1114.8 259.3L1112.7 257.9L1110.8 256.6L1109.0 255.3L1107.4 254.2L1106.0 253.1L1104.8 252.3L1103.8 251.6"/><path stroke="#c0c0c0" d="M1147.4 61.8L1149.1 65.0L1151.3 69.3L1154.0 74.4L1156.9 80.0L1159.9 86.0L1163.0 92.2L1165.9 98.2L1168.5 103.8L1170.8 109.2L1173.1 114.6L1175.3 120.1L1177.4 125.6L1179.5 131.2L1181.5 136.7L1183.5 142.3L1185.5 147.8L1187.4 153.4L1189.3 159.0L1191.2 164.7L1193.0 170.3L1194.7 176.0L1196.4 181.7L1198.0 187.3L1199.5 192.9L1200.9 198.6L1202.3 204.4L1203.5 210.3L1204.7 216.2L1205.8 221.8L1206.9 227.3L1207.7 232.3L1208.5 236.9L1209.2 241.0L1209.7 244.7L1210.2 248.1L1210.6 251.1L1210.9 254.0L1210.9 256.8L1210.8 259.4L1210.5 262.1L1209.9 264.7L1209.2 267.2L1208.3 269.6L1207.2 271.9L1205.9 274.0L1204.5 275.9L1203.0 277.7L1201.3 279.4L1199.5 280.8L1197.5 282.2L1195.4 283.4L1193.1 284.4L1190.7 285.2L1188.2 285.9L1185.6 286.3L1183.0 286.5L1180.3 286.4L1177.4 286.0L1174.5 285.3L1171.5 284.4L1168.5 283.4L1165.5 282.4L1162.6 281.4L1159.8 280.5L1157.2 279.6L1154.7 278.7L1152.2 277.8L1149.8 276.9L1147.3 275.9L1144.9 274.9L1142.4 273.7L1139.8 272.4L1137.0 271.0L1134.2 269.4L1131.2 267.7L1128.3 266.0L1125.4 264.2L1122.6 262.5L1120.1 260.9L1117.7 259.4L1115.6 258.0L1113.5 256.7L1111.6 255.3L1109.8 254.1L1108.2 252.9L1106.8 251.9L1105.7 251.1L1104.7 250.4"/><path stroke="#7a7a7a" d="M1146.1 62.5L1147.8 65.7L1150.0 70.0L1152.6 75.0L1155.5 80.7L1158.6 86.7L1161.6 92.8L1164.5 98.8L1167.1 104.4L1169.4 109.8L1171.7 115.2L1173.9 120.7L1176.0 126.2L1178.1 131.7L1180.1 137.2L1182.1 142.8L1184.1 148.3L1186.0 153.9L1187.9 159.5L1189.7 165.2L1191.5 170.8L1193.3 176.4L1195.0 182.1L1196.5 187.7L1198.0 193.2L1199.4 198.9L1200.8 204.7L1202.1 210.6L1203.3 216.4L1204.4 222.1L1205.4 227.5L1206.3 232.6L1207.0 237.2L1207.7 241.2L1208.3 244.9L1208.8 248.3L1209.1 251.3L1209.4 254.1L1209.4 256.8L1209.3 259.3L1209.0 261.8L1208.5 264.3L1207.8 266.7L1206.9 269.0L1205.9 271.2L1204.7 273.2L1203.4 275.0L1201.9 276.7L1200.3 278.3L1198.6 279.6L1196.7 280.9L1194.7 282.0L1192.5 283.0L1190.2 283.8L1187.9 284.4L1185.4 284.8L1183.0 285.0L1180.4 284.9L1177.7 284.5L1174.9 283.8L1171.9 283.0L1168.9 282.0L1166.0 281.0L1163.1 280.0L1160.3 279.1L1157.7 278.2L1155.2 277.3L1152.7 276.4L1150.3 275.5L1147.9 274.5L1145.5 273.5L1143.0 272.3L1140.4 271.1L1137.8 269.7L1134.9 268.1L1132.0 266.5L1129.1 264.7L1126.2 263.0L1123.4 261.2L1120.9 259.6L1118.5 258.2L1116.4 256.8L1114.4 255.4L1112.5 254.1L1110.7 252.9L1109.1 251.7L1107.7 250.7L1106.5 249.9L1105.6 249.2"/><path stroke="#b0b0b0" d="M1144.8 63.1L1146.4 66.4L1148.6 70.7L1151.3 75.7L1154.2 81.4L1157.3 87.4L1160.3 93.5L1163.2 99.4L1165.7 105.0L1168.0 110.4L1170.3 115.8L1172.5 121.2L1174.6 126.7L1176.7 132.2L1178.7 137.7L1180.7 143.3L1182.6 148.8L1184.6 154.4L1186.5 160.0L1188.3 165.6L1190.1 171.3L1191.9 176.9L1193.5 182.5L1195.1 188.1L1196.6 193.6L1198.0 199.3L1199.3 205.1L1200.6 210.9L1201.8 216.7L1202.9 222.4L1203.9 227.8L1204.8 232.8L1205.5 237.4L1206.2 241.5L1206.8 245.2L1207.3 248.5L1207.6 251.4L1207.9 254.2L1207.9 256.7L1207.8 259.2L1207.5 261.6L1207.0 264.0L1206.4 266.2L1205.5 268.4L1204.5 270.4L1203.4 272.3L1202.2 274.1L1200.8 275.7L1199.3 277.1L1197.7 278.4L1196.0 279.6L1194.0 280.7L1192.0 281.6L1189.8 282.4L1187.5 283.0L1185.3 283.3L1183.0 283.5L1180.6 283.4L1178.0 283.0L1175.2 282.4L1172.4 281.5L1169.4 280.6L1166.5 279.6L1163.6 278.6L1160.8 277.6L1158.2 276.8L1155.7 275.9L1153.2 275.0L1150.9 274.1L1148.5 273.1L1146.1 272.1L1143.6 271.0L1141.1 269.8L1138.5 268.4L1135.7 266.8L1132.8 265.2L1129.9 263.4L1127.0 261.7L1124.2 260.0L1121.7 258.4L1119.3 256.9L1117.2 255.5L1115.2 254.2L1113.3 252.9L1111.6 251.7L1110.0 250.5L1108.6 249.5L1107.4 248.6L1106.4 248.0"/><path stroke="#8a8a8a" d="M1143.4 63.8L1145.1 67.1L1147.3 71.3L1150.0 76.4L1152.9 82.1L1155.9 88.1L1158.9 94.1L1161.8 100.1L1164.3 105.6L1166.7 111.0L1168.9 116.4L1171.1 121.8L1173.2 127.2L1175.3 132.7L1177.3 138.2L1179.3 143.8L1181.2 149.3L1183.1 154.9L1185.0 160.5L1186.9 166.1L1188.7 171.7L1190.4 177.3L1192.1 182.9L1193.7 188.5L1195.1 194.0L1196.5 199.6L1197.9 205.4L1199.1 211.2L1200.3 217.0L1201.4 222.7L1202.4 228.1L1203.3 233.1L1204.1 237.6L1204.7 241.7L1205.3 245.4L1205.8 248.7L1206.1 251.6L1206.4 254.3L1206.4 256.7L1206.3 259.1L1206.1 261.3L1205.6 263.6L1204.9 265.8L1204.2 267.8L1203.2 269.7L1202.2 271.5L1201.0 273.2L1199.7 274.7L1198.3 276.0L1196.8 277.2L1195.2 278.3L1193.3 279.3L1191.4 280.2L1189.3 280.9L1187.2 281.5L1185.1 281.8L1182.9 282.0L1180.7 281.9L1178.3 281.5L1175.6 280.9L1172.8 280.1L1169.9 279.2L1167.0 278.2L1164.1 277.2L1161.3 276.2L1158.6 275.3L1156.2 274.5L1153.8 273.6L1151.4 272.7L1149.1 271.8L1146.7 270.7L1144.3 269.6L1141.8 268.4L1139.2 267.1L1136.4 265.5L1133.5 263.9L1130.6 262.1L1127.8 260.4L1125.0 258.7L1122.5 257.1L1120.1 255.6L1118.0 254.3L1116.1 252.9L1114.2 251.7L1112.4 250.4L1110.9 249.3L1109.5 248.3L1108.3 247.4L1107.3 246.7"/><path stroke="#9a9a9a" d="M1142.1 64.5L1143.8 67.7L1146.0 72.0L1148.6 77.1L1151.5 82.8L1154.6 88.7L1157.6 94.8L1160.4 100.7L1163.0 106.2L1165.3 111.5L1167.5 116.9L1169.7 122.3L1171.8 127.8L1173.9 133.3L1175.9 138.8L1177.9 144.3L1179.8 149.8L1181.7 155.4L1183.6 160.9L1185.5 166.5L1187.3 172.2L1189.0 177.7L1190.6 183.3L1192.2 188.9L1193.7 194.4L1195.1 200.0L1196.4 205.7L1197.7 211.5L1198.9 217.3L1200.0 223.0L1200.9 228.3L1201.8 233.3L1202.6 237.9L1203.2 242.0L1203.8 245.6L1204.3 248.9L1204.7 251.8L1204.9 254.4L1204.9 256.7L1204.8 258.9L1204.6 261.1L1204.1 263.2L1203.5 265.3L1202.8 267.2L1201.9 269.0L1200.9 270.7L1199.8 272.3L1198.6 273.7L1197.3 274.9L1196.0 276.0L1194.4 277.1L1192.7 278.0L1190.8 278.8L1188.9 279.5L1186.9 280.0L1184.9 280.4L1182.9 280.5L1180.9 280.4L1178.6 280.1L1176.0 279.5L1173.2 278.7L1170.4 277.8L1167.5 276.7L1164.6 275.7L1161.7 274.8L1159.1 273.9L1156.7 273.1L1154.3 272.2L1152.0 271.3L1149.6 270.4L1147.3 269.4L1144.9 268.3L1142.5 267.1L1139.9 265.7L1137.1 264.2L1134.3 262.6L1131.4 260.9L1128.6 259.1L1125.8 257.4L1123.3 255.8L1121.0 254.4L1118.9 253.0L1116.9 251.7L1115.0 250.4L1113.3 249.2L1111.7 248.1L1110.4 247.1L1109.1 246.2L1108.2 245.5"/><path stroke="#9a9a9a" d="M1204.5 61.9L1204.6 64.9L1204.7 68.9L1204.8 73.6L1204.9 78.8L1205.1 84.3L1205.2 89.8L1205.4 95.1L1205.5 99.9L1205.6 104.4L1205.7 108.7L1205.8 112.9L1205.9 117.1L1206.0 121.2L1206.1 125.4L1206.3 129.6L1206.5 133.9L1206.8 138.3L1207.1 142.8L1207.4 147.4L1207.8 152.0L1208.2 156.6L1208.6 161.1L1209.1 165.5L1209.5 169.7L1209.9 173.7L1210.4 177.6L1210.9 181.3L1211.4 184.9L1211.9 188.5L1212.4 192.1L1212.9 195.8L1213.5 199.6L1214.1 203.8L1214.8 208.2L1215.5 212.9L1216.2 217.5L1216.9 221.9L1217.5 225.8L1218.1 229.1L1218.5 231.6"/><path stroke="#c8c8c8" d="M1203.0 62.0L1203.1 64.9L1203.2 68.9L1203.3 73.6L1203.4 78.8L1203.6 84.3L1203.7 89.9L1203.9 95.2L1204.0 100.0L1204.1 104.4L1204.2 108.7L1204.3 112.9L1204.4 117.1L1204.5 121.3L1204.6 125.4L1204.8 129.6L1205.0 133.9L1205.3 138.4L1205.6 142.9L1205.9 147.5L1206.3 152.2L1206.7 156.8L1207.1 161.3L1207.6 165.7L1208.0 169.9L1208.4 173.9L1208.9 177.8L1209.4 181.5L1209.9 185.1L1210.4 188.7L1210.9 192.4L1211.4 196.1L1212.0 199.9L1212.6 204.0L1213.3 208.5L1214.0 213.1L1214.7 217.7L1215.4 222.1L1216.1 226.0L1216.6 229.4L1217.0 231.8"/><path stroke="#8a8a8a" d="M1201.0 62.0L1201.1 65.0L1201.2 68.9L1201.3 73.7L1201.4 78.9L1201.6 84.4L1201.7 89.9L1201.9 95.2L1202.0 100.0L1202.1 104.5L1202.2 108.8L1202.3 113.0L1202.4 117.1L1202.5 121.3L1202.6 125.5L1202.8 129.7L1203.0 134.1L1203.3 138.5L1203.6 143.1L1203.9 147.7L1204.3 152.3L1204.7 156.9L1205.1 161.5L1205.6 165.9L1206.0 170.1L1206.5 174.1L1206.9 178.0L1207.4 181.7L1207.9 185.4L1208.4 189.0L1208.9 192.6L1209.5 196.3L1210.0 200.1L1210.6 204.3L1211.3 208.8L1212.0 213.4L1212.8 218.0L1213.5 222.4L1214.1 226.4L1214.6 229.7L1215.0 232.2"/><path stroke="#b0b0b0" d="M1199.5 62.1L1199.6 65.0L1199.7 69.0L1199.8 73.7L1199.9 78.9L1200.1 84.4L1200.2 90.0L1200.4 95.2L1200.5 100.1L1200.6 104.5L1200.7 108.8L1200.8 113.0L1200.9 117.2L1201.0 121.3L1201.1 125.5L1201.3 129.8L1201.5 134.1L1201.8 138.6L1202.1 143.2L1202.4 147.8L1202.8 152.5L1203.2 157.1L1203.6 161.6L1204.1 166.0L1204.5 170.3L1205.0 174.3L1205.4 178.2L1205.9 181.9L1206.4 185.6L1206.9 189.2L1207.4 192.9L1208.0 196.6L1208.5 200.4L1209.1 204.5L1209.8 209.0L1210.6 213.6L1211.3 218.3L1212.0 222.6L1212.6 226.6L1213.1 229.9L1213.5 232.4"/><path stroke="#8a8a8a" d="M836.2 598.7L837.3 595.6L838.7 591.5L840.3 586.7L842.2 581.2L844.2 575.4L846.5 569.5L848.9 563.7L851.4 558.3L854.0 553.1L856.7 547.9L859.6 542.6L862.6 537.3L865.9 532.1L869.3 527.0L873.1 522.0L877.0 517.3L881.4 512.9L886.0 508.8L890.8 505.0L895.8 501.4L900.8 497.9L905.8 494.4L910.7 490.8L915.5 486.9L920.3 482.9L925.0 479.0L929.8 475.0L934.6 471.0L939.4 466.8L944.2 462.4L949.1 457.6L954.0 452.3L959.1 446.5L964.4 440.0L969.8 433.2L975.2 426.0L980.7 418.7L986.2 411.5L991.6 404.3L996.9 397.5L1002.0 391.0L1007.1 384.7L1012.1 378.4L1017.1 372.2L1022.0 366.0L1027.0 359.9L1031.9 353.7L1036.9 347.5L1042.0 341.2L1047.1 334.9L1052.3 328.5L1057.5 322.2L1062.6 315.9L1067.6 309.7L1072.3 303.6L1076.8 297.6L1081.0 291.7L1085.0 285.8L1088.8 279.8L1092.6 273.9L1096.2 268.2L1099.7 262.7L1103.3 257.4L1106.8 252.6L1110.5 248.0L1114.2 243.7L1117.9 239.6L1121.5 235.9L1124.8 232.5L1127.8 229.6L1130.3 227.1L1132.1 225.2"/><path stroke="#a8a8a8" d="M838.1 599.3L839.2 596.3L840.6 592.2L842.2 587.3L844.0 581.8L846.1 576.1L848.3 570.2L850.7 564.5L853.2 559.1L855.8 554.0L858.5 548.8L861.3 543.6L864.3 538.3L867.6 533.2L871.0 528.1L874.6 523.3L878.5 518.7L882.7 514.4L887.3 510.4L892.0 506.6L897.0 503.1L902.0 499.5L907.0 496.0L911.9 492.3L916.7 488.5L921.5 484.5L926.3 480.5L931.1 476.6L935.9 472.5L940.7 468.3L945.6 463.8L950.5 459.0L955.5 453.7L960.7 447.8L966.0 441.3L971.4 434.4L976.8 427.2L982.3 419.9L987.8 412.7L993.2 405.6L998.4 398.8L1003.6 392.3L1008.6 385.9L1013.7 379.6L1018.6 373.4L1023.6 367.3L1028.5 361.1L1033.5 355.0L1038.4 348.7L1043.5 342.5L1048.7 336.1L1053.9 329.8L1059.1 323.4L1064.2 317.1L1069.1 310.9L1073.9 304.8L1078.4 298.8L1082.6 292.9L1086.7 286.9L1090.5 280.9L1094.2 275.0L1097.9 269.3L1101.4 263.8L1104.9 258.6L1108.4 253.8L1112.0 249.3L1115.7 245.0L1119.4 241.0L1122.9 237.3L1126.3 233.9L1129.2 231.0L1131.7 228.6L1133.6 226.6"/><path stroke="#8a8a8a" d="M840.9 600.3L842.0 597.2L843.4 593.1L845.0 588.2L846.9 582.8L848.9 577.1L851.1 571.3L853.5 565.7L855.9 560.4L858.4 555.4L861.1 550.2L863.9 545.0L866.9 539.9L870.1 534.8L873.4 529.9L877.0 525.1L880.7 520.7L884.8 516.5L889.2 512.7L893.9 509.0L898.7 505.5L903.7 502.0L908.7 498.4L913.7 494.7L918.6 490.8L923.4 486.8L928.2 482.8L933.0 478.9L937.8 474.8L942.7 470.6L947.6 466.0L952.6 461.1L957.7 455.7L963.0 449.7L968.3 443.2L973.8 436.2L979.2 429.0L984.7 421.7L990.2 414.5L995.5 407.4L1000.8 400.6L1005.9 394.1L1011.0 387.8L1016.0 381.5L1021.0 375.3L1025.9 369.2L1030.9 363.0L1035.8 356.8L1040.8 350.6L1045.8 344.3L1051.0 338.0L1056.2 331.7L1061.4 325.3L1066.5 319.0L1071.5 312.8L1076.3 306.6L1080.8 300.6L1085.1 294.6L1089.2 288.5L1093.0 282.5L1096.8 276.6L1100.4 270.9L1103.9 265.4L1107.4 260.3L1110.8 255.6L1114.3 251.2L1117.9 247.0L1121.6 243.1L1125.1 239.4L1128.4 236.1L1131.3 233.1L1133.8 230.7L1135.7 228.7"/><path stroke="#c8c8c8" d="M842.8 601.0L843.9 597.9L845.3 593.8L846.9 588.9L848.8 583.5L850.8 577.8L853.0 572.0L855.3 566.5L857.7 561.3L860.2 556.3L862.9 551.2L865.7 546.0L868.6 540.9L871.8 535.9L875.0 531.0L878.5 526.4L882.2 522.0L886.2 518.0L890.5 514.2L895.1 510.6L899.9 507.1L904.8 503.6L909.9 500.0L914.9 496.3L919.9 492.3L924.7 488.3L929.5 484.4L934.3 480.4L939.1 476.3L944.0 472.0L949.0 467.4L954.1 462.5L959.2 457.0L964.5 451.0L969.9 444.4L975.3 437.5L980.8 430.2L986.3 422.9L991.8 415.7L997.1 408.6L1002.4 401.9L1007.5 395.4L1012.6 389.0L1017.6 382.8L1022.5 376.6L1027.5 370.4L1032.4 364.3L1037.4 358.1L1042.3 351.9L1047.4 345.6L1052.6 339.3L1057.8 332.9L1063.0 326.6L1068.1 320.3L1073.1 314.0L1077.9 307.8L1082.4 301.8L1086.7 295.7L1090.8 289.6L1094.7 283.6L1098.5 277.7L1102.1 272.0L1105.6 266.5L1109.0 261.5L1112.4 256.8L1115.8 252.5L1119.4 248.3L1123.0 244.4L1126.5 240.8L1129.8 237.5L1132.7 234.6L1135.2 232.1L1137.2 230.1"/><path stroke="#8a8a8a" d="M844.7 601.7L845.8 598.5L847.2 594.4L848.8 589.5L850.7 584.1L852.7 578.5L854.8 572.8L857.1 567.3L859.5 562.2L862.0 557.2L864.7 552.1L867.4 547.0L870.4 541.9L873.4 537.0L876.7 532.2L880.1 527.6L883.7 523.4L887.6 519.4L891.8 515.8L896.3 512.2L901.0 508.8L906.0 505.3L911.1 501.7L916.2 497.9L921.2 493.9L926.0 489.9L930.8 485.9L935.6 482.0L940.4 477.9L945.4 473.5L950.4 468.9L955.5 463.9L960.7 458.4L966.0 452.3L971.4 445.7L976.9 438.7L982.4 431.5L987.9 424.1L993.4 416.9L998.7 409.8L1003.9 403.1L1009.1 396.6L1014.1 390.3L1019.1 384.0L1024.1 377.8L1029.0 371.7L1034.0 365.5L1038.9 359.3L1043.9 353.1L1049.0 346.9L1054.1 340.5L1059.3 334.2L1064.5 327.8L1069.6 321.5L1074.6 315.2L1079.4 309.0L1084.0 303.0L1088.4 296.9L1092.5 290.7L1096.4 284.7L1100.2 278.7L1103.8 273.0L1107.3 267.6L1110.7 262.6L1114.0 258.0L1117.4 253.8L1120.9 249.7L1124.5 245.8L1128.0 242.2L1131.2 238.9L1134.1 236.0L1136.7 233.5L1138.6 231.5"/><path stroke="#b8b8b8" d="M846.6 602.3L847.7 599.2L849.1 595.0L850.7 590.2L852.5 584.8L854.6 579.2L856.7 573.5L859.0 568.1L861.3 563.1L863.8 558.1L866.4 553.1L869.2 548.0L872.1 543.0L875.1 538.1L878.3 533.4L881.7 528.9L885.2 524.7L888.9 520.9L893.0 517.3L897.5 513.8L902.2 510.4L907.1 506.9L912.2 503.3L917.4 499.5L922.4 495.4L927.3 491.4L932.0 487.5L936.9 483.5L941.8 479.4L946.7 475.0L951.8 470.3L956.9 465.3L962.2 459.7L967.5 453.6L973.0 446.9L978.5 439.9L984.0 432.7L989.5 425.3L995.0 418.1L1000.3 411.0L1005.5 404.3L1010.6 397.9L1015.7 391.5L1020.7 385.3L1025.6 379.1L1030.6 372.9L1035.5 366.8L1040.5 360.6L1045.5 354.4L1050.5 348.1L1055.7 341.8L1060.9 335.5L1066.1 329.1L1071.2 322.8L1076.2 316.5L1081.0 310.3L1085.6 304.1L1090.0 298.0L1094.2 291.8L1098.1 285.7L1101.9 279.8L1105.5 274.1L1108.9 268.7L1112.3 263.7L1115.6 259.2L1118.9 255.1L1122.4 251.0L1125.9 247.2L1129.4 243.6L1132.6 240.3L1135.6 237.4L1138.1 234.9L1140.0 232.9"/><path stroke="#8a8a8a" d="M848.5 603.0L849.6 599.8L851.0 595.7L852.6 590.8L854.4 585.5L856.4 579.9L858.6 574.3L860.8 568.9L863.1 563.9L865.6 559.0L868.2 554.0L870.9 549.0L873.8 544.0L876.8 539.2L879.9 534.5L883.2 530.1L886.7 526.1L890.3 522.3L894.3 518.8L898.7 515.4L903.4 512.0L908.3 508.5L913.4 504.9L918.6 501.0L923.7 497.0L928.5 492.9L933.3 489.0L938.1 485.0L943.1 480.9L948.1 476.5L953.2 471.8L958.4 466.7L963.7 461.1L969.1 454.9L974.6 448.2L980.1 441.1L985.6 433.9L991.1 426.5L996.6 419.3L1001.9 412.2L1007.1 405.6L1012.2 399.1L1017.2 392.8L1022.2 386.5L1027.2 380.3L1032.1 374.2L1037.1 368.0L1042.0 361.8L1047.0 355.6L1052.1 349.4L1057.2 343.1L1062.4 336.7L1067.6 330.4L1072.7 324.0L1077.8 317.7L1082.6 311.5L1087.3 305.3L1091.7 299.1L1095.8 292.9L1099.8 286.8L1103.5 280.9L1107.1 275.2L1110.6 269.8L1113.9 264.9L1117.2 260.5L1120.5 256.3L1123.9 252.3L1127.4 248.5L1130.8 245.0L1134.0 241.7L1137.0 238.8L1139.5 236.3L1141.5 234.3"/><path stroke="#9a9a9a" d="M850.4 603.7L851.5 600.5L852.9 596.3L854.5 591.4L856.3 586.1L858.3 580.6L860.4 575.0L862.6 569.7L864.9 564.8L867.3 559.9L870.0 554.9L872.7 549.9L875.5 545.0L878.5 540.3L881.6 535.7L884.8 531.4L888.1 527.4L891.7 523.8L895.6 520.4L899.9 517.0L904.5 513.6L909.5 510.2L914.6 506.5L919.8 502.6L925.0 498.5L929.8 494.5L934.6 490.6L939.4 486.6L944.4 482.4L949.4 478.0L954.5 473.2L959.8 468.1L965.1 462.4L970.6 456.2L976.1 449.4L981.7 442.3L987.2 435.1L992.7 427.7L998.2 420.5L1003.5 413.5L1008.7 406.8L1013.8 400.4L1018.8 394.0L1023.8 387.8L1028.8 381.6L1033.7 375.4L1038.6 369.3L1043.6 363.1L1048.6 356.9L1053.6 350.6L1058.8 344.3L1064.0 338.0L1069.2 331.6L1074.3 325.3L1079.3 319.0L1084.2 312.7L1088.9 306.5L1093.3 300.3L1097.5 294.0L1101.5 287.9L1105.2 281.9L1108.8 276.3L1112.3 270.9L1115.6 266.0L1118.7 261.7L1122.0 257.6L1125.4 253.7L1128.9 249.9L1132.3 246.4L1135.5 243.1L1138.4 240.2L1140.9 237.7L1142.9 235.6"/><path stroke="#8a8a8a" d="M902.9 537.1L900.2 539.0L896.6 541.6L892.2 544.7L887.4 548.1L882.5 551.6L877.8 555.0L873.6 558.2L870.1 560.9L867.1 563.3L864.4 565.4L862.0 567.2L860.0 568.8L858.4 570.3L857.2 571.7L856.4 573.0L855.8 574.5L855.4 576.3L855.2 578.3L855.3 580.6L855.7 583.1L856.3 585.7L857.1 588.3L858.2 591.0L859.4 593.5L860.8 595.8L863.0 598.2L865.8 600.8L868.9 603.6L872.1 606.7L875.2 610.1L877.9 614.1L879.8 618.6L880.6 623.1L880.8 627.4L880.4 631.7L879.7 635.9L878.7 640.2L877.7 644.9L876.8 649.9L876.0 655.7L875.1 662.7L874.1 671.3L872.9 680.6L871.7 690.3L870.6 699.7L869.5 708.2L868.6 715.4L868.0 720.6"/><path stroke="#b8b8b8" d="M901.7 535.4L899.1 537.4L895.4 539.9L891.0 543.0L886.2 546.4L881.3 550.0L876.6 553.4L872.4 556.6L868.9 559.4L865.9 561.7L863.2 563.8L860.7 565.6L858.7 567.3L857.0 568.9L855.6 570.5L854.6 572.1L853.9 573.9L853.4 576.0L853.2 578.3L853.3 580.8L853.7 583.4L854.3 586.2L855.2 589.0L856.4 591.8L857.6 594.5L859.3 597.0L861.6 599.6L864.4 602.2L867.5 605.0L870.7 608.1L873.7 611.3L876.2 615.0L877.9 619.1L878.7 623.3L878.8 627.4L878.4 631.4L877.7 635.5L876.8 639.8L875.8 644.5L874.8 649.6L874.0 655.4L873.1 662.5L872.1 671.0L870.9 680.4L869.7 690.1L868.6 699.4L867.5 708.0L866.6 715.1L866.0 720.4"/><path stroke="#8a8a8a" d="M900.6 533.8L897.9 535.7L894.2 538.3L889.9 541.4L885.1 544.8L880.2 548.3L875.4 551.8L871.1 555.0L867.6 557.8L864.7 560.1L861.9 562.2L859.5 564.1L857.3 565.8L855.5 567.5L854.0 569.3L852.8 571.2L852.0 573.3L851.4 575.7L851.2 578.3L851.3 581.0L851.7 583.8L852.4 586.7L853.3 589.7L854.5 592.6L855.9 595.5L857.7 598.3L860.1 601.0L863.1 603.7L866.2 606.5L869.3 609.5L872.1 612.6L874.4 616.0L876.0 619.7L876.7 623.5L876.8 627.3L876.4 631.1L875.7 635.1L874.8 639.4L873.8 644.1L872.8 649.3L872.0 655.1L871.1 662.3L870.1 670.8L868.9 680.2L867.7 689.8L866.6 699.2L865.5 707.7L864.6 714.9L864.0 720.1"/><path stroke="#c8c8c8" d="M899.4 532.2L896.8 534.1L893.1 536.7L888.7 539.8L883.9 543.2L879.0 546.7L874.2 550.2L869.9 553.4L866.4 556.2L863.4 558.5L860.7 560.6L858.3 562.5L856.0 564.3L854.1 566.1L852.4 568.1L851.0 570.3L850.0 572.7L849.4 575.4L849.2 578.2L849.3 581.2L849.8 584.2L850.5 587.3L851.5 590.4L852.7 593.4L854.1 596.5L856.1 599.5L858.7 602.4L861.7 605.2L864.8 608.0L867.8 610.8L870.5 613.8L872.7 616.9L874.0 620.3L874.7 623.8L874.8 627.2L874.4 630.9L873.8 634.7L872.9 639.0L871.9 643.7L870.9 649.0L870.0 654.9L869.1 662.0L868.1 670.5L866.9 679.9L865.8 689.6L864.6 698.9L863.5 707.5L862.7 714.7L862.0 719.9"/><path stroke="#8a8a8a" d="M898.3 530.6L895.6 532.5L891.9 535.1L887.6 538.1L882.8 541.6L877.8 545.1L873.0 548.6L868.7 551.8L865.1 554.6L862.2 557.0L859.5 559.0L857.0 560.9L854.7 562.8L852.6 564.8L850.8 566.9L849.3 569.4L848.1 572.1L847.5 575.1L847.2 578.2L847.3 581.3L847.8 584.6L848.6 587.8L849.6 591.0L850.8 594.2L852.4 597.5L854.5 600.7L857.3 603.8L860.4 606.7L863.5 609.5L866.4 612.2L869.0 615.1L870.9 617.9L872.1 620.9L872.7 624.0L872.8 627.2L872.5 630.6L871.8 634.4L870.9 638.6L869.9 643.3L868.9 648.6L868.0 654.6L867.2 661.8L866.1 670.3L865.0 679.7L863.8 689.3L862.6 698.7L861.6 707.2L860.7 714.4L860.0 719.6"/><path stroke="#a0a0a0" d="M897.1 528.9L894.4 530.8L890.8 533.4L886.4 536.5L881.6 539.9L876.6 543.5L871.9 547.0L867.5 550.3L863.9 553.1L861.0 555.4L858.3 557.4L855.8 559.4L853.4 561.3L851.2 563.4L849.2 565.7L847.5 568.4L846.2 571.5L845.5 574.8L845.2 578.1L845.4 581.5L845.8 584.9L846.6 588.3L847.7 591.7L849.0 595.0L850.6 598.5L853.0 602.0L855.9 605.2L859.0 608.1L862.1 610.9L865.0 613.6L867.4 616.3L869.1 618.9L870.2 621.4L870.7 624.2L870.8 627.1L870.5 630.3L869.8 634.0L869.0 638.2L867.9 642.9L866.9 648.3L866.0 654.3L865.2 661.5L864.1 670.1L863.0 679.4L861.8 689.1L860.6 698.5L859.6 707.0L858.7 714.2L858.0 719.4"/></g><path fill="none" stroke="#00ff00" stroke-width="3" stroke-linejoin="round" d="M746.9 250.7L743.0 248.0L727.0 248.0L683.0 293.6L646.3 339.0L589.8 417.5L557.8 476.0L524.4 547.0L505.6 605.5L504.0 618.0L509.8 630.5L552.0 636.0L583.6 638.6L642.7 636.4L674.5 634.0L715.5 627.0L776.7 618.0L840.0 613.4L899.0 618.0L976.2 627.0L1062.5 647.5L1112.5 656.5L1158.0 658.8L1203.3 655.2L1239.6 647.5L1248.7 633.8L1230.6 545.3L1212.4 531.7L1158.0 534.0L1112.5 531.7L1058.0 524.8L1012.6 521.7L999.0 529.4L985.0 550.0L972.0 580.0L962.6 604.3L960.3 622.5"/><path fill="none" stroke="#00ff00" stroke-width="3" stroke-linejoin="round" d="M841.0 615.0L843.0 580.0L852.0 547.0L866.6 520.0L876.0 505.0L898.0 478.0"/><path fill="none" stroke="#ffffff" stroke-width="3" stroke-linejoin="round" d="M603.3 396.7L615.6 379.5"/><path fill="none" stroke="#ffffff" stroke-width="3" stroke-linejoin="round" d="M524.4 547.0L505.6 605.5"/><path fill="none" stroke="#ffffff" stroke-width="3" stroke-linejoin="round" d="M583.6 638.6L642.7 636.4"/><path fill="none" stroke="#ffffff" stroke-width="3" stroke-linejoin="round" d="M980.8 629.3L1062.5 647.5"/><path fill="none" stroke="#ffffff" stroke-width="3" stroke-linejoin="round" d="M1248.7 633.8L1230.6 545.3"/><path fill="none" stroke="#ffffff" stroke-width="3" stroke-linejoin="round" d="M999.0 529.4L985.0 550.0"/><path fill="none" stroke="#ffffff" stroke-width="3" stroke-linejoin="round" d="M746.9 250.7L952.5 421.7"/><path fill="none" stroke="#ffffff" stroke-width="3" stroke-linejoin="round" d="M646.3 339.0L878.9 502.7"/><path fill="none" stroke="#ffffff" stroke-width="3" stroke-linejoin="round" d="M898.0 478.0L1147.0 213.0"/><path fill="none" stroke="#00ffff" stroke-width="1" stroke-linejoin="round" d="M706.4 293.6L901.0 443.8"/><path fill="none" stroke="#00ffff" stroke-width="2" stroke-linejoin="round" d="M737.4 419.6L732.3 426.1L725.3 435.0L717.0 445.5L707.9 457.2L698.5 469.3L689.4 481.2L681.3 492.3L674.6 502.0L669.2 510.3L664.6 517.8L660.6 524.7L657.1 531.4L653.9 538.0L650.9 544.8L648.0 552.1L645.0 560.0L642.0 569.2L639.1 579.5L636.3 590.5L633.6 601.6L631.3 612.3L629.2 621.9L627.4 630.0L626.0 636.0"/><path fill="none" stroke="#00ffff" stroke-width="2" stroke-linejoin="round" d="M745.3 423.6L740.9 429.2L734.9 436.8L727.7 445.8L719.8 455.8L711.6 466.3L703.7 476.8L696.4 486.9L690.3 496.0L685.2 504.3L680.7 512.3L676.5 520.1L672.8 527.8L669.2 535.5L665.8 543.4L662.4 551.5L659.0 560.0L655.4 569.4L651.7 579.9L648.1 591.0L644.5 602.0L641.3 612.5L638.3 622.1L635.9 630.1L634.0 636.0"/><path fill="none" stroke="#00ffff" stroke-width="2" stroke-linejoin="round" d="M740.3 419.6L735.6 425.8L729.1 434.1L721.4 444.0L712.9 454.9L704.1 466.4L695.7 477.7L687.9 488.4L681.5 498.0L676.2 506.4L671.5 514.3L667.2 521.8L663.4 529.1L659.8 536.4L656.5 543.9L653.2 551.7L650.0 560.0L646.7 569.3L643.5 579.8L640.4 590.8L637.5 601.9L634.9 612.5L632.5 622.0L630.5 630.0L629.0 636.0"/><path fill="none" stroke="#00ff00" stroke-width="2" stroke-linejoin="round" d="M742.8 420.6L738.1 426.8L731.6 435.1L723.9 445.0L715.4 455.9L706.6 467.4L698.2 478.7L690.4 489.4L684.0 499.0L678.7 507.4L674.0 515.3L669.7 522.8L665.9 530.1L662.3 537.4L659.0 544.9L655.7 552.7L652.5 561.0L649.2 570.3L646.0 580.8L642.9 591.8L640.0 602.9L637.4 613.5L635.0 623.0L633.0 631.0L631.5 637.0"/><path fill="none" stroke="#00ffff" stroke-width="2" stroke-linejoin="round" d="M595.0 398.8L592.6 402.1L589.2 406.5L585.3 411.6L580.9 417.4L576.4 423.6L571.9 430.0L567.7 436.4L564.0 442.6L560.6 449.1L557.1 456.3L553.8 463.9L550.6 471.4L547.6 478.7L544.9 485.2L542.7 490.7L541.0 494.8"/><path fill="none" stroke="#00ffff" stroke-width="2" stroke-linejoin="round" d="M913.0 470.8L912.7 472.1L912.3 473.9L911.9 476.1L911.4 478.5L910.8 481.0L910.0 483.5L909.1 485.9L908.0 488.0L906.7 490.0L905.1 492.0L903.3 493.9L901.4 495.8L899.4 497.7L897.4 499.4L895.5 501.1L893.6 502.7L891.7 504.2L889.6 505.7L887.5 507.2L885.4 508.5L883.4 509.8L881.6 510.9L880.1 511.8L879.0 512.5"/><path fill="none" stroke="#00ffff" stroke-width="1" d="M964.8 435.2L1009 446.3L996.7 505L952.5 494Z"/><path fill="none" stroke="#ffff00" stroke-width="3" d="M659 328Q670 337 664 347"/><path fill="none" stroke="#ffff00" stroke-width="3" d="M639 356Q648 346 657 352"/><path fill="none" stroke="#ffff00" stroke-width="3" d="M727 402Q736 411 731 420"/><path fill="none" stroke="#ffff00" stroke-width="3" d="M943 410Q952 402 960 406"/><path fill="none" stroke="#ffff00" stroke-width="3" d="M936 414Q944 423 939 431"/><path fill="none" stroke="#ffff00" stroke-width="3" d="M867 490Q876 483 886 487"/><path fill="none" stroke="#ffff00" stroke-width="3" d="M862 495Q870 505 865 515"/><path fill="none" stroke="#ffff00" stroke-width="3" d="M613 632Q621 629 624 623"/><path fill="none" stroke="#ffff00" stroke-width="3" d="M636 613Q637 627 650 632"/><path fill="none" stroke="#ffff00" stroke-width="3" d="M824 611Q833 607 835 600"/><path fill="none" stroke="#ffff00" stroke-width="3" d="M844 596Q845 610 855 614"/><path fill="none" stroke="#ffff00" stroke-width="3" d="M942 618Q952 614 955 607"/><path fill="none" stroke="#ffff00" stroke-width="3" d="M965 607Q966 621 977 626"/><path fill="none" stroke="#ffff00" stroke-width="3" d="M1000 406Q1008 398 1018 400"/><rect x="-9" y="-4" width="18" height="8" fill="none" stroke="#f0f0f0" stroke-width="1" transform="translate(735 250) rotate(0)"/><rect x="-9" y="-4" width="18" height="8" fill="none" stroke="#f0f0f0" stroke-width="1" transform="translate(663 329) rotate(-52)"/><rect x="-9" y="-4" width="18" height="8" fill="none" stroke="#f0f0f0" stroke-width="1" transform="translate(606 395) rotate(-55)"/><rect x="-9" y="-4" width="18" height="8" fill="none" stroke="#f0f0f0" stroke-width="1" transform="translate(560 472) rotate(-62)"/><rect x="-9" y="-4" width="18" height="8" fill="none" stroke="#f0f0f0" stroke-width="1" transform="translate(518 578) rotate(-72)"/><rect x="-9" y="-4" width="18" height="8" fill="none" stroke="#f0f0f0" stroke-width="1" transform="translate(553 637) rotate(5)"/><rect x="-9" y="-4" width="18" height="8" fill="none" stroke="#f0f0f0" stroke-width="1" transform="translate(613 637) rotate(0)"/><rect x="-9" y="-4" width="18" height="8" fill="none" stroke="#f0f0f0" stroke-width="1" transform="translate(680 631) rotate(-8)"/><rect x="-9" y="-4" width="18" height="8" fill="none" stroke="#f0f0f0" stroke-width="1" transform="translate(850 336) rotate(40)"/><rect x="-9" y="-4" width="18" height="8" fill="none" stroke="#f0f0f0" stroke-width="1" transform="translate(1148 659) rotate(0)"/><rect x="-9" y="-4" width="18" height="8" fill="none" stroke="#f0f0f0" stroke-width="1" transform="translate(1023 639) rotate(12)"/><rect x="-9" y="-4" width="18" height="8" fill="none" stroke="#f0f0f0" stroke-width="1" transform="translate(1062 527) rotate(3)"/><rect x="-9" y="-4" width="18" height="8" fill="none" stroke="#f0f0f0" stroke-width="1" transform="translate(1157 536) rotate(0)"/><rect x="-9" y="-4" width="18" height="8" fill="none" stroke="#f0f0f0" stroke-width="1" transform="translate(1236 588) rotate(78)"/><rect x="-9" y="-4" width="18" height="8" fill="none" stroke="#f0f0f0" stroke-width="1" transform="translate(968 587) rotate(-75)"/><rect x="-9" y="-4" width="18" height="8" fill="none" stroke="#f0f0f0" stroke-width="1" transform="translate(992 541) rotate(-60)"/><rect x="-9" y="-4" width="18" height="8" fill="none" stroke="#f0f0f0" stroke-width="1" transform="translate(1023 347) rotate(-47)"/><rect x="-9" y="-4" width="18" height="8" fill="none" stroke="#f0f0f0" stroke-width="1" transform="translate(905 462) rotate(-47)"/><rect x="-9" y="-4" width="18" height="8" fill="none" stroke="#f0f0f0" stroke-width="1" transform="translate(845 548) rotate(-75)"/><rect x="-9" y="-4" width="18" height="8" fill="none" stroke="#f0f0f0" stroke-width="1" transform="translate(1212 537) rotate(40)"/><rect x="-9" y="-4" width="18" height="8" fill="none" stroke="#f0f0f0" stroke-width="1" transform="translate(1242 640) rotate(-55)"/><path fill="none" stroke="#f0f0f0" stroke-width="1" d="M1064 376L1019 421M1072 384L1027 429"/><path fill="none" stroke="#00ff00" stroke-width="1" d="M1064 376Q1076 378 1072 384M1019 421Q1015 430 1027 429"/><ellipse cx="913" cy="550" rx="28" ry="42" transform="rotate(-20 913 550)" fill="none" stroke="#00ff00" stroke-width="1"/><path fill="none" stroke="#f0f0f0" stroke-width="1" d="M1000 452L972 485M992 445L960 480"/><path fill="none" stroke="#00ff00" stroke-width="1" d="M1000 452Q1010 440 1001 432M960 480Q965 492 975 487"/><path stroke="#ff28ff" stroke-width="1" d="M1144 212h8M1148 208v8"/><path stroke="#ff28ff" stroke-width="1" d="M1019 347h8M1023 343v8"/><path stroke="#ff28ff" stroke-width="1" d="M948 421h8M952 417v8"/><path stroke="#ff28ff" stroke-width="1" d="M1064 379h8M1068 375v8"/><path stroke="#ff28ff" stroke-width="1" d="M1019 426h8M1023 422v8"/><path stroke="#ff28ff" stroke-width="1" d="M997 450h8M1001 446v8"/><path stroke="#ff28ff" stroke-width="1" d="M872 505h8M876 501v8"/><path stroke="#ff28ff" stroke-width="1" d="M865 512h8M869 508v8"/><path stroke="#ff28ff" stroke-width="1" d="M908 473h8M912 469v8"/><path stroke="#ff28ff" stroke-width="1" d="M975 487h8M979 483v8"/><path stroke="#ff28ff" stroke-width="1" d="M1038 395h8M1042 391v8"/><path stroke="#ff28ff" stroke-width="1" d="M838 611h8M842 607v8"/><g fill="#ffff00" font-family="Liberation Sans" font-weight="bold" font-size="9.5" stroke="#ffff00" stroke-width="0.9" text-anchor="middle" dominant-baseline="central"><text transform="translate(687.0 215.0) rotate(50) scale(0.72 1)">CTP1/61.758</text><text transform="translate(687.0 235.0) rotate(50) scale(0.72 1)">300</text><text transform="translate(665.0 257.0) rotate(50) scale(0.72 1)">280</text><text transform="translate(644.0 282.0) rotate(50) scale(0.72 1)">260</text><text transform="translate(624.5 307.0) rotate(50) scale(0.72 1)">240</text><text transform="translate(604.0 331.0) rotate(50) scale(0.72 1)">220</text><text transform="translate(580.0 345.6) rotate(-40) scale(0.72 1)">CTP68.647</text><text transform="translate(564.0 371.0) rotate(45) scale(0.72 1)">TC614.113</text><text transform="translate(551.0 410.0) rotate(35) scale(0.72 1)">340</text><text transform="translate(534.0 437.6) rotate(35) scale(0.72 1)">360</text><text transform="translate(519.7 467.0) rotate(35) scale(0.72 1)">380</text><text transform="translate(505.3 496.7) rotate(35) scale(0.72 1)">400</text><text transform="translate(494.0 525.4) rotate(35) scale(0.72 1)">420</text><text transform="translate(479.8 533.4) rotate(30) scale(0.72 1)">CT436.784</text><text transform="translate(483.0 555.7) rotate(35) scale(0.72 1)">440</text><text transform="translate(473.4 584.4) rotate(35) scale(0.72 1)">460</text><text transform="translate(457.5 589.0) rotate(25) scale(0.72 1)">TC465.802</text><text transform="translate(481.4 649.8) rotate(-45) scale(0.72 1)">480</text><text transform="translate(508.5 683.3) rotate(-75) scale(0.72 1)">CT488.845</text><text transform="translate(532.5 672.0) rotate(80) scale(0.72 1)">500</text><text transform="translate(566.0 677.0) rotate(85) scale(0.72 1)">520</text><text transform="translate(588.3 688.0) rotate(85) scale(0.72 1)">CT531.864</text><text transform="translate(599.4 675.3) rotate(85) scale(0.72 1)">540</text><text transform="translate(629.7 673.7) rotate(85) scale(0.72 1)">560</text><text transform="translate(644.0 684.9) rotate(85) scale(0.72 1)">TC568.887</text><text transform="translate(661.6 672.0) rotate(85) scale(0.72 1)">580</text><text transform="translate(695.0 669.0) rotate(85) scale(0.72 1)">600</text><text transform="translate(723.8 675.3) rotate(80) scale(0.72 1)">CTP617.144</text><text transform="translate(743.0 672.0) rotate(80) scale(0.72 1)">TC620.715</text><text transform="translate(755.7 657.8) rotate(80) scale(0.72 1)">640</text><text transform="translate(784.4 654.6) rotate(80) scale(0.72 1)">660</text><text transform="translate(813.0 651.4) rotate(80) scale(0.72 1)">680</text><text transform="translate(666.4 648.2) rotate(25) scale(0.72 1)">T08.778</text><text transform="translate(666.4 632.0) rotate(-60) scale(0.72 1)">180</text><text transform="translate(633.0 373.0) rotate(-55) scale(0.72 1)">180</text><text transform="translate(657.7 391.6) rotate(-55) scale(0.72 1)">160</text><text transform="translate(683.4 410.0) rotate(-55) scale(0.72 1)">140</text><text transform="translate(708.0 426.5) rotate(-55) scale(0.72 1)">120</text><text transform="translate(733.0 443.0) rotate(-55) scale(0.72 1)">100</text><text transform="translate(757.0 456.0) rotate(65) scale(0.72 1)">0.60</text><text transform="translate(777.0 430.0) rotate(45) scale(0.72 1)">0.000</text><text transform="translate(693.5 552.5) rotate(30) scale(0.72 1)">100</text><text transform="translate(682.4 578.0) rotate(30) scale(0.72 1)">120</text><text transform="translate(672.8 605.0) rotate(30) scale(0.72 1)">160</text><text transform="translate(704.7 527.0) rotate(30) scale(0.72 1)">80</text><text transform="translate(720.7 501.5) rotate(30) scale(0.72 1)">60</text><text transform="translate(739.8 495.0) rotate(35) scale(0.72 1)">TC48.101</text><text transform="translate(736.6 477.5) rotate(30) scale(0.72 1)">40</text><text transform="translate(759.0 461.6) rotate(30) scale(0.72 1)">80</text><text transform="translate(784.4 477.5) rotate(30) scale(0.72 1)">20</text><text transform="translate(810.0 495.0) rotate(30) scale(0.72 1)">0</text><text transform="translate(747.0 209.4) rotate(-70) scale(0.72 1)">160</text><text transform="translate(779.0 213.0) rotate(-55) scale(0.72 1)">TC1/73.888</text><text transform="translate(788.0 235.0) rotate(-50) scale(0.72 1)">180</text><text transform="translate(810.0 255.4) rotate(-50) scale(0.72 1)">140</text><text transform="translate(835.0 275.7) rotate(-50) scale(0.72 1)">120</text><text transform="translate(859.0 294.0) rotate(-50) scale(0.72 1)">100</text><text transform="translate(881.0 316.0) rotate(-50) scale(0.72 1)">80</text><text transform="translate(903.0 336.0) rotate(-50) scale(0.72 1)">60</text><text transform="translate(927.0 356.6) rotate(-50) scale(0.72 1)">40</text><text transform="translate(949.0 375.0) rotate(-50) scale(0.72 1)">20</text><text transform="translate(978.5 389.8) rotate(-50) scale(0.72 1)">0.000</text><text transform="translate(1175.4 239.0) rotate(45) scale(0.72 1)">0.000</text><text transform="translate(1151.5 257.0) rotate(60) scale(0.72 1)">20</text><text transform="translate(1129.4 279.0) rotate(60) scale(0.72 1)">40</text><text transform="translate(1109.0 301.4) rotate(60) scale(0.72 1)">60</text><text transform="translate(1089.0 325.0) rotate(60) scale(0.72 1)">80</text><text transform="translate(1068.7 349.0) rotate(60) scale(0.72 1)">100</text><text transform="translate(1046.6 371.0) rotate(60) scale(0.72 1)">120</text><text transform="translate(1026.0 393.4) rotate(60) scale(0.72 1)">140</text><text transform="translate(1006.0 415.5) rotate(60) scale(0.72 1)">160</text><text transform="translate(986.0 437.6) rotate(60) scale(0.72 1)">180</text><text transform="translate(965.7 459.7) rotate(60) scale(0.72 1)">200</text><text transform="translate(1018.6 470.0) rotate(-80) scale(0.72 1)">CTP1/78.808</text><text transform="translate(1002.6 485.5) rotate(-80) scale(0.72 1)">1150</text><text transform="translate(1044.0 484.0) rotate(-80) scale(0.72 1)">1160</text><text transform="translate(1076.0 488.7) rotate(-80) scale(0.72 1)">1140</text><text transform="translate(1112.7 475.0) rotate(-80) scale(0.72 1)">CTP118.804</text><text transform="translate(1135.0 495.0) rotate(-80) scale(0.72 1)">1100</text><text transform="translate(1162.0 496.7) rotate(-80) scale(0.72 1)">1080</text><text transform="translate(1187.7 493.5) rotate(-80) scale(0.72 1)">1060</text><text transform="translate(1197.0 475.0) rotate(-80) scale(0.72 1)">CTP1082.408</text><text transform="translate(1251.4 511.0) rotate(-40) scale(0.72 1)">1040</text><text transform="translate(1270.6 533.4) rotate(-20) scale(0.72 1)">TC1038.70</text><text transform="translate(1270.6 555.7) rotate(-20) scale(0.72 1)">1020</text><text transform="translate(1277.0 586.0) rotate(-25) scale(0.72 1)">1000</text><text transform="translate(1283.0 616.3) rotate(-25) scale(0.72 1)">980</text><text transform="translate(841.5 651.4) rotate(85) scale(0.72 1)">700</text><text transform="translate(871.8 651.4) rotate(85) scale(0.72 1)">720</text><text transform="translate(899.0 654.6) rotate(80) scale(0.72 1)">740</text><text transform="translate(927.7 657.8) rotate(80) scale(0.72 1)">760</text><text transform="translate(956.4 662.6) rotate(80) scale(0.72 1)">780</text><text transform="translate(969.0 678.5) rotate(80) scale(0.72 1)">CTP780.288</text><text transform="translate(985.0 669.0) rotate(80) scale(0.72 1)">800</text><text transform="translate(1015.4 677.0) rotate(80) scale(0.72 1)">820</text><text transform="translate(1045.7 683.3) rotate(80) scale(0.72 1)">840</text><text transform="translate(1055.0 696.0) rotate(75) scale(0.72 1)">TC842.287</text><text transform="translate(1077.6 689.7) rotate(80) scale(0.72 1)">860</text><text transform="translate(1109.5 694.5) rotate(85) scale(0.72 1)">880</text><text transform="translate(1143.0 696.0) rotate(85) scale(0.72 1)">900</text><text transform="translate(1176.5 696.0) rotate(85) scale(0.72 1)">920</text><text transform="translate(1210.0 689.7) rotate(85) scale(0.72 1)">940</text><text transform="translate(1241.9 696.0) rotate(80) scale(0.72 1)">CTP957.290</text><text transform="translate(1249.8 684.9) rotate(80) scale(0.72 1)">960</text><text transform="translate(887.8 608.0) rotate(-5) scale(0.72 1)">CTP680.741</text><text transform="translate(910.0 621.0) rotate(10) scale(0.72 1)">1283.70</text><text transform="translate(857.5 533.4) rotate(-65) scale(0.72 1)">0.000</text><text transform="translate(833.6 512.6) rotate(-60) scale(0.72 1)">20</text><text transform="translate(883.0 570.0) rotate(15) scale(0.72 1)">300</text><text transform="translate(876.6 592.4) rotate(15) scale(0.72 1)">320</text><text transform="translate(903.7 551.0) rotate(25) scale(0.72 1)">TC377.597</text><text transform="translate(892.6 546.0) rotate(30) scale(0.72 1)">280</text><text transform="translate(951.6 501.5) rotate(35) scale(0.72 1)">1293.96</text><text transform="translate(956.4 522.0) rotate(45) scale(0.72 1)">1820</text><text transform="translate(938.8 551.0) rotate(45) scale(0.72 1)">1239</text><text transform="translate(923.0 586.0) rotate(45) scale(0.72 1)">1240</text><text transform="translate(930.0 512.0) rotate(40) scale(0.72 1)">CT1/52.98</text><text transform="translate(925.0 522.0) rotate(40) scale(0.72 1)">CT152.00</text></g><text fill="#00ffff" font-family="Liberation Sans" font-weight="bold" font-size="9" stroke="#00ffff" stroke-width="0.6" text-anchor="middle" dominant-baseline="central" transform="translate(936 411) rotate(45) scale(0.8 1)">ST2</text><text fill="#00ffff" font-family="Liberation Sans" font-weight="bold" font-size="9" stroke="#00ffff" stroke-width="0.6" text-anchor="middle" dominant-baseline="central" transform="translate(866 499) rotate(45) scale(0.8 1)">ST2</text><text fill="#00ffff" font-family="Liberation Sans" font-weight="bold" font-size="9" stroke="#00ffff" stroke-width="0.6" text-anchor="middle" dominant-baseline="central" transform="translate(740 428) rotate(-60) scale(0.8 1)">ST2</text><text fill="#00ffff" font-family="Liberation Sans" font-weight="bold" font-size="10" text-anchor="middle" dominant-baseline="central" transform="translate(1140 226) rotate(-45)">RS07</text></g></svg></div>
</div><div id="lp" class="abs">
  <div id="lpt" class="abs"></div>
  <div id="lpx" class="abs">x</div>
  <div class="abs" style="left:7px;top:36px;width:22px;height:22px;border:1px solid #b9b9b9;background:#e8e8e8;"><div class="abs" style="left:1px;top:1px;width:18px;height:18px;background:#ece9d8"></div><svg class="abs" style="left:0;top:0" width="20" height="20" viewBox="0 0 20 20"><rect x="1.5" y="1.5" width="17" height="17" fill="#f5f1e0" stroke="#1aa0e8" stroke-width="1.5"/><circle cx="5" cy="6" r="1.5" fill="#8b0a0a"/><circle cx="5" cy="10" r="1.5" fill="#8b0a0a"/><circle cx="5" cy="14" r="1.5" fill="#8b0a0a"/><path d="M8 6h8M8 10h8M8 14h8" stroke="#1a3a8a" stroke-width="1.5"/></svg></div><div class="abs" style="left:33px;top:36px;width:22px;height:22px;border:1px solid #b9b9b9;background:#e8e8e8;"><div class="abs" style="left:1px;top:1px;width:18px;height:18px;background:#ece9d8"></div><svg class="abs" style="left:0;top:0" width="20" height="20" viewBox="0 0 20 20"><path d="M2 11l8-4 8 4-8 4z" fill="#c9cdd8" stroke="#e32b2b" stroke-width="0.8"/><path d="M2 8l8-4 8 4-8 4z" fill="#a7c3e6" stroke="#8aa3c4" stroke-width="0.6"/></svg></div><div class="abs" style="left:59px;top:36px;width:22px;height:22px;border:1px solid #b9b9b9;background:#e8e8e8;"><div class="abs" style="left:1px;top:1px;width:18px;height:18px;background:#ece9d8"></div><svg class="abs" style="left:0;top:0" width="20" height="20" viewBox="0 0 20 20"><rect x="5" y="4" width="11" height="12" fill="#d7e6f2" stroke="#8b0a0a" stroke-width="1.3"/><rect x="6" y="5" width="1.5" height="10" fill="#f2e38a"/><circle cx="9.5" cy="7" r="1" fill="#2a5a9a"/><circle cx="13" cy="7" r="1" fill="#2a5a9a"/><circle cx="9.5" cy="10.5" r="1" fill="#2a5a9a"/><rect x="12" y="12" width="2.5" height="2.5" fill="#f5d320"/></svg></div><div class="abs" style="left:85px;top:36px;width:22px;height:22px;border:1px solid #b9b9b9;background:#e8e8e8;"><div class="abs" style="left:1px;top:1px;width:18px;height:18px;background:#ece9d8"></div><svg class="abs" style="left:0;top:0" width="20" height="20" viewBox="0 0 20 20"><path d="M4 5h12l-6 6z" fill="#7fb2f0" stroke="#1a3a8a" stroke-width="0.8"/><rect x="7.5" y="2" width="5" height="4" fill="#7fb2f0"/><path d="M4 15h12" stroke="#1f4fbf" stroke-width="1.6"/></svg></div>
  <div id="search" class="abs"><div class="abs" style="left:1px;top:1px;width:266px;height:1px;background:#6d6d6d"></div><div class="abs" style="left:1px;top:1px;width:1px;height:20px;background:#6d6d6d"></div></div>
  <div class="abs" style="left:274px;top:64px;width:19px;height:22px;border:1px solid #b9b9b9;background:#ece9d8"><svg class="abs" style="left:0;top:0" width="17" height="20" viewBox="0 0 17 20"><circle cx="7" cy="8" r="5" fill="#dbe9f3" stroke="#505a66" stroke-width="1.4"/><path d="M10.5 11.5L15.5 16.5" stroke="#c77a2a" stroke-width="2.4" stroke-linecap="round"/></svg></div>
  <div class="abs" style="left:297px;top:64px;width:22px;height:22px;border:1px solid #b9b9b9;background:#eaeaea"><svg class="abs" style="left:0;top:0" width="20" height="20" viewBox="0 0 20 20"><rect x="2" y="2" width="16" height="16" fill="#f4f4f4"/><path d="M5 16V8.5Q5 6 7 6Q9 6 9 8.5V16M5 11.5H9" fill="none" stroke="#8a0a1a" stroke-width="1.9"/><path d="M11.5 9.3H15V16H12V12.8H15" fill="none" stroke="#8a0a1a" stroke-width="1.9"/></svg></div>
  <div class="abs" style="left:323px;top:64px;width:22px;height:22px;border:1px solid #b9b9b9;background:#eaeaea"><svg class="abs" style="left:0;top:0" width="20" height="20" viewBox="0 0 20 20"><rect x="2" y="2" width="16" height="16" fill="#f4f4f4"/><path d="M3.5 3.8H17.5M3.5 16.2H17.5M17 6v8" stroke="#222" stroke-width="1"/><path d="M5 6.5V14.5H9V10.5H5M5 6.5H8.5V10.5" fill="none" stroke="#8a0a1a" stroke-width="1.8"/><path d="M11 5.5V14.5H14.5V10.5H11" fill="none" stroke="#8a0a1a" stroke-width="1.8"/></svg></div>
  <div id="list" class="abs">
    <div id="lhead" class="abs"><span class="abs" style="left:2px;top:1px;font-size:12px;line-height:16px">Model Name</span></div>
    <div class="abs row" style="top:23px"><span style="transform:scaleX(0.93)">ALIGNMENT</span></div>
    <div class="abs row" style="top:47px"><span style="transform:scaleX(0.925)">ALIGNMENT DRAINAGE</span></div>
    <div class="abs row" style="top:71px"><span style="transform:scaleX(0.93)">ALIGNMENT KERBS</span></div>
    <div class="abs row" style="top:95px"><span style="transform:scaleX(0.93)">CONSTRUCTION CAD</span></div>
    <div class="abs row" style="top:119px"><span style="transform:scaleX(0.95)">tin SURVEY</span></div>
  </div>
  <div class="abs btn" style="left:71px;top:644px;width:70px">Remove</div>
  <div class="abs btn" style="left:271px;top:644px;width:70px">Remove all</div>
</div><div id="tm" class="abs">
  <div id="tmt" class="abs"></div>
  <svg class="abs" style="left:10px;top:7px" width="14" height="16" viewBox="0 0 14 16"><path d="M1 4l6-3 6 3v8l-6 3-6-3z" fill="#6f8f7a"/><path d="M1 4l6 3 6-3-6-3z" fill="#a9c4b0"/><path d="M7 7v8l6-3v-8z" fill="#3f5f4a"/><text x="1.5" y="12" font-size="5" fill="#c02020" font-family="Liberation Sans">12</text></svg>
  <div class="abs" style="left:29px;top:7px;font-size:12px;color:#8a8a8a;transform:scaleX(0.985);transform-origin:0 0">Template Manager</div>
  <div class="abs" style="left:9px;top:39px;width:22px;height:22px;border:1px solid #b9b9b9;background:#e8e8e8;"><div class="abs" style="left:1px;top:1px;width:18px;height:18px;background:#ece9d8"></div><svg class="abs" style="left:0;top:0" width="20" height="20" viewBox="0 0 20 20"><path d="M4 8c1-4 7-5 10-2l1-2 1 6-6-1 2-1c-2-2-5-2-6 0z" fill="#2a6adf"/><path d="M16 12c-1 4-7 5-10 2l-1 2-1-6 6 1-2 1c2 2 5 2 6 0z" fill="#2a6adf"/></svg></div><div class="abs" style="left:9px;top:65px;width:22px;height:22px;border:1px solid #b9b9b9;background:#e8e8e8;"><div class="abs" style="left:1px;top:1px;width:18px;height:18px;background:#ece9d8"></div><svg class="abs" style="left:0;top:0" width="20" height="20" viewBox="0 0 20 20"><rect x="2" y="3" width="10" height="8" fill="#dfeaf2" stroke="#3f7fc8" stroke-width="1.2"/><path d="M6 7h9l3 3v7h-12z" fill="#c8d8e4" stroke="#8b0a0a" stroke-width="1.3"/></svg></div><div class="abs" style="left:9px;top:91px;width:22px;height:22px;border:1px solid #b9b9b9;background:#e8e8e8;"><div class="abs" style="left:1px;top:1px;width:18px;height:18px;background:#ece9d8"></div><svg class="abs" style="left:0;top:0" width="20" height="20" viewBox="0 0 20 20"><rect x="3" y="8" width="13" height="4" fill="#b5d6f5" stroke="#8b0a0a" stroke-width="1.2"/></svg></div><div class="abs" style="left:9px;top:117px;width:20px;height:20px;border:1px solid #b9b9b9;background:#e8e8e8;"><div class="abs" style="left:1px;top:1px;width:16px;height:16px;background:#ece9d8"></div><svg class="abs" style="left:0;top:0" width="18" height="18" viewBox="0 0 18 18"><path d="M3 3l13 13M16 3l-13 13" stroke="#d8142a" stroke-width="2.2"/></svg></div><div id="tree" class="abs"></div><div class="abs" style="left:50px;top:49px;width:9px;height:9px;border:1px solid #9a9a9a;border-radius:2px;background:linear-gradient(#fff,#e4e4e4)"><div class="abs" style="left:1px;top:3px;width:5px;height:1px;background:#3a5ab0"></div></div><div class="abs" style="left:59px;top:53px;width:6px;border-top:1px dotted #555"></div><div class="abs" style="left:65px;top:44px;width:16px;height:16px;border:1px dotted #a05a30"></div><svg class="abs" style="left:66px;top:45px" width="14" height="14" viewBox="0 0 14 14"><path d="M0.8 10 L0.8 5.6 L3 3.8 L10 3.8 L12.2 5.6 L12.2 10 L10 10 L10 8.6 L3 8.6 L3 10 Z" fill="#cdeef5" stroke="#8b0a0a" stroke-width="1.4" stroke-linejoin="miter"/><path d="M2 6.5h9" stroke="#6f7fe6" stroke-width="1" stroke-dasharray="1.5 1"/><path d="M6.5 0.5v12.5" stroke="#000" stroke-width="1.2"/></svg><div class="abs" style="left:84px;top:43px;width:96px;height:18px;background:#0a6fd8"></div><div class="abs ti" style="left:86px;top:43px;color:#fff">Project templates</div><div class="abs" style="left:73px;top:61px;height:117px;border-left:1px dotted #555"></div><div class="abs" style="left:74px;top:71px;width:10px;border-top:1px dotted #555"></div><svg class="abs" style="left:85px;top:64px" width="14" height="14" viewBox="0 0 14 14"><path d="M0.8 10 L0.8 5.6 L3 3.8 L10 3.8 L12.2 5.6 L12.2 10 L10 10 L10 8.6 L3 8.6 L3 10 Z" fill="#cdeef5" stroke="#8b0a0a" stroke-width="1.4" stroke-linejoin="miter"/><path d="M2 6.5h9" stroke="#6f7fe6" stroke-width="1" stroke-dasharray="1.5 1"/><path d="M6.5 0.5v12.5" stroke="#000" stroke-width="1.2"/></svg><div class="abs ti" style="left:105px;top:61px;transform:scaleX(0.86)">BASIN EXTERNAL</div><div class="abs" style="left:74px;top:89px;width:10px;border-top:1px dotted #555"></div><svg class="abs" style="left:85px;top:82px" width="14" height="14" viewBox="0 0 14 14"><path d="M0.8 10 L0.8 5.6 L3 3.8 L10 3.8 L12.2 5.6 L12.2 10 L10 10 L10 8.6 L3 8.6 L3 10 Z" fill="#cdeef5" stroke="#8b0a0a" stroke-width="1.4" stroke-linejoin="miter"/><path d="M2 6.5h9" stroke="#6f7fe6" stroke-width="1" stroke-dasharray="1.5 1"/><path d="M6.5 0.5v12.5" stroke="#000" stroke-width="1.2"/></svg><div class="abs ti" style="left:105px;top:79px;transform:scaleX(0.86)">BASIN INTERNAL</div><div class="abs" style="left:74px;top:107px;width:10px;border-top:1px dotted #555"></div><svg class="abs" style="left:85px;top:100px" width="14" height="14" viewBox="0 0 14 14"><path d="M0.8 10 L0.8 5.6 L3 3.8 L10 3.8 L12.2 5.6 L12.2 10 L10 10 L10 8.6 L3 8.6 L3 10 Z" fill="#cdeef5" stroke="#8b0a0a" stroke-width="1.4" stroke-linejoin="miter"/><path d="M2 6.5h9" stroke="#6f7fe6" stroke-width="1" stroke-dasharray="1.5 1"/><path d="M6.5 0.5v12.5" stroke="#000" stroke-width="1.2"/></svg><div class="abs ti" style="left:105px;top:97px;transform:scaleX(0.86)">KERB RETURN LHS</div><div class="abs" style="left:74px;top:125px;width:10px;border-top:1px dotted #555"></div><svg class="abs" style="left:85px;top:118px" width="14" height="14" viewBox="0 0 14 14"><path d="M0.8 10 L0.8 5.6 L3 3.8 L10 3.8 L12.2 5.6 L12.2 10 L10 10 L10 8.6 L3 8.6 L3 10 Z" fill="#cdeef5" stroke="#8b0a0a" stroke-width="1.4" stroke-linejoin="miter"/><path d="M2 6.5h9" stroke="#6f7fe6" stroke-width="1" stroke-dasharray="1.5 1"/><path d="M6.5 0.5v12.5" stroke="#000" stroke-width="1.2"/></svg><div class="abs ti" style="left:105px;top:115px;transform:scaleX(0.86)">KERB RETURN RHS</div><div class="abs" style="left:74px;top:143px;width:10px;border-top:1px dotted #555"></div><svg class="abs" style="left:85px;top:136px" width="14" height="14" viewBox="0 0 14 14"><path d="M0.8 10 L0.8 5.6 L3 3.8 L10 3.8 L12.2 5.6 L12.2 10 L10 10 L10 8.6 L3 8.6 L3 10 Z" fill="#cdeef5" stroke="#8b0a0a" stroke-width="1.4" stroke-linejoin="miter"/><path d="M2 6.5h9" stroke="#6f7fe6" stroke-width="1" stroke-dasharray="1.5 1"/><path d="M6.5 0.5v12.5" stroke="#000" stroke-width="1.2"/></svg><div class="abs ti" style="left:105px;top:133px;transform:scaleX(0.86)">ROAD DRAIN</div><div class="abs" style="left:74px;top:161px;width:10px;border-top:1px dotted #555"></div><svg class="abs" style="left:85px;top:154px" width="14" height="14" viewBox="0 0 14 14"><path d="M0.8 10 L0.8 5.6 L3 3.8 L10 3.8 L12.2 5.6 L12.2 10 L10 10 L10 8.6 L3 8.6 L3 10 Z" fill="#cdeef5" stroke="#8b0a0a" stroke-width="1.4" stroke-linejoin="miter"/><path d="M2 6.5h9" stroke="#6f7fe6" stroke-width="1" stroke-dasharray="1.5 1"/><path d="M6.5 0.5v12.5" stroke="#000" stroke-width="1.2"/></svg><div class="abs ti" style="left:105px;top:151px;transform:scaleX(0.86)">ROAD LHS</div><div class="abs" style="left:74px;top:179px;width:10px;border-top:1px dotted #555"></div><svg class="abs" style="left:85px;top:172px" width="14" height="14" viewBox="0 0 14 14"><path d="M0.8 10 L0.8 5.6 L3 3.8 L10 3.8 L12.2 5.6 L12.2 10 L10 10 L10 8.6 L3 8.6 L3 10 Z" fill="#cdeef5" stroke="#8b0a0a" stroke-width="1.4" stroke-linejoin="miter"/><path d="M2 6.5h9" stroke="#6f7fe6" stroke-width="1" stroke-dasharray="1.5 1"/><path d="M6.5 0.5v12.5" stroke="#000" stroke-width="1.2"/></svg><div class="abs ti" style="left:105px;top:169px;transform:scaleX(0.86)">ROAD RHS</div>
  <div class="abs" style="left:38px;top:535px;width:260px;height:21px;background:#f0f0f0;border:1px solid #8f8f8f;box-shadow:inset 0 0 0 1px #fff,inset 0 0 0 2px #a0a0a0"></div>
  <div class="abs btn" style="left:183px;top:563px;width:35px;height:19px;line-height:18px;font-size:12.5px">Finish</div>
</div></body></html>
